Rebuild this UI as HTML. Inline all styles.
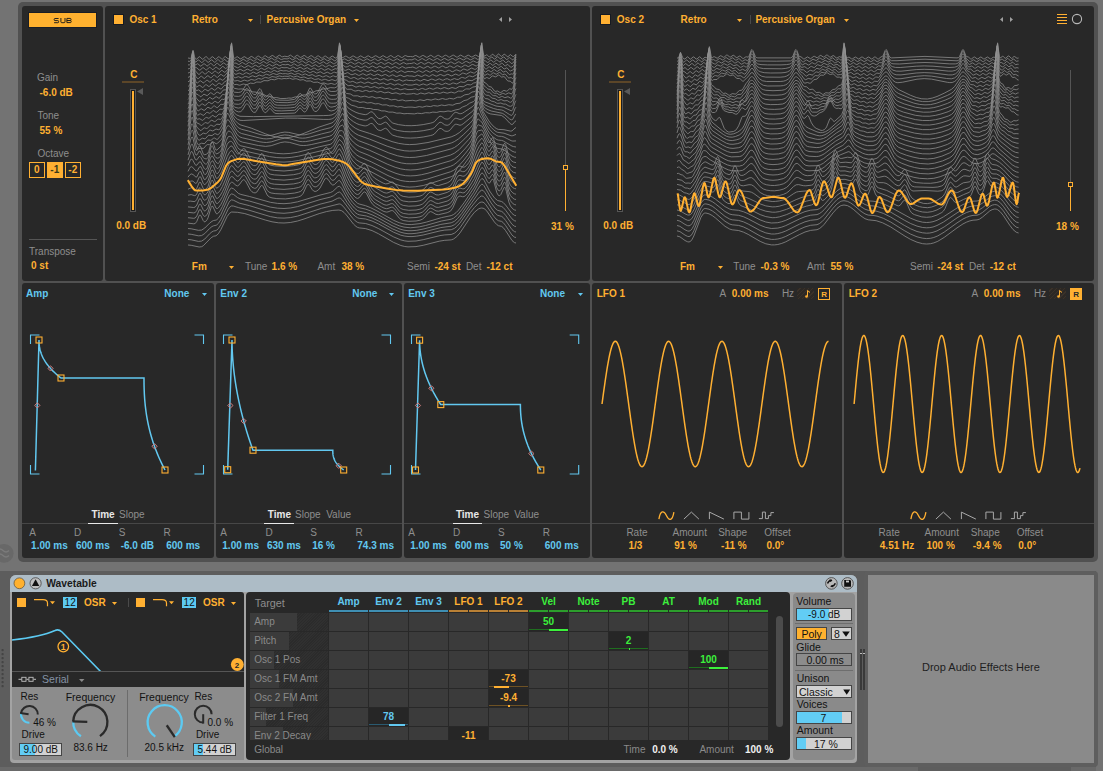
<!DOCTYPE html>
<html><head><meta charset="utf-8">
<style>
*{margin:0;padding:0;box-sizing:border-box}
html,body{width:1103px;height:771px;overflow:hidden;background:#737373;font-family:"Liberation Sans",sans-serif}
.a{position:absolute;display:block}
.p{position:absolute;background:#282828;border-radius:3px}
.t{position:absolute;line-height:1;white-space:nowrap;font-size:10px}
</style></head><body>
<div class="a" style="left:18px;top:2px;width:1080px;height:560px;background:#515151;border-radius:5px"></div>
<div class="p" style="left:22px;top:6px;width:81px;height:275px"></div>
<div class="p" style="left:105px;top:6px;width:485px;height:275px"></div>
<div class="p" style="left:592px;top:6px;width:502px;height:275px"></div>
<div class="p" style="left:22px;top:283px;width:192px;height:275px"></div>
<div class="p" style="left:216px;top:283px;width:186px;height:275px"></div>
<div class="p" style="left:404px;top:283px;width:186px;height:275px"></div>
<div class="p" style="left:592px;top:283px;width:250px;height:275px"></div>
<div class="p" style="left:844px;top:283px;width:250px;height:275px"></div>
<svg class="a" style="left:0px;top:540px" width="20" height="26" viewBox="0 540 20 26"><circle cx="4.2" cy="553.3" r="9.4" fill="#686868"/><path d="M-3 550.5q3-3 6 0t6 0M-3 555.5q3-3 6 0t6 0" stroke="#7b7b7b" stroke-width="1.3" fill="none"/></svg>
<div class="a" style="left:28px;top:12px;width:69px;height:16px;background:#1a1d24;"></div>
<div class="a" style="left:29px;top:13px;width:67px;height:14px;background:#ffb12f;"></div>
<svg class="a" style="left:50px;top:15px" width="26" height="10" viewBox="50 15 26 10"><path d="M58.6 18.5H55Q54.2 18.5 54.2 19.4V19.8Q54.2 20.6 55 20.6H57.8Q58.6 20.6 58.6 21.4V21.9Q58.6 22.7 57.8 22.7H54.1M60.9 18V21.8Q60.9 22.7 61.8 22.7H64.1Q65 22.7 65 21.8V18M66.9 18.4H70.2Q71 18.4 71 19.3V19.7Q71 20.5 70.2 20.5H66.9M70.2 20.5Q71.2 20.5 71.2 21.4V21.8Q71.2 22.6 70.4 22.6H66.9V18.4" stroke="#1a1a1a" stroke-width="0.95" fill="none"/></svg>
<div class="t" style="left:37.0px;top:72.73px;font-size:10px;color:#8e8e8e;">Gain</div>
<div class="t" style="left:39.5px;top:87.73px;font-size:10px;font-weight:bold;color:#ffb032;">-6.0 dB</div>
<div class="t" style="left:37.5px;top:110.83px;font-size:10px;color:#8e8e8e;">Tone</div>
<div class="t" style="left:39.5px;top:125.83px;font-size:10px;font-weight:bold;color:#ffb032;">55 %</div>
<div class="t" style="left:37.5px;top:148.73px;font-size:10px;color:#8e8e8e;">Octave</div>
<div class="a" style="left:29px;top:162px;width:16px;height:16px;background:transparent;border:1px solid #ffb032"></div>
<div class="t" style="left:34.0px;top:165.13px;font-size:10px;font-weight:bold;color:#ffb032;">0</div>
<div class="a" style="left:47px;top:162px;width:16px;height:16px;background:#ffb032;"></div>
<div class="t" style="left:50.3px;top:165.13px;font-size:10px;font-weight:bold;color:#3a3a1a;">-1</div>
<div class="a" style="left:65px;top:162px;width:16px;height:16px;background:transparent;border:1px solid #ffb032"></div>
<div class="t" style="left:68.3px;top:165.13px;font-size:10px;font-weight:bold;color:#ffb032;">-2</div>
<div class="a" style="left:29px;top:239px;width:68px;height:1px;background:#555;"></div>
<div class="t" style="left:29.0px;top:246.53px;font-size:10px;color:#8e8e8e;">Transpose</div>
<div class="t" style="left:31.0px;top:261.33px;font-size:10px;font-weight:bold;color:#ffb032;">0 st</div>
<div class="a" style="left:113px;top:14px;width:11px;height:11px;background:#161a22;"></div>
<div class="a" style="left:114px;top:15px;width:9px;height:9px;background:#ffb032;"></div>
<div class="t" style="left:129.4px;top:14.63px;font-size:10px;font-weight:bold;color:#ffb032;">Osc 1</div>
<div class="t" style="left:191.7px;top:14.63px;font-size:10px;font-weight:bold;color:#ffb032;">Retro</div>
<svg class="a" style="left:247px;top:18px" width="7" height="5" viewBox="247 18 7 5"><path d="M248 19H253L250.5 22Z" fill="#ffb032"/></svg>
<div class="a" style="left:260px;top:15px;width:1px;height:9px;background:#4a4a4a;"></div>
<div class="t" style="left:266.6px;top:14.63px;font-size:10px;font-weight:bold;color:#ffb032;">Percusive Organ</div>
<svg class="a" style="left:353px;top:18px" width="7" height="5" viewBox="353 18 7 5"><path d="M354 19H359L356.5 22Z" fill="#ffb032"/></svg>
<svg class="a" style="left:498px;top:15px" width="16" height="9" viewBox="498 15 16 9"><path d="M502 17V22L499 19.5Z" fill="#a0a0a0"/><path d="M509 17V22L512 19.5Z" fill="#a0a0a0"/></svg>
<div class="t" style="left:130.2px;top:69.83px;font-size:10px;font-weight:bold;color:#ffb032;">C</div>
<div class="a" style="left:122px;top:81px;width:22px;height:2px;background:#5c4628;"></div>
<div class="a" style="left:130px;top:89px;width:6px;height:123px;background:#555;"></div>
<div class="a" style="left:131px;top:90px;width:4px;height:121px;background:#1d1d1d;"></div>
<div class="a" style="left:131.7px;top:91px;width:2.6px;height:119px;background:#ffb032;"></div>
<svg class="a" style="left:136px;top:87px" width="8" height="9" viewBox="136 87 8 9"><path d="M137 91.5L143 88V95Z" fill="#5a5a5a"/></svg>
<div class="t" style="left:116.2px;top:220.63px;font-size:10px;font-weight:bold;color:#ffb032;">0.0 dB</div>
<div class="a" style="left:565px;top:70px;width:1px;height:95px;background:#555;"></div>
<div class="a" style="left:565px;top:170px;width:1px;height:41px;background:#ffb032;"></div>
<div class="a" style="left:563px;top:165px;width:5px;height:5px;background:transparent;border:1px solid #ffb032"></div>
<div class="t" style="left:551.0px;top:221.83px;font-size:10px;font-weight:bold;color:#ffb032;">31 %</div>
<div class="t" style="left:191.8px;top:261.53px;font-size:10px;font-weight:bold;color:#ffb032;">Fm</div>
<svg class="a" style="left:228px;top:265px" width="7" height="5" viewBox="228 265 7 5"><path d="M229 266H234L231.5 269Z" fill="#ffb032"/></svg>
<div class="t" style="left:244.9px;top:261.53px;font-size:10px;color:#8e8e8e;">Tune</div>
<div class="t" style="left:271.6px;top:261.53px;font-size:10px;font-weight:bold;color:#ffb032;">1.6 %</div>
<div class="t" style="left:317.4px;top:261.53px;font-size:10px;color:#8e8e8e;">Amt</div>
<div class="t" style="left:341.4px;top:261.53px;font-size:10px;font-weight:bold;color:#ffb032;">38 %</div>
<div class="t" style="left:407.1px;top:261.53px;font-size:10px;color:#8e8e8e;">Semi</div>
<div class="t" style="left:434.4px;top:261.53px;font-size:10px;font-weight:bold;color:#ffb032;">-24 st</div>
<div class="t" style="left:465.9px;top:261.53px;font-size:10px;color:#8e8e8e;">Det</div>
<div class="t" style="left:486.4px;top:261.53px;font-size:10px;font-weight:bold;color:#ffb032;">-12 ct</div>
<div class="a" style="left:600px;top:14px;width:11px;height:11px;background:#161a22;"></div>
<div class="a" style="left:601px;top:15px;width:9px;height:9px;background:#ffb032;"></div>
<div class="t" style="left:616.8px;top:14.63px;font-size:10px;font-weight:bold;color:#ffb032;">Osc 2</div>
<div class="t" style="left:680.6px;top:14.63px;font-size:10px;font-weight:bold;color:#ffb032;">Retro</div>
<svg class="a" style="left:736px;top:18px" width="7" height="5" viewBox="736 18 7 5"><path d="M737 19H742L739.5 22Z" fill="#ffb032"/></svg>
<div class="a" style="left:749.6px;top:15px;width:1px;height:9px;background:#4a4a4a;"></div>
<div class="t" style="left:755.4px;top:14.63px;font-size:10px;font-weight:bold;color:#ffb032;">Percusive Organ</div>
<svg class="a" style="left:842.5px;top:18px" width="7" height="5" viewBox="842.5 18 7 5"><path d="M843.5 19H848.5L846.0 22Z" fill="#ffb032"/></svg>
<svg class="a" style="left:999px;top:15px" width="16" height="9" viewBox="999 15 16 9"><path d="M1003 17V22L1000 19.5Z" fill="#a0a0a0"/><path d="M1010 17V22L1013 19.5Z" fill="#a0a0a0"/></svg>
<div class="t" style="left:617.2px;top:69.83px;font-size:10px;font-weight:bold;color:#ffb032;">C</div>
<div class="a" style="left:609px;top:81px;width:22px;height:2px;background:#5c4628;"></div>
<div class="a" style="left:617px;top:89px;width:6px;height:123px;background:#555;"></div>
<div class="a" style="left:618px;top:90px;width:4px;height:121px;background:#1d1d1d;"></div>
<div class="a" style="left:618.7px;top:91px;width:2.6px;height:119px;background:#ffb032;"></div>
<svg class="a" style="left:623px;top:87px" width="8" height="9" viewBox="623 87 8 9"><path d="M624 91.5L630 88V95Z" fill="#5a5a5a"/></svg>
<div class="t" style="left:603.2px;top:220.63px;font-size:10px;font-weight:bold;color:#ffb032;">0.0 dB</div>
<div class="a" style="left:1070px;top:70px;width:1px;height:112px;background:#555;"></div>
<div class="a" style="left:1070px;top:187px;width:1px;height:24px;background:#ffb032;"></div>
<div class="a" style="left:1068px;top:182px;width:5px;height:5px;background:transparent;border:1px solid #ffb032"></div>
<div class="t" style="left:1056.0px;top:221.83px;font-size:10px;font-weight:bold;color:#ffb032;">18 %</div>
<div class="t" style="left:679.9px;top:261.53px;font-size:10px;font-weight:bold;color:#ffb032;">Fm</div>
<svg class="a" style="left:717px;top:265px" width="7" height="5" viewBox="717 265 7 5"><path d="M718 266H723L720.5 269Z" fill="#ffb032"/></svg>
<div class="t" style="left:733.2px;top:261.53px;font-size:10px;color:#8e8e8e;">Tune</div>
<div class="t" style="left:760.5px;top:261.53px;font-size:10px;font-weight:bold;color:#ffb032;">-0.3 %</div>
<div class="t" style="left:807.0px;top:261.53px;font-size:10px;color:#8e8e8e;">Amt</div>
<div class="t" style="left:830.5px;top:261.53px;font-size:10px;font-weight:bold;color:#ffb032;">55 %</div>
<div class="t" style="left:910.1px;top:261.53px;font-size:10px;color:#8e8e8e;">Semi</div>
<div class="t" style="left:937.3px;top:261.53px;font-size:10px;font-weight:bold;color:#ffb032;">-24 st</div>
<div class="t" style="left:969.0px;top:261.53px;font-size:10px;color:#8e8e8e;">Det</div>
<div class="t" style="left:989.7px;top:261.53px;font-size:10px;font-weight:bold;color:#ffb032;">-12 ct</div>
<svg class="a" style="left:1055px;top:12px" width="30" height="14" viewBox="1055 12 30 14"><path d="M1057 14.5H1067M1057 17.5H1067M1057 20.5H1067M1057 23.5H1067" stroke="#ffb032" stroke-width="1.2"/><circle cx="1077" cy="19" r="4.6" stroke="#b8b8b8" stroke-width="1.1" fill="none"/></svg>
<svg class="a" style="left:184px;top:36px" width="336" height="215" viewBox="184 36 336 215"><g stroke="#909090" stroke-width="0.9" fill="none" stroke-opacity="0.85"><path d="M188.0 58.0L190.4 58.4L191.2 57.5L193.0 50.3L193.6 52.0L194.4 56.3L195.2 58.6L196.0 59.3L196.8 59.0L199.2 56.7L200.0 56.9L202.4 59.3L203.2 59.1L205.6 56.7L206.4 56.8L208.8 59.2L209.6 59.1L212.0 56.8L212.8 56.8L215.2 59.2L216.0 59.2L218.4 56.8L219.2 56.7L221.6 59.1L222.4 59.2L224.8 56.8L225.6 56.7L228.0 58.8L228.8 58.7L229.6 57.3L231.6 42.8L233.6 57.3L234.4 58.3L235.2 58.1L236.8 56.9L237.6 56.8L240.0 58.7L240.8 58.9L244.0 56.7L244.8 56.8L247.2 58.6L248.0 58.7L251.2 56.4L252.0 56.6L254.4 58.4L255.2 58.3L257.6 56.3L258.4 56.1L261.6 58.1L262.4 57.9L264.8 55.8L265.6 55.8L268.0 57.6L268.8 57.8L272.0 55.5L272.8 55.5L275.2 57.4L276.0 57.5L279.2 55.2L280.0 55.4L281.6 56.7L282.4 56.8L284.8 56.2L287.2 56.7L288.0 56.5L290.4 55.1L293.6 57.4L294.4 57.2L296.8 55.3L297.6 55.3L300.0 57.3L300.8 57.5L304.0 55.4L304.8 55.6L307.2 57.6L308.0 57.7L310.4 55.9L311.2 55.7L312.0 55.9L314.4 57.9L315.2 57.9L317.6 56.0L318.4 55.9L321.6 58.1L322.4 58.0L324.8 56.1L325.6 56.1L328.0 58.0L328.8 58.3L329.6 58.0L332.0 56.1L332.8 56.2L335.2 58.1L336.0 58.0L336.8 57.5L337.6 55.9L339.5 42.8L341.6 56.7L342.4 57.5L343.2 57.4L345.6 56.1L346.4 56.3L348.8 57.9L349.6 58.0L352.8 56.0L353.6 56.1L356.8 58.0L357.6 57.8L360.0 56.1L360.8 55.9L364.0 57.8L364.8 57.8L368.0 55.8L368.8 56.0L371.2 57.7L372.0 57.8L375.2 55.8L376.0 55.8L379.2 57.7L380.0 57.6L382.4 55.9L383.2 55.7L386.4 57.6L387.2 57.6L390.4 55.6L391.2 55.7L393.6 57.4L394.4 57.6L395.2 57.4L397.6 55.7L398.4 55.6L401.6 57.5L402.4 57.4L404.8 55.7L405.6 55.6L408.0 56.6L410.4 56.5L412.8 56.8L415.2 55.5L416.0 55.5L419.2 57.4L420.0 57.2L422.4 55.5L423.2 55.4L426.4 57.3L427.2 57.3L430.4 55.3L431.2 55.4L433.6 57.1L434.4 57.3L435.2 57.0L437.6 55.4L438.4 55.3L441.6 57.2L442.4 57.1L444.8 55.4L445.6 55.2L446.4 55.4L448.8 57.1L449.6 57.2L452.8 55.2L453.6 55.2L456.8 57.2L457.6 57.0L460.0 55.3L460.8 55.1L464.0 57.1L464.8 57.1L468.0 55.1L468.8 55.3L471.2 56.9L472.0 57.1L475.2 55.1L476.0 55.1L478.4 56.6L479.2 56.5L480.0 55.0L481.8 42.7L483.2 52.8L484.0 56.0L484.8 56.1L486.4 54.9L487.2 55.0L488.8 56.6L489.6 56.9L492.0 54.4L492.8 54.3L495.2 56.4L496.0 56.3L498.4 54.0L499.2 54.3L500.8 56.1L501.6 56.4L504.0 54.3L504.8 54.2L507.2 56.7L508.0 56.7L510.4 54.6L512.8 56.5L513.6 56.5L516.0 54.1"/><path d="M188.0 61.2L189.6 61.4L190.4 61.0L191.2 59.5L192.4 52.7L193.0 50.9L194.4 59.5L195.2 62.1L196.0 62.1L197.6 60.3L198.4 59.9L199.2 60.3L200.8 62.0L201.6 62.5L202.4 62.2L204.8 59.9L205.6 60.1L208.0 62.4L208.8 62.1L211.2 59.8L212.0 59.9L214.4 62.2L215.2 62.1L217.6 59.8L218.4 59.8L220.8 62.1L221.6 62.0L224.0 59.6L224.8 59.5L227.2 61.7L228.0 61.6L228.8 60.7L229.6 58.3L231.0 45.5L231.2 44.2L231.6 43.8L232.8 55.1L233.6 59.8L234.4 60.5L236.0 59.7L236.8 59.6L239.2 61.4L240.0 61.5L243.2 59.3L244.0 59.6L246.4 61.3L247.2 61.2L249.6 59.3L250.4 59.1L253.6 61.1L254.4 60.9L256.8 58.9L257.6 58.8L260.0 60.5L260.8 60.7L264.0 58.5L264.8 58.5L267.2 60.3L268.0 60.3L271.2 58.1L272.0 58.3L274.4 60.0L275.2 60.0L277.6 58.0L278.4 57.9L280.8 59.4L281.6 59.5L284.0 58.7L287.2 58.9L289.6 57.9L292.0 59.6L292.8 59.9L296.0 57.8L296.8 58.0L299.2 59.9L300.0 60.0L303.2 58.0L304.0 58.3L306.4 60.2L307.2 60.2L309.6 58.4L310.4 58.3L313.6 60.5L314.4 60.3L316.8 58.6L317.6 58.5L320.0 60.4L320.8 60.7L324.0 58.7L324.8 58.8L327.2 60.7L328.0 60.8L331.2 58.7L332.0 59.0L334.4 60.8L335.2 60.7L336.8 59.4L337.6 58.1L339.5 43.7L340.0 44.8L341.6 58.4L342.4 59.7L344.8 58.8L348.0 60.7L348.8 60.7L352.0 58.8L352.8 59.0L355.2 60.7L356.0 60.8L359.2 58.9L360.0 58.9L363.2 60.8L364.0 60.6L366.4 59.0L367.2 58.8L370.4 60.7L371.2 60.7L374.4 58.8L375.2 58.9L377.6 60.6L378.4 60.7L381.6 58.8L382.4 58.8L385.6 60.7L386.4 60.6L388.8 59.0L389.6 58.8L392.8 60.6L393.6 60.7L396.8 58.8L397.6 58.9L400.0 60.5L400.8 60.7L401.6 60.5L404.0 58.9L404.8 58.8L407.2 60.0L408.0 60.1L409.6 59.7L412.0 59.9L414.4 58.8L415.2 58.8L417.6 60.4L418.4 60.6L421.6 58.7L422.4 58.6L425.6 60.5L426.4 60.4L428.8 58.7L429.6 58.5L432.8 60.3L433.6 60.4L436.8 58.5L437.6 58.5L440.0 60.1L440.8 60.3L441.6 60.1L444.0 58.5L444.8 58.4L448.0 60.3L448.8 60.2L452.0 58.3L452.8 58.5L455.2 60.1L456.0 60.2L459.2 58.2L460.0 58.2L463.2 60.0L464.0 59.8L466.4 58.1L467.2 58.0L470.4 59.8L471.2 59.7L474.4 57.8L475.2 57.9L477.6 59.4L478.4 59.3L479.2 58.7L480.0 55.8L481.6 43.4L483.2 55.3L484.0 58.2L485.6 57.7L486.4 57.8L488.0 59.3L488.8 59.5L491.2 57.1L492.0 57.0L494.4 59.1L495.2 58.9L496.8 57.1L497.6 56.7L498.4 57.0L500.0 58.8L500.8 59.0L503.2 57.0L504.0 57.0L506.4 59.5L507.2 59.4L508.8 57.9L509.6 57.6L510.4 58.0L512.0 59.7L512.8 59.8L513.6 59.3L514.4 58.3L516.0 54.5"/><path d="M188.0 64.9L189.6 64.8L190.4 64.1L191.2 62.1L192.4 53.8L193.0 51.9L194.4 62.4L195.2 65.1L197.6 63.7L198.4 64.1L200.0 65.9L200.8 66.2L204.0 63.6L204.8 64.0L206.4 65.7L207.2 66.0L208.0 65.7L209.6 63.9L210.4 63.4L211.2 63.6L213.6 65.8L214.4 65.6L216.8 63.3L217.6 63.4L220.0 65.6L220.8 65.4L223.2 62.9L224.0 62.9L226.4 65.0L227.2 64.9L228.8 62.7L229.6 58.9L231.2 44.7L231.6 45.8L232.8 58.3L233.6 62.5L234.4 63.2L236.0 63.0L238.4 64.5L239.2 64.5L241.6 62.7L242.4 62.5L245.6 64.4L246.4 64.2L248.8 62.4L249.6 62.3L252.0 63.9L252.8 64.1L256.0 62.0L256.8 62.0L259.2 63.6L260.0 63.7L263.2 61.5L264.0 61.7L266.4 63.3L267.2 63.2L269.6 61.4L270.4 61.2L273.6 63.0L274.4 62.8L276.8 61.0L277.6 60.9L280.0 62.6L280.8 62.6L283.2 61.5L286.4 61.7L288.8 61.0L291.2 62.6L292.0 62.7L295.2 60.8L296.0 61.0L298.4 62.8L299.2 62.8L301.6 61.1L302.4 61.0L305.6 63.1L306.4 63.0L308.8 61.3L309.6 61.3L312.0 63.2L312.8 63.4L316.0 61.5L316.8 61.7L319.2 63.5L320.0 63.6L323.2 61.7L324.0 62.0L326.4 63.8L327.2 63.7L329.6 62.0L330.4 61.8L333.6 63.8L334.4 63.7L336.8 62.1L337.6 61.0L338.3 57.1L339.5 45.4L340.0 45.0L341.6 59.6L342.4 62.0L344.8 62.4L347.2 63.9L348.0 63.7L350.4 62.2L351.2 62.2L354.4 64.1L355.2 64.1L358.4 62.3L359.2 62.5L361.6 64.0L362.4 64.2L365.6 62.3L366.4 62.3L369.6 64.1L370.4 64.0L372.8 62.4L373.6 62.3L376.8 64.1L377.6 64.2L380.8 62.4L381.6 62.5L384.0 64.1L384.8 64.3L388.0 62.5L388.8 62.5L392.0 64.4L392.8 64.3L395.2 62.7L396.0 62.5L396.8 62.8L399.2 64.3L400.0 64.4L403.2 62.6L404.0 62.7L406.4 64.0L409.6 63.5L411.2 63.5L413.6 62.8L414.4 62.8L416.8 64.3L417.6 64.3L420.8 62.4L421.6 62.5L424.0 64.1L424.8 64.2L428.0 62.4L428.8 62.3L432.0 64.1L432.8 64.0L435.2 62.4L436.0 62.2L436.8 62.4L439.2 63.9L440.0 64.0L443.2 62.1L444.0 62.2L446.4 63.7L447.2 63.9L448.0 63.7L450.4 62.1L451.2 62.0L454.4 63.8L455.2 63.7L458.4 61.8L459.2 61.9L461.6 63.4L462.4 63.5L465.6 61.5L466.4 61.4L469.6 63.0L470.4 62.8L472.8 61.1L473.6 61.0L476.8 62.6L478.4 62.0L479.2 60.6L480.0 56.1L481.2 45.1L481.6 44.6L483.2 58.2L484.0 60.8L485.6 61.0L487.2 62.4L488.0 62.5L490.4 60.2L491.2 60.2L493.6 62.2L494.4 61.9L496.0 60.2L496.8 59.8L497.6 60.2L499.2 61.8L500.0 62.0L502.4 60.1L503.2 60.2L505.6 62.6L506.4 62.6L508.0 61.2L508.8 61.0L511.2 63.4L512.0 63.5L513.6 62.4L514.4 61.0L516.0 55.5"/><path d="M188.0 68.9L189.6 68.5L190.4 67.7L191.2 65.0L192.8 53.3L193.6 57.3L194.4 64.7L195.2 67.7L196.8 67.8L199.2 70.0L200.0 70.2L202.4 68.0L203.2 67.7L204.0 68.1L205.6 69.7L206.4 70.0L207.2 69.5L208.8 67.7L209.6 67.3L210.4 67.6L212.0 69.3L212.8 69.6L213.6 69.3L215.2 67.5L216.0 67.1L216.8 67.3L218.4 69.0L219.2 69.4L220.0 69.0L222.4 66.5L223.2 66.6L225.6 68.6L226.4 68.3L228.0 66.3L228.8 64.4L231.0 46.2L231.6 48.6L232.8 61.7L233.6 65.6L234.4 66.3L237.6 67.8L238.4 67.6L240.8 65.9L241.6 65.9L244.0 67.5L244.8 67.6L248.0 65.6L248.8 65.7L251.2 67.2L252.0 67.3L255.2 65.2L256.0 65.4L258.4 66.9L259.2 66.8L261.6 65.0L262.4 64.8L265.6 66.5L266.4 66.3L268.8 64.5L269.6 64.4L272.0 65.9L272.8 66.1L276.0 64.1L276.8 64.1L279.2 65.7L280.0 65.8L282.4 64.5L285.6 64.8L288.0 64.3L290.4 65.7L291.2 65.6L293.6 64.0L294.4 63.9L297.6 65.9L298.4 65.7L300.8 64.2L301.6 64.2L304.0 65.9L304.8 66.1L308.0 64.4L308.8 64.6L311.2 66.3L312.0 66.5L315.2 64.7L316.0 65.0L318.4 66.7L319.2 66.7L321.6 65.1L322.4 65.0L325.6 67.0L326.4 66.8L328.8 65.2L329.6 65.2L332.0 66.8L332.8 67.0L335.2 65.5L336.8 65.3L337.6 64.4L338.3 60.6L339.5 47.9L340.0 46.0L341.6 60.1L342.4 64.4L343.2 65.5L345.6 67.0L347.2 66.9L349.6 65.6L350.4 65.7L353.6 67.6L354.4 67.5L356.8 66.1L357.6 66.0L360.8 67.7L361.6 67.7L364.8 66.0L365.6 66.1L368.0 67.6L368.8 67.8L372.0 66.1L372.8 66.1L376.0 67.9L376.8 67.8L379.2 66.3L380.0 66.2L383.2 68.0L384.0 68.0L387.2 66.3L388.0 66.5L390.4 68.0L391.2 68.2L394.4 66.6L395.2 66.5L398.4 68.3L399.2 68.3L401.6 66.8L402.4 66.6L405.6 68.2L408.8 67.4L410.4 67.5L412.8 67.0L416.0 68.3L416.8 68.2L419.2 66.6L420.0 66.5L423.2 68.2L424.0 68.2L427.2 66.4L428.0 66.4L430.4 67.9L431.2 68.0L434.4 66.3L435.2 66.2L438.4 67.9L439.2 67.8L441.6 66.3L442.4 66.0L443.2 66.2L445.6 67.7L447.2 67.5L449.6 66.0L450.4 66.1L453.6 67.7L454.4 67.5L456.8 65.9L457.6 65.7L460.8 67.2L461.6 67.1L464.8 65.1L465.6 65.2L468.0 66.5L468.8 66.5L472.0 64.5L472.8 64.4L476.0 66.0L476.8 65.8L478.4 64.4L479.2 62.0L481.2 45.8L481.8 48.1L483.2 61.3L484.0 63.9L486.4 65.6L487.2 65.7L489.6 63.5L490.4 63.5L492.8 65.4L493.6 65.1L495.2 63.4L496.0 63.1L498.4 65.0L499.2 65.1L501.6 63.2L502.4 63.4L504.8 65.8L505.6 65.8L507.2 64.6L508.0 64.5L510.4 67.1L511.2 67.3L513.6 65.8L514.4 64.0L515.4 58.7L516.0 57.0"/><path d="M188.0 73.0L189.6 72.5L190.4 71.6L191.2 67.9L192.4 56.6L192.8 55.0L193.6 59.2L194.4 66.7L195.2 70.6L198.4 74.3L199.2 74.4L201.6 72.1L202.4 71.9L204.8 74.0L205.6 74.1L208.0 71.7L208.8 71.4L209.6 71.8L211.2 73.4L212.0 73.6L214.4 71.4L215.2 71.0L216.0 71.4L217.6 73.0L218.4 73.3L219.2 72.9L220.8 70.9L221.6 70.4L222.4 70.6L224.0 72.0L224.8 72.3L225.6 71.9L228.0 68.9L228.8 66.1L230.4 49.9L231.0 48.0L232.8 65.3L233.6 69.0L234.4 69.9L236.8 71.1L240.0 69.4L240.8 69.5L243.2 70.9L244.0 71.0L247.2 69.1L248.0 69.3L250.4 70.6L251.2 70.6L253.6 68.9L254.4 68.7L257.6 70.2L258.4 70.0L260.8 68.3L261.6 68.2L264.0 69.5L264.8 69.7L268.0 67.7L268.8 67.7L271.2 69.1L272.0 69.1L275.2 67.2L276.0 67.4L278.4 68.8L279.2 68.8L281.6 67.4L284.0 67.8L287.2 67.6L289.6 68.6L290.4 68.6L292.8 67.1L293.6 67.1L296.0 68.7L296.8 68.9L300.0 67.3L300.8 67.4L303.2 69.1L304.0 69.2L307.2 67.6L310.4 69.5L311.2 69.5L313.6 68.1L314.4 68.1L317.6 70.0L318.4 69.9L320.8 68.4L321.6 68.4L324.0 70.0L324.8 70.3L328.0 68.6L328.8 68.7L331.2 70.3L332.0 70.3L335.2 68.6L336.8 69.1L337.6 68.1L338.3 64.2L339.5 51.1L340.1 47.7L340.7 50.2L342.4 66.5L343.2 69.0L344.8 70.4L345.6 70.4L348.8 69.1L352.0 71.0L352.8 71.2L356.0 69.8L356.8 69.8L360.0 71.5L360.8 71.4L363.2 69.9L364.0 69.8L367.2 71.5L368.0 71.5L371.2 69.9L375.2 71.7L378.4 70.1L379.2 70.1L382.4 71.9L383.2 71.8L385.6 70.5L386.4 70.4L389.6 72.1L390.4 72.2L393.6 70.6L394.4 70.7L396.8 72.2L397.6 72.4L400.8 70.9L401.6 70.8L404.8 72.5L408.0 71.4L410.4 71.7L412.0 71.4L415.2 72.5L418.4 70.8L419.2 70.8L422.4 72.3L423.2 72.2L425.6 70.7L426.4 70.5L429.6 72.1L430.4 72.1L433.6 70.4L434.4 70.4L436.8 71.8L437.6 72.0L440.8 70.3L442.4 70.5L444.8 71.8L445.6 71.7L448.8 70.1L449.6 70.3L452.0 71.7L452.8 71.7L456.0 69.9L456.8 69.9L460.0 71.2L460.8 70.9L463.2 69.2L464.0 69.0L467.2 70.3L468.0 70.1L471.2 68.1L472.0 68.1L474.4 69.3L475.2 69.4L476.8 68.5L478.4 66.7L479.2 63.0L480.6 49.3L480.8 48.1L481.2 47.6L483.2 64.8L484.0 67.4L485.6 68.8L486.4 68.9L488.8 66.9L489.6 66.9L492.0 68.6L492.8 68.2L494.4 66.6L495.2 66.3L497.6 68.2L498.4 68.2L500.8 66.4L501.6 66.6L504.0 69.0L504.8 68.9L506.4 67.9L507.2 68.0L509.6 70.7L510.4 71.0L513.6 69.6L514.4 67.2L515.4 60.9L516.0 59.0"/><path d="M188.0 77.3L189.6 76.9L190.4 75.5L191.2 70.4L192.4 58.2L192.8 56.9L195.2 74.4L196.0 76.7L197.6 78.6L198.4 78.6L200.8 76.4L201.6 76.3L204.0 78.4L204.8 78.4L207.2 75.9L208.0 75.7L210.4 77.6L211.2 77.7L213.6 75.4L214.4 75.1L216.8 77.2L217.6 77.4L220.0 74.9L220.8 74.5L221.6 74.7L223.2 76.0L224.0 76.2L224.8 75.6L228.0 71.6L228.8 67.2L230.4 50.7L231.0 50.9L231.2 52.3L232.8 69.1L233.6 72.6L234.4 73.8L236.0 74.4L239.2 73.0L242.4 74.4L243.2 74.4L245.6 72.9L246.4 72.7L249.6 74.1L250.4 73.9L252.8 72.3L253.6 72.2L256.0 73.4L256.8 73.5L260.0 71.6L260.8 71.6L263.2 72.8L264.0 72.8L267.2 71.0L270.4 72.3L271.2 72.2L273.6 70.6L274.4 70.4L277.6 71.8L280.8 70.3L283.2 70.9L286.4 70.7L288.8 71.4L289.6 71.3L292.0 70.1L292.8 70.2L295.2 71.7L296.0 71.8L299.2 70.4L302.4 72.1L303.2 72.1L305.6 70.9L306.4 70.8L309.6 72.7L310.4 72.6L312.8 71.4L313.6 71.4L316.8 73.2L320.0 71.8L320.8 71.9L323.2 73.5L324.0 73.6L327.2 72.1L330.4 73.7L331.2 73.7L333.6 72.3L334.4 72.2L336.8 73.0L337.6 71.7L338.3 67.8L340.1 50.1L340.7 50.8L340.8 51.5L342.4 68.1L343.2 72.2L344.0 73.6L344.8 73.8L347.2 72.7L348.0 72.7L350.4 74.3L352.0 74.8L355.2 73.6L358.4 75.3L359.2 75.4L362.4 73.8L363.2 73.8L366.4 75.4L370.4 73.8L373.6 75.5L374.4 75.5L377.6 74.1L381.6 75.9L384.8 74.5L385.6 74.5L388.8 76.3L389.6 76.2L392.0 75.0L392.8 74.8L396.0 76.5L396.8 76.6L400.0 75.1L400.8 75.2L404.0 76.8L407.2 75.6L409.6 76.0L412.0 76.0L414.4 76.6L417.6 75.1L421.6 76.6L424.8 75.0L425.6 74.9L428.8 76.4L429.6 76.3L432.0 74.8L432.8 74.6L436.0 76.1L436.8 76.1L440.0 74.5L440.8 74.5L444.0 76.0L447.2 74.4L448.0 74.3L451.2 75.9L452.0 75.8L455.2 74.1L456.0 74.2L458.4 75.3L459.2 75.3L462.4 73.2L463.2 73.1L466.4 74.2L470.4 71.9L473.6 73.0L474.4 73.0L477.6 70.7L478.4 68.9L480.8 49.5L481.2 50.3L481.6 53.3L483.2 68.4L484.0 71.1L484.8 72.0L485.6 72.2L488.0 70.4L488.8 70.4L490.4 71.6L491.2 71.9L493.6 69.8L494.4 69.6L496.8 71.3L497.6 71.3L500.0 69.5L500.8 69.7L503.2 72.0L504.0 71.9L505.6 71.1L506.4 71.3L508.8 74.2L509.6 74.6L511.2 73.9L512.8 74.1L513.6 73.6L514.4 70.4L515.4 63.5L516.0 61.6"/><path d="M188.0 81.7L189.6 81.2L190.4 78.9L192.0 63.3L192.4 60.1L192.8 59.1L193.6 63.8L195.2 78.9L196.0 81.9L196.8 82.9L197.6 82.9L200.0 80.8L200.8 80.9L203.2 82.9L204.0 82.7L206.4 80.3L207.2 80.2L209.6 82.0L210.4 81.9L212.8 79.5L213.6 79.4L216.0 81.5L216.8 81.6L219.2 79.0L220.0 78.7L222.4 80.2L223.2 80.2L225.6 77.4L227.2 76.4L228.0 74.2L230.4 52.4L231.0 54.6L232.8 73.0L233.6 76.4L234.4 77.6L235.2 77.8L238.4 76.7L241.6 78.0L242.4 77.8L244.8 76.5L245.6 76.4L248.8 77.5L252.0 75.8L252.8 75.8L255.2 76.8L256.0 76.8L259.2 75.0L262.4 76.1L263.2 75.9L265.6 74.4L266.4 74.2L269.6 75.3L272.8 73.6L273.6 73.5L276.8 74.7L280.0 73.1L282.4 73.8L285.6 73.6L288.0 74.1L291.2 73.0L294.4 74.5L295.2 74.5L297.6 73.4L298.4 73.4L301.6 75.0L302.4 75.0L304.8 74.0L305.6 74.0L308.8 75.7L312.0 74.6L312.8 74.8L315.2 76.3L316.0 76.4L319.2 75.3L322.4 76.9L323.2 76.9L325.6 75.8L326.4 75.7L329.6 77.2L330.4 77.1L332.8 75.9L333.6 75.9L336.0 76.9L336.8 76.6L337.6 75.1L338.4 70.6L340.0 54.0L340.7 52.3L342.4 69.0L343.2 74.6L344.0 76.6L344.8 76.8L346.4 76.3L347.2 76.5L350.4 78.4L351.2 78.4L353.6 77.5L354.4 77.5L357.6 79.2L358.4 79.2L361.6 77.8L365.6 79.3L368.8 77.9L369.6 77.9L372.8 79.5L376.8 78.2L380.0 79.9L380.8 79.9L384.0 78.6L388.0 80.4L391.2 79.1L392.8 79.5L395.2 80.8L396.0 80.8L399.2 79.5L402.4 81.0L403.2 81.1L406.4 79.9L408.8 80.5L411.2 80.4L413.6 80.8L416.8 79.6L420.0 80.9L420.8 80.9L424.0 79.3L428.0 80.7L431.2 79.1L432.8 79.3L435.2 80.4L436.0 80.3L439.2 78.8L442.4 80.2L443.2 80.2L445.6 79.0L447.2 78.7L450.4 80.2L454.4 78.5L456.8 79.4L458.4 79.4L461.6 77.4L462.4 77.4L464.8 78.2L465.6 78.2L468.8 76.1L469.6 75.9L472.8 76.8L476.8 74.6L477.6 73.8L478.4 70.7L480.0 54.9L480.6 51.8L481.2 53.8L483.2 72.3L484.0 74.9L484.8 75.5L487.2 73.9L488.0 74.0L489.6 75.0L490.4 75.1L492.8 73.0L493.6 72.8L496.0 74.2L496.8 74.1L499.2 72.4L500.0 72.6L502.4 74.7L504.8 74.1L505.6 74.4L508.0 77.5L508.8 78.0L511.2 77.6L512.8 78.7L513.6 77.7L515.4 66.6L516.0 64.8"/><path d="M188.0 86.1L188.8 86.0L189.6 85.3L190.4 81.8L192.0 65.2L192.4 62.4L192.8 61.8L193.6 67.0L195.2 83.5L196.0 86.6L196.8 87.1L199.2 85.3L200.0 85.5L202.4 87.4L203.2 87.2L205.6 84.8L206.4 84.8L208.8 86.5L209.6 86.3L212.0 83.8L212.8 83.8L215.2 85.8L216.0 85.8L218.4 83.3L219.2 83.1L221.6 84.6L222.4 84.4L224.8 81.5L226.4 81.0L227.2 80.1L228.0 75.9L229.6 58.1L230.4 55.2L232.8 77.0L233.6 80.2L234.4 81.1L237.6 80.5L240.8 81.6L244.0 80.2L244.8 80.2L247.2 81.0L248.0 81.0L251.2 79.4L254.4 80.2L255.2 80.1L258.4 78.4L261.6 79.2L264.8 77.5L265.6 77.4L268.8 78.2L272.0 76.5L276.0 77.3L279.2 75.9L282.4 76.6L284.8 76.2L288.0 76.4L290.4 75.7L293.6 77.1L296.8 76.1L297.6 76.2L300.8 77.7L304.0 76.9L308.0 78.6L311.2 77.8L314.4 79.4L315.2 79.5L318.4 78.7L321.6 80.3L324.8 79.3L325.6 79.4L328.8 80.7L332.0 79.6L335.2 80.7L336.0 80.6L336.8 80.0L337.6 78.4L338.3 75.1L340.0 58.0L340.7 54.7L341.6 60.0L343.2 76.2L344.0 79.1L344.8 79.8L346.4 80.2L348.8 81.9L350.4 82.0L352.8 81.3L356.8 83.2L360.8 81.9L364.0 83.3L364.8 83.3L368.0 82.0L372.0 83.6L375.2 82.4L376.0 82.4L379.2 84.0L383.2 82.9L386.4 84.5L387.2 84.6L390.4 83.4L394.4 85.1L397.6 83.9L399.2 84.2L401.6 85.4L402.4 85.4L404.8 84.3L405.6 84.2L408.0 85.0L412.0 85.1L416.0 84.1L419.2 85.4L423.2 83.9L426.4 85.1L427.2 85.1L430.4 83.6L434.4 84.8L437.6 83.3L438.4 83.3L441.6 84.6L442.4 84.5L445.6 83.1L448.8 84.4L450.4 84.2L452.8 83.0L453.6 83.0L456.8 84.0L460.8 81.8L463.2 82.4L464.8 82.3L468.0 80.2L472.0 80.7L475.2 78.8L476.8 78.3L477.6 76.7L478.4 71.8L480.0 55.8L480.6 54.5L483.0 75.1L484.0 78.4L484.8 78.7L486.4 77.6L487.2 77.6L488.8 78.4L489.6 78.4L492.0 76.1L492.8 75.8L495.2 76.9L496.0 76.7L498.4 75.0L499.2 75.2L501.6 77.1L504.0 76.6L504.8 77.1L507.2 80.4L508.0 81.0L510.4 81.2L512.0 82.9L512.8 83.2L513.6 81.5L515.4 70.1L516.0 68.5"/><path d="M188.0 90.6L188.8 90.4L189.6 88.9L190.4 84.3L192.0 67.7L192.4 65.4L192.8 65.2L195.2 87.6L196.0 90.5L196.8 90.7L198.4 89.8L201.6 92.1L202.4 91.7L204.8 89.4L205.6 89.5L208.0 91.0L208.8 90.7L211.2 88.2L212.0 88.3L214.4 90.2L215.2 90.0L217.6 87.7L218.4 87.6L220.8 89.0L221.6 88.7L224.0 85.7L224.8 85.3L226.4 85.3L227.2 82.9L228.0 76.5L229.6 59.3L230.4 58.9L232.2 76.7L232.8 81.1L233.6 83.9L234.4 84.6L236.8 84.4L239.2 85.2L240.0 85.2L243.2 84.0L246.4 84.6L247.2 84.5L250.4 83.1L253.6 83.5L256.8 82.0L260.8 82.2L264.0 80.6L268.0 80.8L271.2 79.3L274.4 79.8L278.4 78.4L281.6 79.0L284.0 78.5L286.4 78.7L289.6 78.2L292.8 79.3L295.2 78.7L296.8 78.8L300.0 80.1L303.2 79.6L306.4 81.1L310.4 80.9L313.6 82.4L317.6 82.1L320.8 83.5L324.0 82.9L327.2 84.1L328.0 84.2L331.2 83.4L334.4 84.4L335.2 84.3L336.8 83.4L337.6 82.0L338.3 78.9L340.1 61.6L340.8 57.8L341.6 60.9L343.2 77.1L344.0 81.5L344.8 83.2L348.0 85.6L348.8 85.7L352.0 85.2L356.0 87.2L359.2 86.1L360.0 86.2L363.2 87.4L367.2 86.2L370.4 87.6L371.2 87.6L374.4 86.5L378.4 88.1L381.6 87.1L382.4 87.2L385.6 88.7L389.6 87.8L392.8 89.3L393.6 89.4L396.8 88.3L400.8 89.8L404.8 88.7L408.0 89.6L412.0 89.5L415.2 88.7L418.4 89.8L421.6 88.5L422.4 88.4L425.6 89.6L429.6 88.1L432.8 89.2L433.6 89.2L436.0 88.0L437.6 87.8L440.8 88.9L444.0 87.6L444.8 87.6L448.0 88.8L448.8 88.8L452.0 87.5L455.2 88.4L456.0 88.4L459.2 86.5L460.0 86.4L463.2 86.8L467.2 84.5L470.4 84.9L471.2 84.7L473.6 83.0L476.0 82.6L476.8 81.9L477.6 78.9L480.0 57.6L480.6 58.1L480.8 59.2L482.4 75.0L483.2 80.1L484.0 82.2L486.4 83.5L488.8 86.5L491.2 87.0L492.0 87.7L494.4 91.0L495.2 91.4L497.6 91.0L500.0 92.5L500.8 92.6L503.2 90.7L504.0 90.4L506.4 91.2L507.2 90.9L509.6 88.8L512.0 89.3L512.8 88.4L513.6 85.7L515.2 75.3L516.0 72.8"/><path d="M188.0 95.1L188.8 94.6L189.6 92.3L192.4 69.1L192.8 69.2L193.0 70.1L195.2 91.1L196.0 93.9L198.4 94.9L200.0 96.5L200.8 96.7L201.6 96.3L203.2 94.6L204.0 94.2L207.2 95.7L210.4 92.8L211.2 92.9L213.6 94.6L214.4 94.3L216.8 92.2L217.6 92.2L220.0 93.6L220.8 93.1L223.2 90.1L224.0 89.8L225.6 90.1L226.4 88.8L227.2 84.4L228.8 67.1L229.6 61.6L230.4 63.4L232.8 85.1L233.6 87.6L234.4 88.3L238.4 89.1L242.4 88.9L245.6 90.1L248.8 90.2L252.8 91.9L256.0 92.1L260.0 94.0L263.2 94.3L266.4 95.9L270.4 96.3L273.6 97.7L276.8 97.6L280.8 98.6L286.4 98.4L288.8 98.0L291.2 98.2L295.2 96.9L298.4 96.9L302.4 95.1L305.6 94.8L308.8 93.2L312.8 92.5L316.0 90.8L320.0 90.3L323.2 88.9L326.4 88.9L330.4 87.6L334.4 87.9L336.8 87.0L337.6 85.8L338.4 82.4L340.8 61.5L341.6 62.5L343.2 77.8L344.0 83.7L344.8 86.8L345.6 88.2L347.2 89.3L351.2 89.2L353.6 90.6L355.2 91.1L358.4 90.4L362.4 91.5L365.6 90.4L366.4 90.5L369.6 91.7L373.6 90.8L376.8 92.1L377.6 92.2L380.8 91.4L384.8 92.9L388.0 92.1L388.8 92.2L392.0 93.6L396.0 92.8L400.0 94.2L403.2 93.2L406.4 94.2L411.2 93.9L413.6 93.4L416.8 94.3L417.6 94.3L420.8 93.0L424.8 94.0L428.8 92.7L432.0 93.7L436.0 92.3L439.2 93.3L440.8 93.1L443.2 92.1L447.2 93.2L451.2 92.1L454.4 93.0L455.2 92.8L458.4 91.1L462.4 91.2L465.6 89.1L466.4 88.9L469.6 89.0L472.8 87.1L476.0 86.5L476.8 84.7L477.6 80.1L479.2 64.1L480.0 60.4L480.8 63.8L482.4 79.3L483.2 83.9L484.0 85.7L485.6 86.8L487.2 88.5L488.0 89.1L490.4 89.4L493.6 93.0L494.4 93.3L496.8 93.1L499.2 94.8L500.0 94.9L502.4 93.4L503.2 93.3L505.6 94.4L508.8 92.8L511.2 93.9L512.0 93.6L512.8 92.2L513.6 89.4L515.2 79.8L516.0 77.5"/><path d="M188.0 99.6L188.8 98.7L189.6 95.7L191.8 76.1L192.4 73.3L193.0 74.6L195.2 94.2L196.0 97.4L196.8 98.7L199.2 101.3L200.0 101.4L202.4 99.3L203.2 99.0L205.6 100.4L206.4 100.5L209.6 97.5L210.4 97.7L212.0 98.9L212.8 99.1L216.0 96.7L216.8 96.9L218.4 98.0L219.2 98.2L220.0 97.7L222.4 94.6L223.2 94.4L224.8 94.9L225.6 94.1L226.4 91.1L228.8 68.2L229.6 65.0L230.4 68.6L232.0 84.2L232.8 89.2L233.6 91.5L234.4 92.2L238.4 92.5L240.8 92.0L242.4 90.6L245.6 85.5L246.4 84.8L247.2 84.7L248.8 86.7L252.0 92.8L253.6 94.4L255.2 94.7L256.0 94.2L259.2 89.0L260.0 88.6L260.8 89.4L263.2 94.8L264.8 96.9L265.6 97.2L266.4 96.9L268.8 94.4L269.6 93.9L270.4 94.1L274.4 99.1L276.0 99.8L280.0 100.2L288.0 100.3L294.4 99.4L296.0 98.4L299.2 94.0L300.0 93.5L300.8 93.7L303.2 96.1L304.0 96.6L304.8 96.6L305.6 96.1L306.4 95.0L309.6 88.2L310.4 88.0L311.2 88.9L313.6 93.1L314.4 93.8L316.0 93.9L317.6 92.6L321.6 85.2L322.4 84.2L323.2 83.8L324.0 84.2L324.8 85.2L327.2 89.1L328.8 90.8L331.2 91.5L335.2 91.4L336.8 91.0L337.6 89.8L338.3 87.1L340.7 66.5L340.8 66.0L341.6 65.2L344.0 86.2L344.8 90.6L345.6 92.6L346.4 93.4L350.4 94.0L353.6 95.9L357.6 95.8L360.8 97.0L364.8 96.1L368.8 97.4L372.0 96.7L372.8 96.8L376.0 98.1L380.0 97.5L384.0 99.0L387.2 98.4L391.2 99.9L395.2 99.3L398.4 100.6L402.4 99.9L405.6 100.9L412.8 100.3L416.0 101.0L420.0 99.8L424.0 100.6L427.2 99.4L431.2 100.1L435.2 98.9L438.4 99.7L442.4 98.5L445.6 99.4L447.2 99.2L449.6 98.3L453.6 99.0L457.6 97.2L460.8 97.2L464.8 94.8L468.8 94.2L472.0 92.0L475.2 91.5L476.0 90.3L476.8 87.1L479.2 65.8L480.0 64.3L480.6 67.4L482.4 83.7L483.2 87.7L484.0 89.4L486.4 91.6L487.2 92.1L489.6 92.3L492.8 95.4L493.6 95.7L496.0 95.7L498.4 97.5L499.2 97.6L501.6 96.4L502.4 96.4L504.8 97.7L508.0 96.7L510.4 98.1L511.2 98.1L512.0 97.5L512.8 96.1L513.6 93.4L515.2 84.7L516.0 82.7"/><path d="M188.0 104.2L188.8 102.7L189.6 99.2L191.8 80.1L192.4 77.7L193.0 79.0L195.2 97.6L196.0 101.6L196.8 103.9L198.4 106.0L199.2 106.1L201.6 104.1L202.4 103.9L204.8 105.4L205.6 105.3L208.0 102.7L208.8 102.3L209.6 102.5L211.2 103.6L212.0 103.7L214.4 101.6L215.2 101.3L217.6 102.8L218.4 102.9L221.6 99.3L222.4 99.2L224.0 99.6L224.8 99.1L225.6 96.9L226.4 92.4L228.8 70.5L229.6 69.4L230.4 74.2L232.2 90.3L232.8 93.3L233.6 95.4L234.4 96.1L238.4 96.4L240.8 95.8L242.4 94.4L245.6 89.2L246.4 88.5L247.2 88.4L248.8 90.3L252.0 96.3L253.6 97.8L255.2 98.1L256.0 97.6L259.2 92.1L260.0 91.8L260.8 92.5L263.2 97.8L264.8 99.8L265.6 100.0L266.4 99.7L268.8 97.1L269.6 96.6L270.4 96.7L274.4 101.6L276.0 102.3L278.4 102.5L287.2 102.7L294.4 101.9L296.0 101.0L299.2 96.6L300.0 96.2L300.8 96.4L303.2 98.9L304.0 99.4L304.8 99.4L305.6 99.0L306.4 97.9L309.6 91.3L310.4 91.2L311.2 92.0L313.6 96.4L314.4 97.1L316.0 97.2L317.6 96.0L321.6 88.8L322.4 87.8L323.2 87.5L324.0 87.9L324.8 88.9L327.2 92.9L328.8 94.6L330.4 95.3L332.0 95.4L335.2 95.3L336.8 94.8L337.6 93.7L338.4 90.7L340.7 71.6L341.6 68.8L342.4 72.7L344.8 93.7L345.6 96.5L346.4 97.5L348.8 98.3L352.8 100.8L356.0 101.0L360.0 102.4L363.2 101.9L364.8 102.1L367.2 103.0L371.2 102.6L375.2 103.9L378.4 103.6L382.4 105.0L386.4 104.8L389.6 106.0L393.6 105.8L397.6 107.0L400.8 106.5L404.8 107.5L408.0 107.1L412.0 107.1L415.2 107.5L419.2 106.6L422.4 107.2L426.4 106.1L430.4 106.6L433.6 105.6L437.6 106.1L441.6 105.0L444.8 105.6L448.8 104.7L452.8 105.2L456.0 103.7L460.0 103.2L464.0 100.6L467.2 99.9L471.2 97.2L474.4 96.5L475.2 95.6L476.0 93.4L476.8 88.9L479.2 68.7L480.0 69.0L482.4 88.1L483.0 91.0L484.0 93.4L485.6 94.8L486.4 95.2L488.8 95.4L492.0 98.1L495.2 98.7L497.6 100.3L498.4 100.4L500.8 99.6L501.6 99.7L504.0 100.9L507.2 100.6L509.6 102.1L510.4 102.3L512.0 101.5L512.8 100.2L513.6 97.8L515.2 90.1L516.0 88.4"/><path d="M188.0 108.6L188.8 106.8L189.6 103.0L191.8 84.4L192.4 82.2L193.0 83.5L193.6 87.5L196.0 106.6L196.8 109.4L197.6 110.6L198.4 110.8L200.8 109.0L201.6 108.9L204.0 110.4L204.8 110.2L207.2 107.6L208.0 107.3L210.4 108.4L211.2 108.4L213.6 106.1L214.4 105.9L216.8 107.6L217.6 107.6L220.8 104.2L223.2 104.5L224.0 104.0L224.8 102.3L225.6 98.9L228.0 78.6L228.8 74.0L229.6 74.6L232.2 94.8L232.8 97.5L233.6 99.4L234.4 100.0L238.4 100.3L240.8 99.7L242.4 98.3L245.6 93.0L246.4 92.3L247.2 92.2L248.8 94.0L252.0 99.9L253.6 101.4L255.2 101.5L256.0 101.0L259.2 95.5L260.0 95.1L260.8 95.7L263.2 101.0L264.8 102.9L265.6 103.1L266.4 102.7L268.8 100.1L269.6 99.5L270.4 99.6L274.4 104.4L276.0 105.0L277.6 105.2L286.4 105.3L294.4 104.6L296.0 103.7L299.2 99.5L300.0 99.0L300.8 99.3L303.2 101.9L304.0 102.4L304.8 102.5L305.6 102.1L306.4 101.1L309.6 94.6L310.4 94.4L311.2 95.3L313.6 99.8L314.4 100.6L316.0 100.8L317.6 99.6L321.6 92.5L322.4 91.5L323.2 91.2L324.0 91.7L324.8 92.7L328.0 97.8L329.6 98.9L331.2 99.3L333.6 99.3L336.0 99.1L336.8 98.7L337.6 97.6L338.4 94.9L340.8 76.4L341.6 73.2L342.4 75.5L344.8 96.2L345.6 99.8L346.4 101.5L347.2 102.3L351.2 105.1L355.2 106.2L358.4 107.6L362.4 107.5L366.4 108.5L370.4 108.5L373.6 109.5L377.6 109.6L381.6 110.9L384.8 110.9L388.8 112.1L392.8 112.1L396.8 113.2L400.0 113.0L404.0 113.8L407.2 113.5L414.4 113.9L417.6 113.2L421.6 113.6L425.6 112.7L429.6 112.9L432.8 112.1L436.8 112.4L440.0 111.5L444.0 111.8L448.0 111.0L451.2 111.4L455.2 110.0L459.2 109.2L462.4 107.1L466.4 105.5L469.6 103.2L473.6 101.5L474.4 100.7L475.2 99.2L476.0 96.0L478.4 76.1L479.2 72.5L480.0 74.3L482.4 92.5L483.2 95.8L484.0 97.4L484.8 98.2L485.6 98.6L488.0 98.9L491.2 101.0L494.4 101.8L496.8 103.2L497.6 103.4L500.8 103.0L503.2 104.0L505.6 104.1L508.8 106.0L510.4 106.3L512.0 105.8L512.8 104.8L515.2 95.8L516.0 94.4"/><path d="M188.0 113.1L188.8 110.9L189.6 106.8L191.8 88.7L192.4 86.8L193.0 88.1L193.6 92.1L196.0 111.9L196.8 114.5L197.6 115.3L200.0 113.8L200.8 113.9L203.2 115.4L204.0 115.1L206.4 112.6L207.2 112.3L209.6 113.3L210.4 113.1L212.8 110.7L213.6 110.6L216.0 112.3L216.8 112.3L220.0 109.1L222.4 109.4L223.2 108.9L224.0 107.4L224.8 104.8L225.6 100.6L228.0 81.4L228.8 78.4L229.6 80.2L232.2 99.3L232.8 101.7L233.6 103.3L234.4 104.0L238.4 104.3L240.8 103.7L242.4 102.2L245.6 96.9L246.4 96.1L247.2 96.0L248.8 97.8L252.0 103.6L253.6 105.0L255.2 105.1L256.0 104.5L259.2 98.9L260.0 98.4L260.8 99.1L263.2 104.2L264.8 106.1L265.6 106.2L266.4 105.9L268.8 103.1L269.6 102.6L270.4 102.6L273.6 106.6L275.2 107.6L277.6 108.0L283.2 108.1L290.4 107.9L294.4 107.4L296.0 106.6L299.2 102.5L300.0 102.0L300.8 102.3L303.2 105.0L304.0 105.5L304.8 105.6L305.6 105.2L306.4 104.3L309.6 97.9L310.4 97.8L311.2 98.7L313.6 103.3L314.4 104.1L316.0 104.3L317.6 103.2L319.2 100.8L321.6 96.2L322.4 95.3L323.2 95.0L324.0 95.5L324.8 96.5L328.0 101.7L329.6 102.9L331.2 103.2L333.6 103.2L336.0 103.0L336.8 102.6L337.6 101.6L338.4 99.1L340.8 82.0L341.6 78.1L342.4 79.0L345.6 103.1L346.4 105.7L348.0 107.8L352.0 110.4L356.0 112.4L359.2 113.5L364.0 114.5L365.6 114.6L367.2 114.2L370.4 112.0L372.0 111.8L373.6 113.0L376.8 117.1L378.4 118.3L380.8 118.7L384.8 116.4L385.6 116.2L387.2 117.1L390.4 121.2L392.8 123.1L398.4 124.6L405.6 125.6L411.2 125.7L416.8 125.4L423.2 124.6L430.4 123.2L432.8 122.5L434.4 121.7L438.4 117.2L440.0 116.1L441.6 116.5L444.8 118.8L447.2 119.2L448.8 118.7L450.4 117.5L453.6 113.5L455.2 112.3L456.8 112.5L459.2 113.6L460.8 113.7L462.4 113.2L464.8 111.7L472.8 106.4L474.4 104.7L475.2 102.5L476.0 98.5L478.4 79.2L479.2 77.1L480.0 79.9L482.4 97.0L483.2 99.9L484.0 101.2L484.8 101.8L496.0 106.0L503.2 107.1L511.2 110.8L512.0 110.6L512.8 109.6L515.2 101.8L516.0 100.7"/><path d="M188.0 117.5L188.8 115.1L189.6 110.7L191.2 97.1L191.8 93.2L192.4 91.9L193.0 93.4L193.6 97.5L195.2 112.1L196.0 116.8L196.8 119.0L197.6 119.3L199.2 118.7L200.0 118.9L202.4 120.4L203.2 120.1L205.6 117.6L206.4 117.4L208.8 118.3L209.6 118.0L212.0 115.5L212.8 115.4L215.2 117.0L216.0 116.9L218.4 114.5L219.2 114.1L221.6 114.4L222.4 113.8L224.0 110.1L224.8 106.9L228.0 84.5L228.8 82.7L229.6 85.1L232.2 102.5L232.8 104.6L233.6 106.2L234.4 107.0L236.0 107.6L238.4 108.1L240.8 107.6L242.4 106.1L245.6 100.8L246.4 100.0L247.2 99.9L248.8 101.6L252.0 107.3L253.6 108.7L255.2 108.7L256.0 108.1L259.2 102.3L260.0 101.9L260.8 102.5L263.2 107.5L264.8 109.4L265.6 109.5L266.4 109.1L268.8 106.2L269.6 105.6L270.4 105.7L274.4 110.2L276.8 110.8L281.6 110.9L294.4 110.3L296.0 109.5L299.2 105.5L300.0 105.1L300.8 105.3L303.2 108.1L304.0 108.7L304.8 108.8L305.6 108.5L306.4 107.5L309.6 101.3L310.4 101.2L311.2 102.2L313.6 106.8L314.4 107.7L316.0 108.0L317.6 106.9L319.2 104.6L321.6 100.0L322.4 99.1L323.2 98.9L324.0 99.3L324.8 100.4L327.2 104.6L328.8 106.3L330.4 107.0L332.0 107.1L336.0 106.1L337.6 104.4L338.3 102.5L341.6 82.9L342.4 82.6L343.2 86.7L345.6 105.9L346.4 109.4L347.2 111.3L348.8 113.2L352.8 116.0L356.8 118.2L359.2 119.1L364.0 120.1L365.6 120.2L367.2 119.9L370.4 117.8L372.0 117.5L373.6 118.8L376.8 122.9L378.4 124.2L380.8 124.5L384.8 122.3L385.6 122.2L387.2 123.1L390.4 127.1L392.8 129.0L397.6 130.5L404.8 131.6L410.4 131.8L416.8 131.5L423.2 130.7L430.4 129.3L432.8 128.6L434.4 127.7L438.4 123.3L440.0 122.2L441.6 122.5L444.8 124.9L447.2 125.3L448.8 124.8L450.4 123.6L453.6 119.5L455.2 118.3L456.8 118.4L460.0 119.5L461.6 119.2L463.2 118.3L472.8 111.1L474.4 108.5L476.0 100.6L478.4 82.4L479.2 81.7L480.0 85.1L482.4 100.1L483.2 102.7L484.8 104.8L488.8 106.7L493.6 108.5L497.6 109.5L501.6 110.0L503.2 110.5L509.6 114.6L511.2 115.3L512.0 115.2L512.8 114.3L515.2 108.1L516.0 107.2"/><path d="M188.0 121.9L188.8 119.2L189.6 114.5L191.2 101.6L191.8 98.4L192.4 97.6L193.0 99.5L193.6 103.6L195.2 117.0L196.0 121.1L196.8 122.9L199.2 123.9L200.8 125.2L201.6 125.5L202.4 125.1L204.8 122.7L205.6 122.6L208.0 123.4L211.2 120.3L212.0 120.3L214.4 121.6L215.2 121.5L217.6 119.4L218.4 119.1L220.8 119.4L221.6 118.7L223.2 115.5L224.8 109.5L227.2 92.6L228.0 88.1L228.8 87.2L229.6 90.0L232.2 105.7L233.6 109.1L236.0 111.0L238.4 111.9L240.8 111.6L242.4 110.1L245.6 104.7L246.4 103.9L247.2 103.7L248.8 105.4L252.0 111.0L253.6 112.3L255.2 112.3L256.0 111.7L259.2 105.8L260.0 105.3L260.8 105.8L263.2 110.8L264.8 112.6L265.6 112.6L266.4 112.2L268.8 109.3L269.6 108.6L270.4 108.6L274.4 113.0L276.0 113.5L279.2 113.6L294.4 113.1L296.0 112.4L299.2 108.4L300.0 108.0L300.8 108.3L303.2 111.2L304.0 111.8L304.8 112.0L305.6 111.6L306.4 110.7L308.8 105.7L309.6 104.6L310.4 104.6L311.2 105.6L313.6 110.3L314.4 111.2L316.0 111.6L317.6 110.6L319.2 108.3L321.6 103.8L322.4 103.0L323.2 102.7L324.0 103.2L324.8 104.3L327.2 108.5L328.8 110.3L331.2 111.0L334.4 110.2L336.8 108.5L338.3 105.5L341.6 87.9L342.4 86.9L343.2 89.8L345.6 108.6L346.4 112.8L348.0 117.0L350.4 119.4L353.6 121.8L356.8 123.6L359.2 124.6L364.0 125.8L365.6 125.9L367.2 125.6L370.4 123.6L372.0 123.4L373.6 124.7L376.8 128.9L378.4 130.1L380.8 130.6L384.8 128.4L385.6 128.3L387.2 129.2L390.4 133.3L392.8 135.2L397.6 136.7L404.8 137.9L410.4 138.1L416.8 137.8L423.2 137.0L430.4 135.6L432.8 134.9L434.4 134.0L438.4 129.5L440.0 128.4L441.6 128.7L444.8 131.1L447.2 131.4L448.8 130.9L450.4 129.7L453.6 125.6L455.2 124.3L456.8 124.3L460.0 125.3L461.6 124.8L463.2 123.8L472.0 116.6L473.6 114.3L475.2 108.2L477.6 89.9L478.4 86.4L479.2 86.7L481.6 99.8L483.0 105.1L484.0 106.9L485.6 108.3L488.0 109.7L491.2 111.0L502.4 113.3L504.8 114.8L509.6 118.9L511.2 119.8L512.0 119.8L512.8 119.2L515.2 114.6L516.0 114.0"/><path d="M188.0 126.3L189.6 118.4L191.2 106.7L192.0 103.9L192.4 104.0L193.0 106.0L195.2 121.5L196.0 125.0L196.8 127.0L200.0 130.3L200.8 130.5L201.6 130.0L204.0 127.9L204.8 127.9L206.4 128.5L207.2 128.4L210.4 125.3L211.2 125.2L213.6 126.3L214.4 126.1L216.8 124.2L220.0 124.5L221.6 122.5L224.0 116.2L225.6 107.6L227.2 95.7L228.0 92.1L228.8 92.0L232.0 108.2L232.8 110.6L234.4 113.1L236.8 115.0L240.0 116.3L253.6 116.6L323.2 115.6L328.8 115.4L332.0 114.9L335.2 113.2L336.8 111.6L337.6 110.3L338.9 106.4L341.6 93.1L342.4 91.7L343.2 93.6L345.6 111.3L347.2 119.4L348.8 122.7L351.2 125.1L355.2 128.1L359.2 130.1L369.6 133.4L392.0 141.6L398.4 143.3L404.8 144.3L409.6 144.6L416.0 144.3L428.0 142.5L451.2 136.9L455.2 135.2L459.2 132.7L470.4 122.9L472.8 120.1L474.4 115.3L477.6 93.4L478.4 91.0L479.2 92.0L482.4 106.4L484.0 109.8L485.6 111.4L488.0 113.0L490.4 113.9L501.6 115.5L504.8 117.8L509.6 123.0L511.2 124.3L512.0 124.5L512.8 124.2L515.2 121.2L516.0 120.8"/><path d="M188.0 130.8L188.8 127.5L191.2 112.5L192.0 110.5L192.4 110.7L193.0 112.6L196.0 129.2L197.6 133.3L199.2 135.2L200.0 135.4L200.8 135.0L203.2 133.1L205.6 133.7L206.4 133.5L209.6 130.2L210.4 130.2L212.8 131.0L216.0 129.0L218.4 129.7L219.2 129.6L220.0 128.8L221.6 126.0L223.2 122.6L224.0 119.9L227.2 99.1L228.0 96.5L228.8 97.1L231.6 110.2L233.6 115.2L235.2 117.2L237.6 119.3L240.0 120.3L243.2 120.5L285.6 118.1L297.6 118.2L323.2 119.4L328.8 119.4L331.2 119.1L332.8 118.5L334.4 117.4L336.0 115.8L337.6 113.3L338.9 109.7L341.6 98.4L342.4 96.8L343.2 98.0L344.0 102.1L345.6 114.1L347.2 123.2L348.8 127.3L352.0 130.9L355.2 133.4L358.4 135.2L369.6 139.1L387.2 146.2L396.8 149.3L404.8 150.8L409.6 151.1L415.2 150.9L420.8 150.2L427.2 149.0L451.2 143.0L454.4 141.6L458.4 139.0L463.2 134.9L469.6 128.7L471.2 126.9L472.8 124.4L474.4 118.6L477.6 97.6L478.4 96.1L479.2 97.4L481.2 105.9L483.2 111.6L488.8 120.8L491.2 123.9L494.4 127.2L496.8 128.8L498.4 129.4L504.0 129.7L510.4 131.1L512.0 130.9L515.2 127.9L516.0 127.7"/><path d="M188.0 135.3L191.2 118.8L192.0 117.2L192.4 117.4L193.0 119.0L196.0 134.1L196.8 136.9L197.6 138.9L198.4 139.9L199.2 140.2L202.4 138.2L204.8 138.8L205.6 138.5L208.0 135.7L208.8 135.2L212.0 135.6L214.4 133.8L215.2 133.6L217.6 134.7L218.4 134.5L220.0 132.6L223.2 126.8L224.8 119.0L227.2 103.0L228.0 101.5L228.8 102.7L231.2 112.5L232.8 116.9L235.2 120.6L238.4 123.8L240.8 125.0L251.2 128.1L265.6 133.9L271.2 135.8L277.6 137.3L284.0 137.8L290.4 137.3L297.6 135.6L304.0 133.3L319.2 127.0L332.0 122.9L333.6 121.8L335.2 120.1L337.6 116.5L338.9 113.1L341.6 103.7L342.4 102.2L343.2 102.9L344.0 106.2L346.4 122.6L348.0 129.8L349.6 133.2L353.6 137.4L358.4 140.6L369.6 144.8L388.8 152.9L397.6 155.8L404.8 157.2L409.6 157.5L415.2 157.3L426.4 155.5L451.2 148.9L454.4 147.5L457.6 145.3L464.8 138.7L470.4 132.7L472.0 130.3L473.6 125.7L474.4 121.8L476.8 105.8L477.6 102.4L478.4 101.6L479.2 102.9L481.2 109.9L484.0 116.2L488.8 124.4L491.2 127.4L493.6 129.8L496.0 131.6L497.6 132.3L504.0 133.2L511.2 135.8L512.8 135.7L516.0 134.4"/><path d="M188.0 140.0L191.2 125.2L192.0 123.8L192.8 124.6L193.6 127.4L196.8 142.5L197.6 144.2L198.4 144.7L201.6 143.2L204.0 143.7L204.8 143.4L207.2 140.5L208.0 140.0L210.4 140.3L211.2 140.1L213.6 138.2L214.4 138.0L216.8 139.4L217.6 139.3L221.6 134.5L222.4 133.2L223.2 130.9L226.4 111.0L227.2 107.8L228.0 107.2L228.8 108.6L231.0 115.8L232.8 120.1L236.0 125.2L238.4 127.8L241.6 129.3L248.8 131.1L260.0 134.5L264.0 135.4L267.2 135.7L272.0 135.2L280.8 132.7L284.8 132.1L288.8 132.4L299.2 134.8L304.8 134.8L309.6 133.7L321.6 129.9L330.4 127.7L332.0 126.9L333.6 125.7L336.0 122.5L338.3 118.1L341.6 109.1L342.4 107.8L343.2 108.2L344.0 110.8L347.2 130.5L348.8 136.2L351.2 140.0L356.0 144.4L359.2 146.3L369.6 150.3L388.0 158.6L396.0 161.6L401.6 163.0L406.4 163.7L411.2 163.8L416.8 163.5L428.0 161.4L450.4 155.1L454.4 153.2L459.2 149.6L468.8 139.4L470.4 137.4L472.0 134.7L473.6 129.3L476.8 110.3L477.6 107.7L478.4 107.2L479.2 108.5L481.2 113.8L487.2 125.5L489.6 129.3L492.8 132.8L496.8 135.6L498.4 136.2L501.6 136.4L504.0 137.0L511.2 140.7L512.8 141.1L516.0 140.9"/><path d="M188.0 144.8L190.4 134.5L191.2 131.6L192.0 130.3L192.4 130.4L193.0 131.4L196.0 145.3L196.8 147.7L197.6 148.8L198.4 148.9L200.8 148.1L203.2 148.5L204.0 148.0L206.4 145.1L207.2 144.6L209.6 144.7L212.8 142.2L213.6 142.1L216.0 143.7L216.8 143.7L217.6 143.2L221.6 139.2L222.4 137.5L224.0 130.2L226.4 115.7L227.2 113.5L228.0 113.4L228.8 114.6L232.2 122.4L234.4 126.3L236.8 130.1L239.2 132.4L241.6 133.5L259.2 137.9L263.2 138.7L266.4 138.9L271.2 138.5L280.8 135.5L284.8 134.9L288.8 135.3L299.2 137.9L302.4 138.2L305.6 138.0L310.4 137.0L321.6 133.9L330.4 131.8L332.8 130.4L335.2 127.4L337.6 123.0L339.5 118.5L342.4 113.5L343.2 113.8L344.0 115.9L347.2 134.2L348.8 140.4L349.6 142.3L351.2 144.8L356.0 149.5L359.2 151.5L368.0 155.0L387.2 164.1L395.2 167.3L400.8 168.9L405.6 169.7L410.4 170.0L416.0 169.7L421.6 168.8L428.0 167.4L450.4 160.8L454.4 158.9L458.4 155.8L465.6 148.1L469.6 143.2L471.2 140.7L472.8 136.4L473.6 133.0L476.8 115.4L477.6 113.4L478.4 113.0L481.2 117.9L481.8 118.3L488.0 130.8L490.4 134.2L492.8 136.8L496.8 139.6L498.4 140.1L501.6 140.4L503.2 140.9L512.0 146.1L513.6 146.6L516.0 147.0"/><path d="M188.0 149.7L190.4 140.6L191.2 138.1L192.0 137.0L192.4 137.1L193.0 138.3L195.2 147.8L196.0 150.1L196.8 150.6L199.2 146.0L200.0 145.7L200.8 147.1L203.2 153.8L204.0 154.6L204.8 154.7L206.4 154.2L208.0 153.0L208.8 151.4L211.2 143.0L212.0 141.5L212.8 141.9L215.2 148.7L216.0 150.0L216.8 150.1L220.8 146.3L221.6 144.8L223.2 138.4L225.6 124.5L226.4 121.4L227.2 119.9L228.0 119.6L228.8 120.3L230.4 122.7L236.8 134.0L238.4 135.9L240.0 137.0L242.4 137.8L259.2 141.7L263.2 142.3L266.4 142.5L271.2 141.9L280.8 138.9L284.8 138.2L289.6 138.7L299.2 141.4L302.4 141.7L305.6 141.6L310.4 140.8L329.6 136.2L332.0 135.1L333.6 133.5L336.0 129.7L339.5 122.5L342.4 119.2L343.2 119.6L344.0 121.4L348.0 141.8L349.6 146.7L352.0 150.6L356.8 155.1L359.2 156.6L371.2 161.8L388.0 170.2L396.0 173.4L400.8 174.8L405.6 175.7L410.4 175.9L416.0 175.6L421.6 174.7L428.0 173.2L450.4 166.4L453.6 164.9L457.6 161.9L460.8 158.7L465.6 153.1L469.6 147.9L471.2 145.1L472.8 140.3L476.8 120.9L477.6 119.2L478.4 118.9L480.8 121.5L481.8 122.0L488.8 136.1L490.4 138.4L492.8 140.9L496.8 143.7L503.2 145.2L505.6 146.5L512.0 151.1L514.4 152.1L516.0 152.2"/><path d="M188.0 154.9L190.4 146.8L191.2 144.7L191.8 144.0L192.4 144.3L192.8 145.1L195.2 153.7L196.0 155.1L196.8 155.1L199.2 151.0L200.0 151.0L203.2 157.6L204.8 158.7L206.4 158.9L207.2 158.5L208.0 157.4L211.2 146.7L212.0 145.7L212.8 146.5L215.2 152.8L216.0 153.7L216.8 153.8L219.2 152.7L220.8 150.9L221.6 148.8L225.6 130.0L226.4 127.6L227.2 126.3L228.0 125.7L228.8 125.7L230.4 127.1L232.8 130.7L236.8 138.0L238.4 140.0L240.0 141.2L242.4 142.1L258.4 145.5L265.6 146.4L271.2 145.7L280.8 142.5L284.8 141.9L289.6 142.4L300.0 145.3L303.2 145.5L306.4 145.4L311.2 144.6L329.6 140.4L332.0 139.2L333.6 137.6L335.2 135.0L339.5 126.5L342.4 125.0L343.2 125.6L344.0 127.2L344.8 130.0L348.0 145.9L349.6 151.1L352.0 155.3L354.4 158.0L356.8 160.1L359.2 161.6L371.2 166.9L388.0 175.6L395.2 178.7L400.8 180.5L405.6 181.3L409.6 181.6L415.2 181.4L420.8 180.6L427.2 179.1L450.4 171.8L453.6 170.3L456.8 167.8L463.2 161.0L468.0 154.8L470.4 151.1L472.8 144.2L476.0 129.3L476.8 126.7L477.6 125.3L478.4 124.8L481.2 126.0L481.8 125.8L484.0 129.7L488.8 140.2L491.2 143.5L493.6 145.9L496.0 147.6L497.6 148.4L501.6 149.0L503.2 149.6L505.6 151.1L512.0 156.1L514.4 157.2L516.0 157.4"/><path d="M188.0 160.2L190.4 153.2L191.2 151.7L191.8 151.4L192.8 152.8L195.2 159.2L196.0 160.1L196.8 159.9L199.2 156.5L200.0 156.5L200.8 157.4L203.2 161.9L204.0 162.9L205.6 164.1L206.4 164.0L207.2 163.3L208.0 161.7L210.4 153.3L211.2 151.3L212.0 150.7L212.8 151.5L215.2 156.8L216.0 157.7L217.6 158.2L219.2 157.7L220.0 156.8L220.8 155.1L221.6 152.6L225.6 136.2L227.2 132.4L228.0 131.4L228.8 131.0L230.4 131.6L232.0 133.3L237.6 143.2L239.2 144.9L240.8 145.8L269.6 152.4L276.8 153.4L283.2 153.8L290.4 153.4L297.6 152.3L319.2 146.8L330.4 144.3L332.0 143.4L333.6 141.6L339.5 130.6L340.0 130.8L341.6 130.6L342.4 130.8L343.2 131.6L344.0 133.2L345.6 139.0L348.0 150.1L350.4 157.2L352.8 160.9L356.8 164.9L359.2 166.4L371.2 171.8L388.0 180.8L396.0 184.4L400.8 185.9L405.6 186.8L409.6 187.1L415.2 186.8L423.2 185.5L432.8 182.7L451.2 176.7L453.6 175.5L456.0 173.7L459.2 170.6L462.4 166.8L469.6 156.9L472.0 151.2L475.2 137.9L476.8 132.7L477.6 131.3L478.4 130.7L481.2 130.2L481.8 129.8L483.2 131.9L486.4 139.2L488.0 142.2L488.8 142.7L489.6 142.4L492.0 138.0L492.8 137.6L493.6 138.8L496.8 150.1L497.6 151.7L498.4 152.6L499.2 152.8L500.0 152.5L500.8 151.7L504.0 143.9L504.8 143.3L505.6 144.3L508.0 153.5L509.6 158.2L510.4 159.6L512.0 161.2L513.6 162.1L516.0 162.6"/><path d="M188.0 165.7L190.4 160.0L191.2 159.1L191.8 159.1L192.8 160.3L195.2 164.7L196.0 165.3L196.8 165.2L199.2 162.1L200.0 161.6L200.8 162.1L204.0 168.2L204.8 169.1L205.6 169.4L206.4 169.0L207.2 167.9L210.4 158.3L211.2 156.5L212.0 155.8L212.8 156.4L216.0 162.3L217.6 163.4L218.4 163.3L219.2 162.6L220.8 159.1L226.4 140.2L228.0 137.0L228.8 136.4L230.4 136.4L232.0 137.4L233.6 139.8L237.6 147.4L239.2 149.2L240.8 150.1L269.6 156.6L276.8 157.6L284.0 157.9L291.2 157.4L298.4 156.2L330.4 148.6L332.0 147.6L333.6 145.8L337.6 138.0L339.5 134.9L342.4 136.6L344.0 139.3L349.6 159.6L352.0 164.4L355.2 167.9L356.8 168.9L358.4 168.9L360.0 167.8L363.2 164.0L364.0 163.5L364.8 163.5L366.4 164.9L370.4 173.1L372.0 175.6L374.4 178.0L379.2 181.0L383.2 183.1L385.6 183.9L388.0 183.6L391.2 182.1L392.8 182.1L394.4 183.3L399.2 189.3L400.8 190.5L403.2 191.5L408.8 192.2L415.2 192.0L420.0 191.2L422.4 190.2L424.8 188.2L428.8 183.4L430.4 182.6L432.0 183.0L436.0 185.3L438.4 185.6L447.2 182.9L450.4 181.1L452.8 177.6L456.8 168.5L458.4 166.4L460.0 166.0L463.2 167.2L464.8 166.9L466.4 165.6L468.8 162.6L470.4 159.6L472.0 155.4L475.2 143.4L476.8 138.8L478.4 136.5L481.8 133.9L483.0 135.4L484.0 137.4L487.2 145.1L488.0 146.4L488.8 147.0L489.6 146.7L492.0 142.4L492.8 142.1L493.6 143.3L496.8 154.7L497.6 156.3L498.4 157.1L499.2 157.4L500.0 157.1L500.8 156.3L504.0 148.6L504.8 148.0L505.6 149.1L508.0 158.4L509.6 163.2L510.4 164.6L512.0 166.3L513.6 167.2L516.0 167.8"/><path d="M188.0 171.4L189.6 168.3L190.4 167.1L191.2 166.6L192.4 167.1L196.0 171.1L196.8 171.0L197.6 170.2L199.2 167.3L200.0 166.5L200.8 166.8L201.6 168.2L204.0 173.7L204.8 174.5L205.6 174.5L207.2 172.3L210.4 163.6L211.2 161.7L212.0 160.8L212.8 160.9L213.6 162.1L216.0 167.3L216.8 168.3L217.6 168.6L218.4 168.2L219.2 167.1L220.8 163.3L227.2 144.2L228.8 142.1L230.4 141.3L231.6 141.5L232.8 142.7L237.6 151.7L239.2 153.5L240.8 154.4L269.6 160.8L276.8 161.8L284.0 162.1L291.2 161.6L298.4 160.5L330.4 152.9L332.0 151.9L333.6 150.0L337.6 142.1L339.5 139.4L342.4 142.3L344.0 145.4L348.8 161.7L350.4 165.9L352.8 169.9L355.2 172.5L356.8 173.4L358.4 173.5L360.0 172.3L363.2 168.5L364.0 168.0L364.8 168.0L366.4 169.5L370.4 177.6L372.8 181.1L375.2 183.2L380.0 186.1L384.0 188.1L386.4 188.6L388.0 188.3L391.2 186.9L392.8 186.9L394.4 188.1L399.2 194.1L400.8 195.4L403.2 196.4L408.8 197.2L415.2 196.9L420.0 196.1L422.4 195.1L424.8 193.1L428.8 188.3L430.4 187.5L432.0 187.8L436.0 190.2L438.4 190.4L447.2 187.8L450.4 185.9L452.8 182.4L456.8 173.3L458.4 171.2L460.0 170.7L462.4 171.6L464.0 171.7L465.6 170.9L468.0 168.1L469.6 165.5L471.2 162.0L475.2 149.0L476.8 144.9L478.4 142.2L481.8 138.2L483.0 139.6L484.0 141.5L487.2 149.3L488.0 150.7L488.8 151.3L489.6 151.1L492.0 146.9L492.8 146.6L493.6 147.8L496.8 159.3L497.6 160.9L498.4 161.8L499.2 162.1L500.0 161.8L500.8 160.9L504.0 153.3L504.8 152.8L505.6 153.9L508.0 163.4L509.6 168.2L510.4 169.7L512.0 171.4L513.6 172.4L516.0 173.0"/><path d="M188.0 177.2L189.6 175.0L191.2 173.9L193.0 174.5L196.0 177.2L196.8 177.0L199.2 172.2L200.0 171.3L200.8 171.8L204.0 179.2L204.8 179.6L205.6 179.3L208.0 175.6L211.2 166.7L212.0 165.4L212.8 165.4L213.6 166.7L216.0 172.7L216.8 173.6L217.6 173.5L219.2 171.5L221.6 166.2L227.2 150.3L228.8 147.9L231.0 145.9L232.0 146.1L232.8 147.0L236.0 152.4L237.6 153.9L238.4 153.9L239.2 153.4L242.4 149.3L243.2 148.7L244.0 148.6L244.8 149.0L246.4 151.3L250.4 158.7L252.0 160.3L253.6 161.2L255.2 161.3L256.8 160.5L260.8 154.2L261.6 153.6L262.4 153.8L263.2 154.7L266.4 161.6L267.2 162.9L268.8 164.5L270.4 165.2L274.4 165.9L284.0 166.5L293.6 165.7L298.4 164.8L300.8 163.9L302.4 162.6L303.2 161.4L306.4 154.4L307.2 153.2L308.0 152.6L308.8 152.7L309.6 153.6L312.0 157.8L313.6 159.6L315.2 160.2L316.8 159.8L318.4 158.8L320.0 156.9L324.0 149.2L325.6 147.4L326.4 147.2L327.2 147.6L331.2 153.0L332.0 153.5L332.8 153.6L334.4 152.3L337.6 146.4L339.5 144.0L341.6 146.6L344.0 151.5L348.8 166.2L350.4 170.2L352.8 174.2L355.2 176.9L356.8 177.9L358.4 177.9L360.0 176.8L363.2 172.9L364.0 172.4L364.8 172.4L366.4 173.9L370.4 182.0L372.8 185.5L375.2 187.5L380.8 190.9L384.0 192.6L386.4 193.1L388.0 192.8L391.2 191.4L392.8 191.5L394.4 192.7L399.2 198.8L400.8 200.0L403.2 201.0L408.8 201.8L416.0 201.5L420.0 200.7L422.4 199.7L424.8 197.7L428.8 192.9L430.4 192.1L432.0 192.4L436.0 194.8L438.4 195.0L447.2 192.4L450.4 190.6L452.8 187.1L456.8 177.9L458.4 175.7L460.0 175.3L462.4 176.1L464.0 176.2L465.6 175.3L468.0 172.4L471.2 166.3L476.8 151.0L479.2 146.4L481.8 142.7L483.2 144.2L487.2 153.6L488.0 155.0L488.8 155.7L489.6 155.5L492.0 151.4L492.8 151.1L493.6 152.4L496.8 164.0L497.6 165.6L498.4 166.5L499.2 166.8L500.0 166.5L500.8 165.6L504.0 158.1L504.8 157.6L505.6 158.7L508.0 168.3L509.6 173.3L510.4 174.8L512.0 176.6L514.4 178.0L516.0 178.3"/><path d="M188.0 183.2L190.4 181.3L192.0 180.9L193.0 181.2L195.2 183.2L196.0 183.4L196.8 182.8L199.2 177.2L200.0 176.5L200.8 177.2L203.2 183.3L204.0 184.4L204.8 184.5L206.4 183.3L208.0 181.0L211.2 171.4L212.0 170.0L212.8 170.2L213.6 171.7L216.0 177.9L216.8 178.5L217.6 178.2L219.2 176.1L221.6 171.8L227.2 156.6L229.6 152.2L231.2 150.6L232.0 150.8L232.8 151.5L236.0 156.8L237.6 158.3L238.4 158.3L239.2 157.8L242.4 153.7L243.2 153.1L244.0 153.0L244.8 153.4L246.4 155.7L250.4 163.1L252.0 164.7L253.6 165.6L255.2 165.7L256.8 164.9L260.8 158.6L261.6 158.0L262.4 158.2L263.2 159.2L266.4 166.1L267.2 167.4L268.8 169.0L270.4 169.7L274.4 170.4L284.0 171.0L293.6 170.1L298.4 169.2L300.8 168.4L302.4 167.0L303.2 165.8L306.4 158.9L307.2 157.6L308.0 157.0L308.8 157.1L309.6 158.0L312.0 162.2L313.6 164.0L315.2 164.5L316.8 164.2L318.4 163.1L320.0 161.2L324.0 153.6L325.6 151.7L326.4 151.6L327.2 152.0L331.2 157.3L332.0 157.9L332.8 158.0L334.4 156.7L337.6 150.9L339.5 148.7L341.6 152.0L343.2 155.5L348.8 170.9L350.4 174.5L352.8 178.5L355.2 181.2L356.8 182.2L358.4 182.2L360.0 181.0L363.2 177.1L364.0 176.6L364.8 176.6L366.4 178.1L370.4 186.1L372.8 189.7L375.2 191.7L380.8 195.1L384.0 196.8L386.4 197.4L388.0 197.1L391.2 195.7L392.8 195.8L394.4 197.0L399.2 203.1L400.8 204.4L403.2 205.4L408.8 206.2L416.0 205.9L420.0 205.1L422.4 204.1L424.8 202.1L428.8 197.3L430.4 196.4L432.0 196.8L436.0 199.1L438.4 199.4L447.2 196.8L450.4 195.0L452.8 191.6L456.8 182.4L458.4 180.2L460.0 179.7L462.4 180.5L464.0 180.5L465.6 179.5L468.0 176.6L471.2 170.7L478.4 153.3L481.8 147.3L483.2 148.7L487.2 158.1L488.0 159.5L488.8 160.2L489.6 160.0L492.0 156.0L492.8 155.7L493.6 157.0L496.8 168.7L497.6 170.3L498.4 171.2L499.2 171.5L500.0 171.2L500.8 170.4L504.0 163.0L504.8 162.4L505.6 163.6L506.4 166.3L508.8 176.3L510.4 179.9L512.8 182.4L514.4 183.2L516.0 183.5"/><path d="M188.0 189.2L190.4 188.1L191.8 187.8L193.0 188.1L195.2 189.6L196.0 189.4L196.8 188.3L199.2 182.5L200.0 182.0L200.8 182.8L203.2 188.5L204.0 189.3L204.8 189.5L205.6 189.2L207.2 187.8L208.0 186.4L211.2 176.2L212.0 174.9L212.8 175.3L215.2 181.5L216.0 182.9L216.8 183.2L217.6 182.9L220.0 180.1L221.6 177.3L228.8 159.2L230.4 156.1L231.2 155.5L232.0 155.6L232.8 156.2L236.0 161.3L237.6 162.7L238.4 162.7L239.2 162.2L242.4 158.1L243.2 157.5L244.0 157.4L244.8 157.8L246.4 160.1L250.4 167.5L252.0 169.2L253.6 170.0L255.2 170.2L256.8 169.4L260.8 163.1L261.6 162.5L262.4 162.7L263.2 163.7L266.4 170.6L267.2 171.9L268.8 173.5L270.4 174.2L274.4 174.9L284.0 175.5L293.6 174.7L298.4 173.7L300.8 172.9L302.4 171.5L303.2 170.3L306.4 163.3L307.2 162.0L308.0 161.4L308.8 161.6L309.6 162.5L312.0 166.6L313.6 168.5L315.2 169.0L316.8 168.6L318.4 167.5L320.0 165.6L324.0 158.0L325.6 156.1L326.4 155.9L327.2 156.3L331.2 161.7L332.0 162.3L332.8 162.4L334.4 161.1L337.6 155.5L338.4 154.4L339.5 153.7L341.6 157.3L348.0 173.7L350.4 178.9L353.6 183.7L356.0 186.0L357.6 186.5L359.2 185.9L363.2 181.2L364.0 180.7L364.8 180.7L366.4 182.1L370.4 190.1L372.8 193.6L375.2 195.7L381.6 199.6L384.0 200.8L386.4 201.4L388.0 201.1L391.2 199.8L392.8 199.8L394.4 201.0L399.2 207.2L400.8 208.5L403.2 209.5L408.8 210.3L416.0 210.0L420.0 209.2L422.4 208.2L424.8 206.2L428.8 201.4L430.4 200.6L432.0 200.9L436.0 203.2L438.4 203.5L447.2 201.1L450.4 199.3L452.8 195.9L456.8 186.7L458.4 184.5L460.0 184.0L462.4 184.7L464.0 184.7L465.6 183.7L468.0 180.8L471.2 175.1L479.2 156.8L481.8 152.1L483.2 153.3L487.2 162.6L488.0 164.0L488.8 164.7L489.6 164.5L492.0 160.6L492.8 160.4L493.6 161.6L496.8 173.4L498.4 176.0L499.2 176.3L500.0 176.0L500.8 175.2L504.0 167.8L504.8 167.3L505.6 168.6L506.4 171.3L508.8 181.4L510.4 185.1L512.8 187.7L514.4 188.5L516.0 188.8"/><path d="M188.0 195.2L191.2 194.6L194.4 195.6L195.2 195.6L196.0 195.0L196.8 193.8L199.2 188.1L200.0 187.6L200.8 188.4L203.2 193.6L204.0 194.5L204.8 194.8L205.6 194.6L207.2 193.1L208.0 191.6L211.2 181.3L212.0 180.2L212.8 180.6L215.2 186.4L216.0 187.7L216.8 188.1L218.4 187.3L220.0 185.5L221.6 182.6L229.6 162.7L231.2 160.6L232.0 160.6L232.8 161.2L236.0 165.9L237.6 167.2L238.4 167.2L239.2 166.7L242.4 162.5L243.2 161.9L244.0 161.8L244.8 162.2L246.4 164.5L250.4 172.0L252.0 173.6L253.6 174.5L255.2 174.7L256.8 173.9L260.8 167.6L261.6 167.1L262.4 167.3L263.2 168.2L266.4 175.1L267.2 176.4L268.8 178.0L271.2 179.0L274.4 179.5L284.0 180.1L293.6 179.2L298.4 178.3L300.8 177.4L302.4 176.0L303.2 174.8L306.4 167.8L307.2 166.5L308.0 165.9L308.8 166.1L309.6 167.0L312.0 171.1L313.6 172.9L315.2 173.4L316.8 173.0L318.4 172.0L320.0 170.0L324.0 162.4L325.6 160.5L326.4 160.3L327.2 160.7L331.2 166.1L332.0 166.7L332.8 166.8L334.4 165.7L337.6 160.4L338.4 159.4L339.5 158.8L341.6 162.6L346.4 175.1L349.6 181.8L352.8 186.8L356.0 190.0L357.6 190.6L359.2 190.0L363.2 185.1L364.0 184.6L364.8 184.5L366.4 186.0L370.4 193.9L372.8 197.4L375.2 199.5L381.6 203.3L384.0 204.6L386.4 205.2L388.0 204.9L391.2 203.6L392.8 203.7L394.4 204.9L399.2 211.1L400.8 212.3L403.2 213.4L408.8 214.2L416.0 213.9L420.0 213.1L422.4 212.1L424.8 210.1L428.8 205.3L430.4 204.5L432.0 204.8L436.0 207.2L438.4 207.4L447.2 205.1L450.4 203.4L452.8 200.0L456.8 190.8L458.4 188.6L460.0 188.1L462.4 188.8L464.0 188.8L465.6 187.8L468.0 184.8L473.6 175.1L480.0 160.2L481.8 157.1L483.2 158.2L487.2 167.1L488.0 168.5L488.8 169.2L489.6 169.1L492.0 165.2L492.8 165.0L493.6 166.3L496.8 178.2L498.4 180.8L499.2 181.1L500.0 180.8L500.8 180.0L504.0 172.7L504.8 172.3L505.6 173.5L506.4 176.3L508.8 186.5L510.4 190.3L512.8 192.9L514.4 193.8L516.0 194.2"/><path d="M188.0 201.2L190.4 201.1L194.2 201.6L195.2 201.4L196.8 199.4L199.2 193.7L200.0 193.0L200.8 193.7L203.2 198.9L204.0 200.0L204.8 200.3L205.6 200.0L207.2 198.3L208.0 196.7L211.2 186.6L212.0 185.4L212.8 185.7L216.0 192.7L216.8 193.3L217.6 193.2L218.4 192.6L220.0 190.7L222.4 186.4L224.8 181.0L229.6 168.0L230.4 166.6L231.6 165.7L232.8 166.3L236.0 170.6L237.6 171.8L238.4 171.7L239.2 171.2L242.4 167.0L243.2 166.4L244.0 166.2L244.8 166.7L246.4 169.0L250.4 176.5L252.0 178.1L253.6 179.0L255.2 179.2L256.8 178.4L260.8 172.2L261.6 171.6L262.4 171.8L263.2 172.8L266.4 179.7L267.2 181.0L268.8 182.7L271.2 183.6L274.4 184.2L284.0 184.7L293.6 183.9L298.4 182.9L300.8 182.0L302.4 180.6L303.2 179.4L306.4 172.4L307.2 171.1L308.0 170.5L308.8 170.6L309.6 171.5L312.8 176.7L314.4 177.8L316.0 177.8L317.6 177.0L319.2 175.6L320.8 173.2L324.0 166.8L325.6 164.9L326.4 164.7L327.2 165.1L331.2 170.5L332.8 171.3L334.4 170.3L337.6 165.4L338.4 164.5L339.5 164.0L341.6 167.8L345.6 178.4L348.0 183.5L352.0 189.8L354.4 192.7L356.0 194.0L357.6 194.5L359.2 193.9L363.2 188.9L364.0 188.4L364.8 188.3L366.4 189.7L370.4 197.6L372.8 201.1L375.2 203.1L381.6 206.9L384.0 208.1L386.4 208.7L388.0 208.5L391.2 207.2L392.8 207.3L394.4 208.5L399.2 214.7L400.8 216.0L403.2 217.0L408.8 217.9L416.0 217.5L420.0 216.8L422.4 215.8L424.8 213.7L428.8 208.9L430.4 208.1L432.0 208.5L436.0 210.9L438.4 211.2L447.2 209.0L450.4 207.4L452.8 204.0L456.8 194.9L458.4 192.7L460.0 192.1L462.4 192.8L464.0 192.8L465.6 191.7L468.0 188.9L474.4 178.5L480.0 165.2L481.8 162.2L483.0 162.9L484.0 164.5L487.2 171.8L488.0 173.1L488.8 173.8L489.6 173.7L492.0 169.9L492.8 169.7L493.6 171.0L496.8 183.0L498.4 185.7L499.2 186.0L500.0 185.7L500.8 184.9L504.0 177.7L504.8 177.2L505.6 178.5L506.4 181.3L508.8 191.6L510.4 195.5L512.8 198.2L514.4 199.2L516.0 199.5"/><path d="M188.0 206.9L193.6 207.5L195.2 207.1L196.8 205.0L199.2 199.1L200.0 198.5L200.8 199.1L203.2 204.3L204.0 205.3L204.8 205.6L205.6 205.4L207.2 203.6L208.0 201.9L211.2 191.7L212.0 190.5L212.8 190.9L216.0 197.8L216.8 198.4L217.6 198.3L218.4 197.8L220.0 195.8L222.4 191.7L224.8 186.4L229.6 173.4L230.4 172.0L231.6 171.1L232.8 171.5L236.0 175.5L237.6 176.4L239.2 175.7L242.4 171.4L243.2 170.8L244.0 170.7L244.8 171.1L246.4 173.5L250.4 181.0L252.0 182.7L254.4 183.7L256.0 183.5L256.8 182.9L260.8 176.8L261.6 176.2L262.4 176.4L264.0 178.9L266.4 184.3L267.2 185.7L268.8 187.3L271.2 188.3L274.4 188.8L284.0 189.4L293.6 188.5L298.4 187.5L300.8 186.6L302.4 185.2L303.2 184.0L306.4 177.0L307.2 175.6L308.0 175.0L308.8 175.2L309.6 176.0L312.8 181.2L314.4 182.3L316.0 182.3L317.6 181.5L319.2 180.0L320.8 177.6L324.0 171.2L325.6 169.3L326.4 169.2L327.2 169.5L331.2 175.0L332.8 175.8L334.4 175.0L337.6 170.6L338.4 169.7L339.5 169.3L341.6 172.9L345.6 183.1L348.0 187.9L352.8 194.9L356.0 197.9L357.6 198.4L359.2 197.7L363.2 192.6L364.0 192.0L364.8 191.9L366.4 193.3L370.4 201.1L372.8 204.5L375.2 206.5L381.6 210.3L384.0 211.5L386.4 212.1L388.0 211.9L391.2 210.6L392.8 210.7L394.4 211.9L399.2 218.1L400.8 219.4L403.2 220.5L408.8 221.3L416.0 221.0L420.0 220.2L422.4 219.2L424.8 217.2L428.8 212.4L430.4 211.6L432.0 212.0L436.0 214.4L438.4 214.7L447.2 212.7L450.4 211.2L452.8 207.9L456.8 198.8L458.4 196.6L460.0 196.0L462.4 196.7L464.0 196.6L465.6 195.6L468.0 192.8L474.4 183.0L480.0 170.3L481.8 167.5L483.0 168.1L484.0 169.6L487.2 176.5L488.8 178.5L489.6 178.3L492.0 174.5L492.8 174.4L493.6 175.8L496.8 187.8L498.4 190.5L499.2 190.8L500.0 190.6L500.8 189.7L504.0 182.6L504.8 182.2L505.6 183.5L506.4 186.4L508.8 196.8L510.4 200.7L512.8 203.6L514.4 204.5L516.0 204.9"/><path d="M188.0 212.3L193.6 212.9L195.2 212.6L196.8 210.4L199.2 204.6L200.0 203.9L200.8 204.5L203.2 209.7L204.0 210.7L204.8 211.0L205.6 210.7L207.2 208.9L208.0 207.2L211.2 196.9L212.0 195.7L212.8 196.0L216.0 203.0L216.8 203.5L217.6 203.4L218.4 202.8L220.0 200.8L222.4 196.6L224.8 191.2L229.6 178.7L230.4 177.4L231.6 176.5L232.8 176.9L236.0 180.4L237.6 181.1L239.2 180.2L242.4 175.9L243.2 175.3L244.0 175.2L245.6 176.6L250.4 185.5L252.0 187.2L254.4 188.3L256.0 188.1L256.8 187.5L260.8 181.4L261.6 180.8L262.4 181.0L264.0 183.6L266.4 189.0L267.2 190.3L268.8 192.0L271.2 193.0L275.2 193.6L284.8 194.1L294.4 193.1L298.4 192.2L300.8 191.3L302.4 189.8L303.2 188.6L306.4 181.6L307.2 180.2L308.0 179.6L308.8 179.8L309.6 180.6L312.0 184.7L313.6 186.5L315.2 186.9L316.8 186.5L319.2 184.5L320.8 182.1L324.0 175.7L325.6 173.8L326.4 173.6L328.0 174.8L331.2 179.5L332.8 180.4L334.4 179.8L337.6 175.9L338.4 175.1L339.5 174.8L341.6 177.9L345.6 187.3L348.8 193.2L353.6 199.7L357.6 203.3L359.2 204.0L365.6 205.7L370.4 207.6L376.0 210.4L393.6 220.3L399.2 222.7L404.0 224.0L407.2 224.5L411.2 224.6L420.0 223.6L426.4 222.1L441.6 217.6L451.2 215.6L453.6 214.5L456.0 212.7L458.4 210.3L464.0 202.8L474.4 187.0L480.0 175.3L481.8 172.9L483.0 173.5L484.0 174.8L487.2 181.3L488.8 183.2L489.6 183.0L492.0 179.2L492.8 179.1L493.6 180.5L496.8 192.7L498.4 195.4L499.2 195.7L500.0 195.5L500.8 194.6L504.0 187.6L504.8 187.2L505.6 188.5L506.4 191.4L508.8 201.9L510.4 206.0L512.8 208.9L514.4 209.9L516.0 210.3"/><path d="M188.0 217.7L193.6 218.3L195.2 218.0L196.8 215.9L199.2 210.0L200.0 209.4L200.8 210.0L203.2 215.2L204.0 216.1L204.8 216.4L205.6 216.1L207.2 214.2L208.0 212.5L211.2 202.1L212.0 200.9L212.8 201.2L216.0 208.1L216.8 208.6L217.6 208.5L218.4 207.9L220.8 204.6L223.2 199.9L229.6 184.2L230.4 183.0L231.6 182.2L232.8 182.5L236.0 185.4L237.6 185.9L239.2 184.8L242.4 180.4L243.2 179.8L244.0 179.7L245.6 181.1L250.4 190.1L252.0 191.8L253.6 192.7L255.2 192.9L256.8 192.1L260.8 186.0L261.6 185.5L262.4 185.7L263.2 186.7L267.2 195.0L268.0 196.0L269.6 197.1L272.0 197.9L276.8 198.6L285.6 198.9L294.4 197.8L298.4 196.9L300.8 195.9L302.4 194.5L303.2 193.3L306.4 186.2L307.2 184.9L308.0 184.2L308.8 184.4L309.6 185.2L312.0 189.3L313.6 191.0L315.2 191.5L316.8 191.0L318.4 189.9L320.0 188.0L324.8 179.0L325.6 178.2L326.4 178.1L328.0 179.3L331.2 184.0L332.8 185.1L334.4 184.6L337.6 181.3L338.4 180.7L339.5 180.4L341.6 183.1L345.6 191.6L348.8 197.1L352.8 202.6L356.8 206.5L359.2 207.7L365.6 209.1L371.2 211.2L376.8 214.0L393.6 223.4L399.2 225.8L404.0 227.1L410.4 227.8L419.2 226.9L425.6 225.5L441.6 221.0L451.2 219.2L453.6 218.2L457.6 214.9L462.4 208.9L473.6 192.3L480.0 180.5L481.8 178.5L483.0 179.0L484.0 180.2L489.6 191.0L494.4 197.8L497.6 200.5L501.6 201.5L503.2 202.5L505.6 205.1L512.0 213.5L514.4 215.3L516.0 215.7"/><path d="M188.0 223.1L193.6 223.8L195.2 223.5L196.8 221.4L199.2 215.5L200.0 214.9L200.8 215.5L203.2 220.6L204.0 221.6L204.8 221.8L205.6 221.5L207.2 219.5L208.0 217.8L211.2 207.3L212.0 206.1L212.8 206.3L216.0 213.3L216.8 213.8L217.6 213.6L218.4 213.0L220.0 210.9L222.4 206.5L228.8 191.4L230.4 188.7L231.6 188.0L233.6 188.8L238.4 193.4L240.8 194.4L249.6 196.5L270.4 202.3L277.6 203.4L284.0 203.7L290.4 203.2L297.6 201.8L320.0 195.1L330.4 192.5L332.8 191.4L337.6 186.9L339.5 186.1L341.6 188.3L346.4 197.2L350.4 203.3L354.4 208.1L357.6 210.6L359.2 211.2L366.4 212.7L372.0 214.8L377.6 217.5L392.0 225.6L400.0 229.1L404.0 230.2L408.0 230.7L412.0 230.7L416.8 230.3L424.0 228.9L440.8 224.4L451.2 222.8L454.4 221.3L457.6 218.5L461.6 213.6L474.4 195.0L479.2 187.0L480.6 185.1L481.8 184.2L483.0 184.6L484.0 185.7L490.4 197.0L495.2 203.5L497.6 205.4L501.6 206.5L503.2 207.5L505.6 210.2L512.0 218.9L514.4 220.7L516.0 221.1"/><path d="M188.0 228.5L191.2 228.8L198.4 230.3L201.6 230.1L204.8 228.0L209.6 223.2L212.0 221.3L213.6 220.5L216.0 220.1L216.8 219.7L218.4 218.2L220.8 214.6L228.8 196.9L230.4 194.6L231.6 193.9L233.6 194.5L237.6 197.6L240.8 199.0L249.6 201.1L270.4 207.1L277.6 208.2L284.0 208.5L290.4 208.0L297.6 206.6L320.0 199.6L330.4 197.1L333.6 195.7L337.6 192.6L339.5 192.0L341.6 193.7L347.2 202.6L352.0 209.1L355.2 212.6L357.6 214.2L359.2 214.8L366.4 216.0L372.0 217.9L378.4 221.0L392.8 229.0L400.0 232.0L404.0 233.1L408.0 233.7L412.0 233.7L416.8 233.2L424.0 231.9L440.8 227.6L451.2 226.2L454.4 224.8L456.8 222.9L460.0 219.4L478.4 193.2L480.0 191.2L481.8 190.0L483.2 190.5L484.8 192.4L491.2 203.0L495.2 208.3L497.6 210.3L501.6 211.4L503.2 212.5L505.6 215.3L512.0 224.3L514.4 226.2L516.0 226.5"/><path d="M188.0 234.0L191.2 234.3L198.4 235.8L201.6 235.6L204.8 233.5L209.6 228.5L212.0 226.5L213.6 225.8L216.0 225.3L216.8 224.9L218.4 223.4L220.8 219.6L228.8 202.6L230.4 200.5L231.6 199.8L233.6 200.3L239.2 203.1L249.6 205.7L268.0 211.3L276.0 212.8L284.0 213.3L292.0 212.5L300.0 210.7L320.0 204.2L332.0 201.2L337.6 198.3L339.2 197.9L340.7 198.4L342.4 200.0L352.0 212.9L355.2 216.2L357.6 217.8L359.2 218.3L365.6 219.0L372.0 221.0L378.4 223.9L393.6 232.2L400.8 235.2L404.8 236.1L408.0 236.5L412.0 236.6L416.8 236.1L423.2 235.0L440.0 230.9L444.8 230.1L451.2 229.7L454.4 228.4L456.8 226.5L460.0 223.0L470.4 208.1L477.6 199.1L480.0 196.7L481.8 195.9L483.2 196.4L484.8 197.9L492.0 209.0L495.2 213.2L497.6 215.3L501.6 216.4L503.2 217.5L505.6 220.4L512.0 229.7L514.4 231.6L516.0 232.0"/><path d="M188.0 239.5L191.2 239.8L198.4 241.4L201.6 241.1L204.8 239.0L209.6 233.8L212.0 231.8L213.6 231.0L216.0 230.6L216.8 230.1L218.4 228.5L220.8 224.7L228.0 209.6L229.6 207.2L231.6 205.9L233.6 206.1L238.4 207.6L248.0 209.9L270.4 216.6L277.6 217.9L284.0 218.1L290.4 217.6L297.6 216.1L321.6 208.3L339.2 203.9L340.8 204.3L343.2 206.3L352.8 218.4L355.2 220.8L357.6 222.4L359.2 222.9L365.6 223.5L372.0 225.5L378.4 228.5L393.6 236.9L400.8 239.9L404.8 240.9L408.0 241.3L416.0 241.0L423.2 239.7L440.0 235.6L444.8 234.9L451.2 234.5L454.4 233.2L456.8 231.3L460.0 227.7L470.4 212.5L474.4 207.5L478.4 203.5L480.0 202.4L481.8 202.0L483.0 202.2L484.0 202.8L485.6 204.3L493.6 216.1L496.0 219.0L498.4 220.7L501.6 221.4L503.2 222.6L505.6 225.5L512.0 235.1L514.4 237.1L516.0 237.5"/><path d="M188.0 245.0L191.2 245.3L199.2 247.0L201.6 246.7L203.2 245.8L211.2 237.7L213.6 236.2L216.0 235.8L218.4 233.7L220.8 229.7L227.2 216.4L229.6 213.2L231.6 212.0L237.6 212.3L244.8 213.6L265.6 220.1L272.0 221.8L278.4 222.8L284.0 223.0L290.4 222.5L297.6 221.0L304.0 219.0L319.2 213.6L326.4 211.6L332.8 210.4L338.9 210.0L341.6 210.7L344.0 212.4L346.4 215.0L353.6 224.2L356.0 226.4L357.6 227.4L359.2 227.9L365.6 228.6L372.0 230.6L378.4 233.7L393.6 242.4L400.8 245.5L404.8 246.5L408.0 246.9L416.0 246.6L423.2 245.3L439.2 241.2L444.8 240.3L451.2 239.9L453.6 239.0L456.8 236.6L460.0 232.9L470.4 217.3L474.4 212.3L478.4 209.0L480.0 208.3L481.8 208.0L484.0 208.5L486.4 210.5L494.4 222.0L496.8 224.6L498.4 225.7L501.6 226.4L503.2 227.6L505.6 230.6L512.0 240.5L514.4 242.6L516.0 243.0"/></g><path d="M187.8 180.1L192.2 187.2L194.1 189.5L195.0 190.3L196.6 190.6L202.9 190.4L205.7 190.1L208.2 189.5L211.1 187.9L218.0 181.9L219.8 179.9L221.5 176.9L225.9 166.1L227.7 163.5L229.4 162.1L231.2 161.1L237.8 158.9L240.3 158.8L244.5 159.1L276.0 164.2L282.0 165.0L285.8 165.2L288.0 165.0L292.6 163.9L318.3 159.7L324.0 159.0L327.9 158.9L332.5 159.3L338.1 160.4L342.5 161.7L345.7 163.3L348.2 165.3L350.0 167.3L359.7 179.9L361.4 181.7L364.3 183.7L368.3 185.0L375.4 186.5L388.3 188.8L396.5 189.9L403.1 190.5L417.8 190.7L443.7 189.5L448.3 189.0L454.6 187.8L458.6 186.5L461.5 184.8L463.5 183.3L466.2 180.4L470.9 173.9L472.8 170.2L475.1 164.3L476.0 162.7L477.2 161.4L478.6 160.3L481.2 159.2L484.8 158.4L488.1 158.2L491.0 158.9L495.9 161.4L500.4 162.0L502.2 162.9L504.8 166.2L516.3 185.8" stroke="#ffb032" stroke-width="2" fill="none" stroke-linejoin="round"/></svg>
<svg class="a" style="left:673px;top:36px" width="350" height="215" viewBox="673 36 350 215"><g stroke="#909090" stroke-width="0.9" fill="none" stroke-opacity="0.85"><path d="M677.0 58.0L678.6 58.0L680.5 52.3L682.6 57.4L684.2 59.1L685.0 59.0L687.4 56.8L688.2 57.1L689.8 58.9L690.6 59.2L693.0 57.0L693.8 56.9L696.2 59.1L697.0 59.0L699.4 56.8L700.2 57.1L701.8 58.9L702.6 59.2L705.0 57.2L706.6 57.7L707.4 57.4L709.4 46.6L711.4 57.5L712.2 57.8L713.8 56.7L714.6 56.8L717.0 58.2L717.8 57.9L720.2 55.8L721.0 55.8L723.4 57.3L724.2 57.1L726.6 55.1L727.4 55.2L729.8 57.0L730.6 57.0L733.0 55.3L733.8 55.4L736.2 57.5L737.0 57.6L739.4 56.1L740.2 56.2L742.6 58.3L743.4 58.5L745.8 56.9L746.6 56.8L748.2 57.2L749.0 56.2L751.4 49.9L752.0 49.5L753.0 50.7L755.4 56.5L756.2 57.4L757.8 57.9L790.6 57.9L792.2 57.1L793.0 55.8L794.8 51.1L795.4 49.9L796.0 49.5L797.0 50.7L798.6 55.2L799.4 56.5L801.0 56.8L803.4 58.8L804.2 59.0L807.4 56.9L810.6 58.7L813.8 56.3L814.6 56.4L817.0 57.8L817.8 57.5L820.2 55.4L821.0 55.5L823.4 57.1L824.2 56.9L826.6 55.1L827.4 55.2L829.8 57.1L830.6 57.2L833.0 55.6L833.8 55.7L836.2 57.9L837.0 58.0L839.4 56.6L841.0 57.3L841.8 57.3L842.6 54.1L844.0 42.8L845.8 56.7L846.6 58.2L849.0 57.0L851.4 58.8L852.2 59.0L855.4 57.0L858.6 59.0L861.8 57.0L862.6 57.2L865.0 59.0L865.8 58.8L868.2 57.0L869.0 57.2L871.4 59.0L872.2 58.8L874.6 57.0L875.4 57.1L877.8 59.0L878.6 58.9L881.0 56.9L882.6 56.3L883.4 55.1L885.0 50.7L886.0 49.5L886.6 49.9L887.2 51.1L889.0 55.8L889.8 57.1L891.4 57.9L925.0 56.4L957.0 57.9L958.6 57.5L959.4 56.8L962.4 49.9L963.0 49.5L963.6 49.9L965.8 55.6L966.6 56.6L968.2 56.9L970.6 58.9L971.4 59.0L973.8 57.2L974.6 57.0L977.0 58.8L977.8 59.0L980.2 57.2L981.0 57.0L983.4 58.8L984.2 59.0L987.4 57.0L990.6 59.0L991.4 58.7L993.0 57.3L993.8 57.2L995.4 57.4L996.2 54.3L997.6 42.8L999.4 56.5L1000.2 58.0L1002.6 56.3L1003.4 56.6L1005.0 58.2L1005.8 58.3L1008.2 55.9L1009.0 56.0L1011.4 58.4L1012.2 58.2L1013.8 56.6L1014.6 56.5L1017.0 58.3L1018.6 58.0"/><path d="M677.0 61.0L677.8 61.2L678.6 60.5L679.9 54.3L680.5 52.7L682.6 61.3L683.4 62.2L684.2 62.1L685.8 60.4L686.6 59.9L687.4 60.3L689.0 62.1L689.8 62.3L692.2 60.0L693.0 60.0L695.4 62.1L696.2 61.9L697.8 60.1L698.6 59.6L699.4 59.9L701.0 61.6L701.8 61.9L704.2 59.6L705.0 59.8L706.6 60.7L707.4 59.4L708.8 48.9L709.0 47.8L709.4 47.4L710.6 56.3L711.4 59.7L712.2 59.9L713.8 59.6L715.4 60.8L716.2 60.9L719.4 58.5L720.2 58.6L722.6 60.0L723.4 59.7L725.8 57.7L726.6 57.8L729.0 59.5L729.8 59.4L732.2 57.8L733.0 58.0L735.4 60.0L736.2 60.1L738.6 58.7L739.4 58.9L741.8 61.1L742.6 61.2L745.0 59.8L745.8 59.8L747.4 60.7L748.2 60.3L749.0 58.7L750.8 53.0L751.4 51.7L752.0 51.2L753.0 52.5L755.4 59.2L756.2 60.3L757.8 61.0L776.2 61.2L790.6 60.9L792.2 59.8L793.0 58.4L794.8 53.0L795.4 51.7L796.0 51.2L797.0 52.6L798.6 57.2L799.4 58.7L802.6 61.8L803.4 61.9L805.8 60.2L806.6 59.9L809.0 61.5L809.8 61.6L813.0 59.2L816.2 60.6L819.4 58.1L820.2 58.2L822.6 59.6L823.4 59.4L825.8 57.5L826.6 57.7L829.0 59.5L829.8 59.4L832.2 57.8L833.0 58.0L835.4 60.2L836.2 60.2L838.6 58.8L839.4 59.0L841.0 60.3L841.8 60.0L842.6 56.5L843.4 48.3L844.2 43.6L845.8 57.5L846.6 60.0L848.2 59.7L849.0 60.0L850.6 61.4L851.4 61.5L853.8 59.8L854.6 59.6L857.0 61.4L857.8 61.6L860.2 59.9L861.0 59.7L864.2 61.7L867.4 59.8L868.2 60.0L870.6 61.7L871.4 61.5L873.8 59.8L874.6 60.0L877.0 61.7L877.8 61.6L880.2 59.8L881.8 59.8L882.6 59.3L885.0 52.5L886.0 51.2L886.6 51.7L887.2 53.0L889.0 58.2L889.8 59.6L891.4 60.7L897.0 60.7L916.2 59.5L925.0 59.2L957.0 60.8L958.6 60.3L959.4 59.4L961.8 53.0L962.4 51.7L963.0 51.2L963.6 51.7L965.8 57.5L966.6 58.7L969.8 61.7L970.6 61.7L973.0 59.9L973.8 59.8L976.2 61.6L977.0 61.7L979.4 59.9L980.2 59.8L982.6 61.5L983.4 61.7L985.8 59.9L986.6 59.7L989.0 61.4L989.8 61.6L992.2 59.8L993.0 59.6L994.6 60.5L995.4 59.7L997.0 45.7L997.6 43.8L999.4 58.9L1000.2 60.1L1001.8 59.2L1002.6 59.4L1004.2 60.8L1005.0 60.8L1007.4 58.5L1008.2 58.6L1010.6 61.0L1011.4 60.7L1013.0 59.2L1013.8 59.1L1016.2 61.3L1018.6 60.9"/><path d="M677.0 64.6L677.8 64.5L678.6 63.0L679.9 55.2L680.5 53.6L682.6 65.1L683.4 65.6L685.0 63.9L685.8 63.6L686.6 64.0L688.2 65.8L689.0 65.9L691.4 63.7L692.2 63.6L694.6 65.7L695.4 65.4L697.0 63.5L697.8 63.0L698.6 63.3L700.2 64.9L701.0 65.0L703.4 62.7L704.2 62.7L705.8 64.1L706.6 63.7L707.4 60.7L709.0 48.4L709.4 49.0L710.6 59.0L711.4 62.3L714.6 64.0L715.4 64.1L717.8 62.0L718.6 61.6L719.4 61.8L721.0 62.9L721.8 63.0L725.0 60.7L725.8 60.9L728.2 62.4L731.4 60.6L732.2 60.9L734.6 62.9L735.4 62.9L737.8 61.6L738.6 61.9L741.0 64.1L741.8 64.2L744.2 62.7L745.0 62.8L746.6 63.8L747.4 63.8L748.2 62.7L749.0 60.7L750.8 55.3L751.4 54.1L752.0 53.7L753.0 54.9L754.6 59.6L756.2 62.9L757.8 64.0L761.0 64.6L767.4 64.9L781.0 64.9L786.6 64.6L789.8 64.1L791.4 63.3L792.2 62.3L794.8 55.4L795.4 54.1L796.0 53.7L797.0 54.9L800.2 62.4L801.8 64.6L802.6 64.9L805.0 63.4L805.8 63.4L808.2 65.0L809.0 65.0L811.4 63.0L812.2 62.7L814.6 63.9L815.4 63.9L817.8 61.7L818.6 61.3L821.8 62.6L825.0 60.3L825.8 60.5L828.2 62.1L831.4 60.4L832.2 60.7L834.6 62.8L835.4 62.7L837.8 61.5L838.6 61.7L840.2 63.2L841.0 63.4L841.8 62.7L842.6 59.3L844.2 44.8L844.6 45.7L845.8 57.8L846.6 61.9L849.8 64.4L850.6 64.4L853.0 62.7L853.8 62.7L856.2 64.5L857.0 64.6L859.4 63.0L860.2 62.9L862.6 64.7L863.4 64.9L865.8 63.2L866.6 63.0L869.0 64.7L869.8 64.9L873.0 63.0L876.2 64.8L877.0 64.6L879.4 62.6L881.8 62.8L882.6 61.7L885.0 54.7L886.0 53.6L886.6 54.0L887.2 55.3L889.8 62.0L891.4 63.4L893.0 63.8L899.4 64.0L916.2 62.8L925.0 62.5L933.8 62.8L949.8 63.9L955.4 63.9L957.0 63.6L958.6 62.7L960.2 59.9L961.8 55.2L962.4 54.0L963.0 53.6L963.6 54.0L964.2 55.2L966.6 61.0L968.2 63.6L969.0 64.4L969.8 64.4L972.2 62.9L973.0 63.0L975.4 64.9L976.2 64.8L978.6 63.1L979.4 63.1L981.8 64.8L982.6 64.8L985.0 63.0L985.8 62.8L988.2 64.5L989.0 64.6L991.4 62.8L992.2 62.7L993.8 63.7L994.6 63.7L995.4 61.3L997.0 45.7L997.6 45.6L998.8 57.9L999.4 61.6L1000.2 62.6L1001.8 62.6L1003.4 63.9L1004.2 63.7L1006.6 61.4L1007.4 61.6L1009.0 63.4L1009.8 63.9L1010.6 63.6L1012.2 62.2L1013.0 62.3L1015.4 64.7L1017.8 64.2L1018.6 64.3"/><path d="M677.0 68.3L677.8 67.9L678.6 65.5L679.9 56.4L680.2 55.2L680.5 55.1L681.8 64.5L682.6 68.3L683.4 68.5L685.0 67.5L687.4 69.7L688.2 69.8L690.6 67.6L691.4 67.6L693.8 69.5L694.6 69.1L696.2 67.2L697.0 66.7L697.8 67.0L699.4 68.5L700.2 68.5L702.6 66.0L703.4 66.1L705.0 67.5L705.8 67.6L706.6 66.1L708.2 53.5L709.0 49.7L710.6 62.0L711.4 65.5L712.2 66.4L713.8 67.4L714.6 67.4L717.0 65.2L717.8 64.9L720.2 66.1L721.0 66.1L723.4 64.0L724.2 63.7L727.4 65.3L729.8 63.8L730.6 63.6L733.8 65.8L737.0 64.7L740.2 67.3L741.0 67.3L743.4 65.9L744.2 66.0L745.8 67.0L746.6 67.1L747.4 66.3L748.2 64.7L750.8 58.1L751.4 57.1L752.0 56.7L753.0 57.8L755.4 64.1L757.0 66.5L759.4 67.8L763.4 68.6L781.8 68.8L785.8 68.4L789.0 67.6L790.6 66.8L792.2 64.8L794.8 58.2L795.4 57.1L796.0 56.7L796.6 57.1L797.2 58.1L800.2 65.6L801.0 67.0L801.8 67.5L804.2 66.7L805.0 66.8L807.4 68.7L808.2 68.6L810.6 66.6L811.4 66.4L813.8 67.5L814.6 67.4L817.0 65.1L817.8 64.7L820.2 65.7L821.0 65.7L823.4 63.6L824.2 63.3L827.4 64.9L829.8 63.3L830.6 63.1L833.8 65.4L837.0 64.2L840.2 66.5L841.0 66.3L841.8 65.4L842.6 62.1L844.0 48.1L844.2 46.9L844.6 46.4L846.6 63.8L847.4 66.0L849.0 67.5L849.8 67.5L852.2 65.9L853.0 65.9L855.4 67.8L856.2 67.8L858.6 66.2L859.4 66.2L861.8 68.1L862.6 68.2L865.0 66.6L865.8 66.5L868.2 68.2L869.0 68.4L871.4 66.7L872.2 66.5L874.6 68.0L875.4 68.2L878.6 65.8L881.0 66.3L881.8 65.5L884.8 57.8L885.4 56.8L886.0 56.5L886.6 56.9L887.2 58.0L889.0 62.7L890.6 65.5L892.2 66.6L895.4 67.4L900.2 67.5L916.2 66.2L924.2 65.9L933.0 66.2L949.0 67.5L954.6 67.2L957.0 66.5L958.6 65.3L960.2 62.2L961.8 57.9L962.4 56.9L963.0 56.5L963.6 56.8L964.2 57.8L967.4 65.5L968.2 66.7L969.0 67.0L971.4 66.0L972.2 66.3L974.6 68.2L975.4 68.2L977.8 66.5L978.6 66.6L981.0 68.2L981.8 68.1L984.2 66.3L985.0 66.3L987.4 67.9L988.2 67.9L990.6 66.0L991.4 65.9L993.8 67.4L994.6 66.4L995.4 62.0L997.0 46.4L997.6 48.2L998.8 61.0L999.4 64.4L1000.2 65.7L1002.6 66.9L1003.4 66.8L1005.8 64.4L1006.6 64.7L1008.2 66.4L1009.0 66.8L1011.4 65.3L1012.2 65.4L1014.6 68.2L1017.0 67.6L1018.6 68.1"/><path d="M677.0 72.2L677.8 71.3L678.6 68.1L680.2 56.9L680.5 57.0L681.0 59.8L681.8 67.0L682.6 70.9L685.0 72.0L686.6 73.7L687.4 73.8L689.8 71.7L690.6 71.8L692.2 73.3L693.0 73.6L693.8 73.1L695.4 71.1L696.2 70.7L698.6 72.3L699.4 72.2L701.8 69.6L702.6 69.6L704.2 71.1L705.0 71.3L705.8 70.4L706.6 67.6L708.2 53.5L708.8 51.3L709.4 54.3L710.6 65.4L711.4 69.1L712.2 70.3L713.0 70.8L713.8 70.8L716.2 68.6L717.0 68.4L719.4 69.4L720.2 69.3L722.6 67.1L723.4 66.9L725.8 68.1L726.6 68.2L729.0 66.6L729.8 66.5L733.0 68.7L735.4 67.7L736.2 67.7L739.4 70.4L740.2 70.4L742.6 69.2L745.0 70.5L745.8 70.5L746.6 69.8L747.4 68.5L750.8 61.4L752.0 60.2L752.6 60.5L753.2 61.5L755.4 66.8L757.0 69.5L758.6 70.9L760.2 71.7L764.2 72.7L770.6 73.0L781.0 72.9L785.0 72.5L787.4 71.9L789.8 70.6L791.4 68.9L794.8 61.5L795.4 60.5L796.0 60.2L796.6 60.4L797.2 61.2L800.2 68.7L801.0 69.8L803.4 69.8L806.6 72.4L807.4 72.3L809.8 70.4L810.6 70.3L813.0 71.2L813.8 71.0L816.2 68.6L817.0 68.3L819.4 69.1L820.2 68.9L822.6 66.6L823.4 66.3L825.8 67.5L826.6 67.6L829.0 65.9L829.8 65.8L833.0 68.0L835.4 67.0L836.2 66.9L839.4 69.5L841.0 69.0L841.8 68.2L842.6 65.3L844.0 51.3L844.6 48.0L845.2 50.5L846.6 65.2L847.4 69.2L848.2 70.5L849.0 70.7L851.4 69.1L852.2 69.3L854.6 71.1L855.4 71.1L857.8 69.6L858.6 69.7L861.0 71.5L861.8 71.6L864.2 70.0L865.0 70.0L867.4 71.8L868.2 71.9L870.6 70.2L871.4 70.1L873.8 71.7L874.6 71.7L877.8 69.3L880.2 69.8L881.0 69.3L884.8 60.9L886.0 59.9L887.2 61.1L889.0 65.4L890.6 68.3L893.0 70.2L896.2 71.1L901.0 71.2L916.2 69.6L924.2 69.3L933.0 69.6L948.2 71.1L952.2 71.1L955.4 70.4L957.8 68.9L959.4 66.6L961.8 61.1L963.0 59.9L963.6 60.1L964.2 60.9L967.4 68.4L968.2 69.2L970.6 69.0L973.8 71.7L974.6 71.6L977.0 70.1L977.8 70.2L980.2 71.8L981.0 71.6L983.4 69.8L984.2 69.9L986.6 71.4L987.4 71.2L989.8 69.4L990.6 69.4L993.0 71.0L993.8 70.5L994.6 68.1L996.4 50.6L997.0 48.1L997.6 51.5L998.8 64.3L999.4 67.6L1000.2 69.2L1001.8 70.0L1002.6 69.9L1005.0 67.5L1005.8 67.7L1007.4 69.4L1008.2 69.7L1010.6 68.2L1011.4 68.4L1013.8 71.5L1014.6 71.6L1016.2 71.0L1018.6 72.0"/><path d="M677.0 76.1L677.8 74.8L678.6 70.7L680.2 59.0L680.5 59.3L681.0 62.2L682.6 73.7L683.4 75.2L685.8 77.9L686.6 77.9L689.0 75.9L689.8 76.1L691.4 77.6L692.2 77.8L693.0 77.3L694.6 75.3L695.4 74.9L697.8 76.3L698.6 76.0L701.0 73.3L701.8 73.4L703.4 74.8L704.2 75.1L705.0 74.4L705.8 72.6L706.6 68.6L708.2 54.3L708.8 53.7L710.6 69.2L711.4 72.9L712.2 74.1L713.0 74.1L715.4 72.1L716.2 71.9L718.6 72.8L719.4 72.5L721.8 70.2L722.6 70.0L725.0 71.1L725.8 71.0L728.2 69.3L729.0 69.2L731.4 71.1L732.2 71.3L734.6 70.4L735.4 70.5L738.6 73.4L741.8 72.6L744.2 74.1L745.0 74.1L746.6 72.2L750.8 65.2L752.0 64.1L753.2 65.1L756.2 71.4L758.6 74.4L761.8 76.3L765.8 77.1L780.2 77.2L784.2 76.8L786.6 76.1L789.0 74.7L790.6 73.1L792.2 70.6L794.8 65.1L796.0 64.1L796.6 64.2L797.2 64.9L800.2 71.4L801.0 72.1L802.6 72.8L805.8 76.1L806.6 76.1L809.0 74.4L809.8 74.3L812.2 75.1L813.0 74.7L815.4 72.2L816.2 71.9L818.6 72.4L819.4 72.1L821.8 69.6L822.6 69.3L825.0 70.3L825.8 70.2L828.2 68.5L829.0 68.4L831.4 70.2L832.2 70.5L834.6 69.5L835.4 69.6L837.8 71.9L838.6 72.3L839.4 72.2L841.8 71.2L842.6 68.7L844.2 53.1L844.6 50.5L845.0 50.3L847.4 71.7L848.2 73.4L850.6 72.5L851.4 72.7L853.8 74.5L854.6 74.4L857.0 73.1L857.8 73.3L860.2 75.1L861.0 75.1L863.4 73.6L864.2 73.7L866.6 75.5L867.4 75.5L869.8 73.9L870.6 73.9L873.0 75.4L873.8 75.4L876.2 73.4L877.0 73.1L879.4 73.5L880.2 72.9L884.2 65.4L885.0 64.3L886.0 63.6L887.2 64.7L889.8 69.9L891.4 72.2L893.8 74.0L896.2 74.8L901.0 74.9L916.2 73.0L924.2 72.6L933.0 73.0L948.2 74.9L952.2 74.9L955.4 73.9L957.8 71.9L959.4 69.5L961.8 64.6L963.0 63.6L963.6 63.8L964.2 64.4L967.4 70.9L969.8 71.9L972.2 74.6L973.0 75.1L973.8 75.0L976.2 73.7L979.4 75.5L980.2 75.3L982.6 73.5L983.4 73.6L985.8 75.0L986.6 74.8L989.0 73.0L989.8 73.0L992.2 74.5L993.0 74.2L993.8 72.8L994.6 69.1L996.2 52.8L996.4 51.3L997.0 50.7L998.8 67.9L999.4 71.1L1000.2 72.8L1001.0 73.2L1001.8 73.0L1004.2 70.6L1005.0 70.8L1006.6 72.2L1007.4 72.4L1009.8 71.0L1010.6 71.3L1013.0 74.5L1013.8 74.8L1015.4 74.3L1018.6 76.0"/><path d="M677.0 80.0L677.8 78.2L680.2 61.4L680.5 61.8L681.0 64.7L682.6 77.1L683.4 79.9L684.2 81.3L685.0 82.1L685.8 82.1L688.2 80.2L689.0 80.4L690.6 82.0L691.4 82.2L692.2 81.6L693.8 79.6L694.6 79.2L697.0 80.5L697.8 80.1L700.2 77.3L701.0 77.3L702.6 78.6L703.4 78.8L704.2 78.2L705.0 76.9L705.8 74.5L708.2 56.0L708.8 56.9L709.0 58.2L710.6 73.1L711.4 76.6L712.2 77.5L714.6 75.7L715.4 75.6L717.8 76.1L718.6 75.7L721.0 73.3L721.8 73.0L724.2 73.8L725.0 73.6L727.4 71.8L728.2 71.8L730.6 73.5L731.4 73.7L733.8 72.9L734.6 73.1L737.0 75.7L737.8 76.1L740.2 75.7L741.0 75.9L743.4 77.7L744.2 77.7L745.0 77.0L749.0 72.0L750.8 69.1L752.0 68.2L753.2 69.1L757.0 76.0L759.4 78.8L762.6 80.8L766.6 81.5L780.2 81.5L783.4 81.2L785.8 80.5L788.2 79.1L789.8 77.6L791.4 75.3L794.6 69.4L796.0 68.2L797.0 68.7L799.4 73.0L801.8 75.5L804.2 78.9L805.0 79.6L805.8 79.7L808.2 78.4L811.4 79.1L812.2 78.6L814.6 75.9L815.4 75.6L817.8 75.8L818.6 75.3L821.0 72.5L821.8 72.3L824.2 72.9L825.0 72.7L827.4 70.8L828.2 70.8L830.6 72.5L831.4 72.7L833.8 71.8L834.6 72.1L837.0 74.5L837.8 74.9L840.2 74.5L841.0 74.7L841.8 74.6L842.6 72.3L844.2 57.0L845.0 52.5L845.8 57.0L847.4 73.1L848.2 75.8L850.6 76.3L853.0 78.0L856.2 76.6L859.4 78.7L860.2 78.6L862.6 77.3L863.4 77.5L865.8 79.2L866.6 79.2L869.0 77.7L869.8 77.7L872.2 79.2L873.0 79.2L875.4 77.2L876.2 77.0L878.6 77.4L879.4 76.8L882.6 71.3L885.0 68.3L886.0 67.7L887.4 68.7L890.6 74.3L892.2 76.3L894.6 78.0L897.0 78.8L901.0 78.7L916.2 76.3L924.2 75.7L931.4 76.1L946.6 78.5L951.4 78.8L954.6 77.9L957.0 76.0L958.6 73.9L961.8 68.4L963.0 67.6L964.2 68.3L966.6 72.4L969.0 74.5L971.4 77.9L972.2 78.4L975.4 77.4L977.8 79.1L978.6 79.3L981.8 77.3L985.0 78.7L988.2 76.6L989.0 76.8L991.4 78.1L992.2 77.8L993.0 76.9L993.8 74.7L994.6 69.7L996.4 53.0L997.0 54.1L998.8 71.6L999.4 74.7L1000.2 76.2L1001.0 76.2L1003.4 73.7L1004.2 73.8L1005.8 74.9L1006.6 75.0L1009.0 73.4L1009.8 73.8L1012.2 77.2L1013.0 77.5L1014.6 77.3L1015.4 77.7L1017.0 79.5L1018.6 80.1"/><path d="M677.0 83.9L677.8 81.4L679.4 68.0L680.2 64.1L681.0 67.6L682.6 81.3L683.4 84.8L684.2 86.2L685.0 86.4L687.4 84.6L688.2 84.9L689.8 86.5L690.6 86.6L693.0 84.1L693.8 83.7L696.2 84.9L697.0 84.4L699.4 81.4L700.2 81.4L701.8 82.5L702.6 82.6L703.4 82.0L705.0 79.3L705.8 76.3L707.4 62.2L708.2 58.5L708.8 60.7L710.6 77.0L711.4 80.1L712.2 80.6L713.8 79.5L717.0 79.5L720.2 76.3L721.0 76.0L723.4 76.4L726.6 74.0L727.4 74.0L729.8 75.6L730.6 75.6L733.0 74.9L733.8 75.3L736.2 78.0L737.0 78.5L739.4 78.5L740.2 78.9L742.6 81.1L743.4 81.2L744.2 80.6L746.6 77.9L748.2 76.7L750.8 73.1L752.0 72.5L753.0 73.0L753.8 74.0L757.8 80.7L760.2 83.5L763.4 85.3L767.4 86.0L780.2 85.9L783.4 85.6L785.8 84.8L787.4 83.8L789.0 82.2L794.6 73.4L796.0 72.5L797.2 73.2L801.0 77.9L803.4 82.1L804.2 83.0L805.0 83.2L807.4 82.5L809.8 83.3L810.6 83.2L813.8 79.7L817.0 79.1L820.2 75.4L821.0 75.1L823.4 75.3L826.6 72.9L827.4 72.9L829.8 74.4L830.6 74.5L833.0 73.8L833.8 74.2L836.2 76.8L837.0 77.2L839.4 77.1L841.0 78.1L841.8 78.1L842.8 74.7L844.6 57.7L845.2 55.4L845.8 57.8L847.4 73.8L848.2 77.8L849.0 79.1L851.4 81.2L852.2 81.4L855.4 80.2L858.6 82.3L861.8 81.0L865.0 83.0L865.8 82.9L868.2 81.5L869.0 81.7L871.4 83.1L872.2 83.0L874.6 81.2L877.8 81.5L878.6 80.8L881.8 75.7L885.0 72.2L886.0 71.8L887.4 72.6L891.4 78.7L893.0 80.5L895.4 82.2L897.8 82.7L902.6 82.2L917.0 79.2L924.2 78.6L931.4 79.1L947.4 82.3L949.8 82.6L952.2 82.5L954.6 81.5L956.2 80.3L957.8 78.4L961.0 73.4L961.8 72.4L963.0 71.7L964.2 72.4L967.4 75.9L970.6 80.9L971.4 81.5L974.6 81.2L977.0 83.0L977.8 83.1L980.2 81.5L981.0 81.3L983.4 82.5L984.2 82.5L987.4 80.4L990.6 81.7L992.2 80.6L993.0 79.2L993.8 76.4L995.4 61.7L996.4 55.7L997.0 58.2L998.8 76.8L999.4 80.3L1000.2 82.5L1001.0 83.2L1002.6 83.9L1005.0 87.7L1005.8 88.4L1008.2 87.5L1009.0 87.7L1010.6 88.9L1011.4 89.1L1014.6 85.5L1017.0 85.4L1018.6 84.5"/><path d="M677.0 87.7L677.8 84.5L679.4 70.5L680.2 67.3L681.0 71.1L682.6 85.8L683.4 89.5L684.2 90.4L686.6 89.0L687.4 89.4L689.0 91.0L689.8 91.1L692.2 88.7L693.0 88.4L695.4 89.4L696.2 88.9L698.6 85.8L699.4 85.7L701.0 86.7L701.8 86.6L703.4 84.8L705.0 81.9L705.8 78.0L707.4 63.7L708.2 61.7L710.6 81.4L711.4 84.5L712.2 85.5L713.8 86.4L716.2 89.0L719.4 89.6L722.6 93.1L723.4 93.4L725.8 93.1L729.0 95.3L729.8 95.2L732.2 93.6L735.4 94.1L736.2 93.7L738.6 91.1L739.4 90.6L741.8 90.2L743.4 88.2L745.8 83.8L748.2 80.9L749.8 78.2L750.6 77.2L751.4 76.7L752.6 76.9L753.8 77.9L758.6 85.7L760.2 87.6L761.8 89.0L763.4 89.7L765.8 90.3L773.0 90.7L781.8 90.3L784.2 89.8L785.8 89.1L787.4 87.9L789.0 86.2L794.6 77.5L795.4 76.9L796.2 76.7L797.2 77.2L799.4 79.2L803.4 86.0L804.2 86.5L806.6 86.8L809.8 89.6L812.2 89.2L813.0 89.4L816.2 92.5L819.4 92.3L822.6 94.4L823.4 94.3L825.8 92.7L829.0 93.1L829.8 92.6L832.2 89.9L833.0 89.5L835.4 89.2L838.6 85.7L841.0 85.0L841.8 84.0L842.8 79.8L845.2 58.8L845.8 59.6L848.2 79.8L849.0 82.6L849.8 84.0L850.6 84.7L851.4 84.9L853.8 83.8L854.6 83.8L857.8 85.9L861.0 84.8L864.2 86.8L867.4 85.4L870.6 87.1L871.4 86.8L873.8 85.2L876.2 85.8L877.0 85.7L877.8 85.0L881.0 80.1L882.6 78.8L884.8 76.2L886.0 75.8L887.2 76.3L888.2 77.4L892.2 83.6L894.6 86.6L898.6 89.6L910.6 95.3L916.2 97.5L921.8 98.8L927.4 99.0L932.2 98.1L937.0 96.5L944.2 93.2L951.4 89.4L954.6 86.6L961.0 77.1L961.8 76.3L963.0 75.7L964.2 76.2L966.6 78.1L969.8 83.7L970.6 84.5L973.8 84.9L976.2 86.8L977.0 86.9L979.4 85.4L980.2 85.3L982.6 86.5L983.4 86.4L985.8 84.6L986.6 84.4L989.0 85.4L989.8 85.5L990.6 85.1L992.2 83.4L993.0 81.7L993.8 78.1L995.4 62.7L996.2 58.8L997.0 62.7L998.8 80.5L999.4 83.6L1000.2 85.4L1001.8 86.3L1004.2 89.6L1005.0 90.2L1007.4 89.5L1008.2 89.9L1009.8 91.6L1010.6 91.9L1011.4 91.5L1013.0 89.7L1013.8 89.2L1016.2 89.8L1018.6 88.7"/><path d="M677.0 91.4L677.8 87.5L679.4 73.5L679.9 71.2L680.2 71.0L681.0 75.2L682.6 90.0L683.4 93.4L684.2 94.0L685.8 93.4L688.2 95.5L689.0 95.7L691.4 93.4L692.2 93.2L693.8 94.0L694.6 94.1L695.4 93.5L697.8 90.3L698.6 90.2L700.2 90.9L701.0 90.7L704.2 86.8L705.0 84.7L707.4 65.8L708.2 65.7L710.0 81.1L710.6 85.2L711.4 88.0L712.2 89.1L715.4 91.9L717.8 91.8L718.6 92.1L721.8 95.2L725.0 95.1L728.2 97.4L729.0 97.3L731.4 96.1L734.6 96.9L735.4 96.6L737.8 94.5L741.0 94.3L741.8 93.6L744.2 89.8L747.4 85.8L749.8 81.4L750.6 80.6L751.4 80.3L752.6 80.5L753.8 81.6L760.2 91.8L762.6 93.8L765.0 94.7L769.8 95.2L777.0 95.2L781.8 94.8L785.0 93.9L786.6 92.9L788.2 91.3L793.8 82.0L794.8 80.9L796.0 80.3L797.8 81.0L799.4 82.7L802.6 88.8L803.4 89.5L805.8 90.6L808.2 92.9L809.0 93.3L811.4 92.7L812.2 92.8L815.4 95.3L818.6 94.8L821.0 96.4L821.8 96.6L825.0 94.9L828.2 95.4L831.4 92.6L834.6 92.2L837.8 89.0L838.6 88.7L840.2 88.9L841.0 88.5L841.8 87.3L842.8 83.4L845.0 63.9L845.2 62.8L845.8 62.1L846.6 66.9L848.2 81.8L849.0 86.0L849.8 87.9L850.6 88.4L853.0 87.4L853.8 87.5L856.2 89.3L857.0 89.5L859.4 88.6L860.2 88.6L862.6 90.3L863.4 90.6L866.6 89.4L869.8 91.0L873.0 89.3L875.4 90.1L876.2 90.0L877.0 89.3L879.4 85.6L881.8 83.3L884.2 80.0L885.0 79.3L885.8 79.2L887.2 79.8L888.2 80.8L893.0 88.4L894.6 90.5L896.2 92.0L898.6 93.5L909.8 98.2L916.2 100.4L922.6 101.6L928.2 101.6L933.0 100.8L937.8 99.3L947.4 95.4L951.4 93.3L953.8 91.4L955.4 89.4L961.0 80.5L961.8 79.7L963.0 79.2L964.2 79.5L965.8 80.5L969.8 87.1L972.2 88.0L975.4 90.7L976.2 90.8L978.6 89.4L979.4 89.4L981.8 90.5L982.6 90.4L985.0 88.6L985.8 88.4L988.2 89.4L989.0 89.3L992.2 86.5L993.0 84.4L993.8 79.6L995.4 64.5L996.2 62.5L997.0 67.5L998.6 83.0L999.4 87.0L1000.2 88.5L1001.8 89.8L1003.4 92.0L1004.2 92.4L1006.6 91.9L1009.0 94.3L1009.8 94.7L1010.6 94.4L1012.2 93.1L1013.0 92.9L1015.4 94.1L1017.8 92.9L1018.6 92.9"/><path d="M677.0 95.0L679.3 77.8L679.9 75.3L680.2 75.4L680.5 76.4L681.0 79.8L682.6 93.7L683.4 96.7L684.2 97.5L685.8 98.4L687.4 100.1L688.2 100.2L690.6 98.1L691.4 98.0L693.0 98.9L693.8 98.9L697.0 95.0L697.8 94.9L699.4 95.4L700.2 95.1L704.2 90.3L705.0 87.1L706.6 73.2L707.4 68.7L708.2 70.2L710.6 89.1L711.4 91.8L712.2 93.1L713.8 94.6L714.6 95.0L717.0 94.7L717.8 95.0L721.0 97.6L724.2 97.5L727.4 99.7L730.6 98.7L733.8 99.8L737.0 97.9L740.2 98.2L741.0 97.7L743.4 94.5L745.8 92.0L749.8 84.4L750.8 83.6L752.0 83.4L753.2 84.0L754.6 85.9L758.6 93.7L760.2 96.1L762.6 98.3L765.0 99.3L769.8 99.9L777.0 99.8L781.8 99.5L785.0 98.5L786.6 97.3L788.2 95.5L793.8 85.2L794.8 84.0L796.2 83.3L797.2 83.6L798.6 84.9L801.8 91.3L807.4 96.9L808.2 97.1L810.6 96.5L811.4 96.6L813.8 98.3L814.6 98.5L817.0 97.7L817.8 97.8L820.2 99.1L821.0 99.2L824.2 97.5L826.6 98.1L827.4 98.0L830.6 95.4L833.8 95.2L837.0 92.4L837.8 92.3L839.4 92.5L841.0 91.7L841.8 90.5L842.8 87.1L845.0 68.6L845.8 65.4L846.6 68.6L849.0 88.8L849.8 91.0L850.6 91.5L852.2 91.0L853.0 91.2L855.4 93.0L856.2 93.2L858.6 92.3L859.4 92.4L861.8 94.2L862.6 94.4L865.0 93.4L865.8 93.4L868.2 94.9L869.0 95.0L872.2 93.5L874.6 94.4L875.4 94.3L876.2 93.6L878.6 90.3L881.0 88.0L884.2 82.7L885.0 82.2L886.0 82.1L887.2 82.7L888.2 83.8L893.0 92.2L894.6 94.5L897.8 97.2L902.6 99.2L913.8 103.1L919.4 104.4L925.0 104.9L930.6 104.6L936.2 103.3L945.8 99.9L951.4 97.3L954.6 94.4L956.2 92.0L960.2 84.6L961.8 82.6L963.0 82.0L964.2 82.2L965.0 82.7L965.8 83.6L969.0 89.5L971.4 91.2L974.6 94.5L975.4 94.6L977.8 93.5L978.6 93.5L981.0 94.6L981.8 94.5L984.2 92.7L985.0 92.5L987.4 93.4L988.2 93.2L991.4 90.9L992.2 89.9L993.0 87.0L995.4 66.9L996.2 66.8L998.6 87.0L999.4 90.5L1000.2 92.0L1002.6 94.7L1003.4 95.1L1005.8 94.5L1009.0 97.5L1009.8 97.4L1011.4 96.4L1012.2 96.4L1014.6 98.1L1017.0 97.1L1018.6 97.2"/><path d="M677.0 98.6L679.3 81.9L679.9 80.0L680.5 81.4L682.6 97.0L683.4 100.2L685.8 103.9L686.6 104.6L687.4 104.8L689.8 102.9L690.6 102.9L692.2 103.8L693.0 103.8L696.2 99.9L698.6 100.1L699.4 99.6L701.8 96.3L703.4 95.5L704.2 93.7L706.6 75.2L707.4 72.4L708.2 75.1L710.6 93.3L711.4 95.9L712.2 97.2L713.8 98.3L716.2 97.9L717.0 98.2L719.4 100.1L720.2 100.4L722.6 100.0L723.4 100.2L725.8 101.9L726.6 102.1L729.8 101.4L733.0 102.7L736.2 101.3L738.6 102.0L739.4 102.0L740.2 101.6L745.0 97.2L746.6 94.3L749.0 88.9L750.6 87.1L752.0 86.6L753.2 87.3L754.6 89.3L758.6 97.8L760.2 100.5L761.8 102.3L763.4 103.4L765.8 104.2L770.6 104.6L777.8 104.5L782.6 104.0L785.0 103.0L787.4 100.9L789.8 96.9L793.8 88.6L794.8 87.2L796.2 86.5L797.0 86.7L797.8 87.3L801.0 93.5L806.6 100.8L807.4 101.0L809.8 100.5L810.6 100.6L813.0 101.9L813.8 102.0L816.2 101.0L817.0 101.1L819.4 102.1L820.2 102.1L823.4 100.4L825.8 100.8L826.6 100.7L829.8 98.3L833.0 98.2L836.2 95.8L839.4 96.0L841.0 94.8L841.8 93.8L842.8 90.9L845.2 72.2L845.8 69.6L846.6 71.2L849.0 90.8L849.8 93.5L850.6 94.4L852.2 94.9L854.6 96.7L855.4 96.8L857.8 96.1L858.6 96.3L861.0 98.1L861.8 98.2L864.2 97.3L865.0 97.4L867.4 98.9L868.2 99.0L870.6 97.7L871.4 97.6L873.8 98.7L874.6 98.5L877.8 95.1L880.2 93.0L883.4 86.7L884.2 85.7L886.0 85.1L887.2 85.8L888.2 87.0L893.0 96.1L894.6 98.5L896.2 100.2L897.8 101.3L904.2 103.9L915.4 107.2L922.6 108.3L929.0 108.3L933.8 107.6L939.4 106.2L947.4 103.4L951.4 101.5L953.0 100.2L954.6 98.4L956.2 95.9L960.2 87.9L961.8 85.7L963.0 85.0L964.2 85.2L965.0 85.9L968.2 91.7L973.8 98.2L974.6 98.4L977.0 97.6L980.2 98.8L981.0 98.5L983.4 96.8L984.2 96.7L986.6 97.5L987.4 97.2L989.8 95.4L991.4 94.7L992.2 93.1L993.0 89.0L994.6 74.5L995.4 70.2L996.2 71.6L996.4 72.8L998.6 91.1L999.4 94.2L1000.2 95.8L1001.8 97.6L1002.6 97.9L1005.0 97.3L1008.2 100.3L1010.6 99.6L1011.4 99.8L1013.8 102.0L1016.2 101.2L1018.6 101.7"/><path d="M677.0 102.3L679.3 86.5L679.9 85.1L680.5 86.4L683.4 104.3L684.2 106.7L685.8 109.2L686.6 109.3L689.0 107.6L689.8 107.8L691.4 108.8L692.2 108.8L695.4 104.9L697.8 104.9L698.6 104.3L701.0 100.8L702.6 100.3L703.4 99.3L704.2 96.3L706.6 78.0L707.4 76.8L708.2 80.5L710.6 97.6L711.4 100.0L712.2 101.3L713.0 101.7L715.4 101.3L719.4 103.3L721.8 102.8L722.6 103.0L725.0 104.5L725.8 104.7L728.2 104.1L729.0 104.1L731.4 105.4L732.2 105.5L735.4 104.5L738.6 105.6L744.2 102.3L745.8 99.6L749.0 92.6L750.6 90.7L752.0 90.0L753.0 90.6L753.8 91.6L759.4 103.6L761.0 106.0L762.6 107.5L765.0 108.7L768.2 109.2L774.6 109.4L781.0 109.0L783.4 108.4L785.0 107.7L787.4 105.4L789.8 101.1L793.8 92.1L794.8 90.7L796.2 89.9L797.0 90.1L797.8 90.9L804.2 102.4L805.8 104.6L806.6 104.9L809.8 104.8L812.2 105.8L815.4 104.6L818.6 105.4L819.4 105.2L822.6 103.4L825.0 103.7L825.8 103.4L829.0 101.2L832.2 101.2L835.4 99.1L838.6 99.5L841.8 97.3L842.6 95.6L843.4 91.8L845.8 74.4L846.6 74.6L849.0 92.2L849.8 95.7L851.4 98.4L853.8 100.4L854.6 100.4L857.0 99.8L860.2 101.9L861.0 102.0L863.4 101.3L864.2 101.5L866.6 103.0L867.4 103.1L869.8 101.9L870.6 101.9L873.0 102.9L873.8 102.8L879.4 98.1L883.4 89.9L884.8 88.7L886.0 88.3L887.2 89.0L888.2 90.3L893.0 100.1L894.6 102.7L896.2 104.4L898.6 106.0L907.4 109.0L916.2 111.3L923.4 112.2L929.8 112.1L934.6 111.4L940.2 110.0L948.2 107.3L951.4 105.8L953.0 104.5L954.6 102.5L956.2 99.8L960.2 91.3L961.8 88.9L963.0 88.2L964.2 88.5L965.0 89.4L967.4 93.7L969.8 97.0L972.2 101.1L973.0 101.8L973.8 102.1L976.2 101.6L979.4 103.0L982.6 101.1L985.8 101.6L989.0 99.5L990.6 99.2L991.4 98.4L992.2 95.8L994.6 76.8L995.4 74.2L996.2 76.8L998.6 95.2L999.4 98.1L1000.2 99.7L1001.0 100.6L1001.8 100.9L1004.2 100.3L1007.4 103.1L1009.8 102.6L1010.6 103.0L1013.0 105.5L1013.8 105.7L1015.4 105.1L1018.6 106.1"/><path d="M677.0 106.0L679.3 91.4L679.9 90.2L680.5 91.4L681.0 93.9L683.4 109.2L684.2 112.0L685.0 113.5L685.8 113.8L688.2 112.4L689.0 112.6L690.6 113.8L691.4 113.8L694.6 110.1L697.0 109.9L697.8 109.1L700.2 105.5L702.6 104.6L703.4 102.5L706.6 81.6L707.4 81.9L710.6 101.9L711.4 104.1L712.2 105.0L713.0 105.2L716.2 103.9L717.0 103.1L719.4 98.5L720.2 97.9L721.0 98.6L723.4 104.6L724.2 106.0L725.0 106.8L728.2 106.8L730.6 108.1L731.4 108.2L733.8 107.5L737.0 108.3L737.8 107.8L738.6 106.6L741.0 100.6L741.8 99.7L742.6 99.9L744.2 101.6L745.0 102.0L745.8 101.5L749.8 95.3L750.8 94.1L752.0 93.6L753.0 94.2L753.8 95.3L759.4 108.1L761.0 110.6L762.6 112.2L765.0 113.5L768.2 114.0L773.8 114.2L780.2 113.9L784.2 112.8L786.6 110.9L789.0 107.1L793.8 95.9L794.8 94.4L796.2 93.5L797.0 93.8L797.8 94.7L802.6 103.5L804.2 105.5L805.0 105.2L807.4 101.2L808.2 100.9L809.0 101.9L811.4 107.6L812.2 108.5L813.0 108.7L815.4 108.3L817.8 108.7L821.0 106.8L824.2 106.4L825.0 105.7L825.8 104.5L829.0 97.0L829.8 96.3L830.6 96.6L833.8 100.9L836.2 102.5L837.8 102.7L841.8 101.0L842.6 99.5L843.4 96.2L845.8 79.7L846.6 78.7L847.4 82.0L849.8 98.0L851.4 102.5L853.0 104.0L856.2 103.6L859.4 105.7L862.6 105.3L865.8 107.1L866.6 107.1L869.0 106.1L869.8 106.1L872.2 107.2L873.0 107.0L875.4 105.2L877.8 104.0L878.6 103.2L882.6 94.8L884.2 92.8L886.0 91.8L887.2 92.5L888.2 93.9L893.8 105.7L895.4 107.9L897.8 109.9L903.4 112.1L915.4 115.3L922.6 116.2L929.8 116.2L935.4 115.4L941.0 114.0L948.2 111.7L951.4 110.1L953.0 108.7L954.6 106.7L956.2 103.9L961.0 93.5L961.8 92.4L963.0 91.6L964.2 92.0L965.0 93.0L968.2 98.0L971.4 104.3L972.2 105.3L973.0 105.6L975.4 105.7L977.8 107.0L978.6 107.2L981.8 105.4L985.0 105.8L988.2 103.7L989.8 103.7L990.6 103.3L991.4 101.6L992.2 97.8L994.6 80.0L995.4 79.0L996.2 82.5L998.2 97.4L999.4 102.1L1000.2 103.5L1001.0 104.0L1003.4 103.3L1006.6 105.7L1009.0 105.3L1009.8 105.8L1012.2 108.6L1013.0 108.9L1014.6 108.8L1017.0 110.3L1018.6 110.6"/><path d="M677.0 109.9L678.6 99.9L679.3 96.5L679.9 95.5L680.5 96.6L681.0 98.9L682.6 109.9L683.4 114.4L684.2 117.1L685.0 118.0L687.4 117.1L689.8 118.8L690.6 118.8L693.8 115.3L696.2 115.0L699.4 110.3L701.8 109.6L702.6 108.1L703.4 104.8L705.8 88.6L706.6 86.2L707.4 87.5L710.6 106.2L711.4 108.0L712.2 108.7L715.4 108.4L716.2 107.9L717.0 106.7L719.4 101.3L720.2 100.8L721.0 101.7L723.4 107.5L724.2 108.6L725.0 109.0L727.4 109.3L729.8 110.5L733.0 110.3L736.2 111.6L737.0 111.4L738.6 109.5L741.0 104.7L741.8 104.0L742.6 104.1L744.2 105.4L745.0 105.6L745.8 105.3L747.4 103.4L750.6 98.1L751.4 97.5L752.0 97.5L753.0 98.1L753.8 99.2L759.4 112.6L761.0 115.3L762.6 117.0L765.0 118.3L769.0 119.0L775.4 119.1L781.0 118.6L783.4 118.0L785.0 117.1L787.4 114.5L789.8 109.8L793.8 99.9L794.8 98.3L796.0 97.4L797.2 97.9L798.6 99.9L803.4 109.5L804.2 109.9L805.0 109.4L807.4 105.5L808.2 105.5L809.0 106.6L810.6 110.2L811.4 111.5L812.2 112.1L817.0 112.2L820.2 110.0L823.4 109.3L824.2 108.7L825.8 106.5L828.2 101.2L829.8 98.9L830.6 98.9L831.4 99.7L833.8 103.6L835.4 105.3L837.0 105.7L839.4 105.0L841.0 105.1L841.8 104.8L842.6 103.4L843.4 100.4L845.8 85.2L846.6 83.2L847.4 85.0L850.6 104.3L851.4 106.5L852.2 107.4L853.0 107.7L855.4 107.4L858.6 109.6L861.8 109.2L865.0 111.1L868.2 110.3L871.4 111.4L872.2 111.3L874.6 109.7L877.0 109.0L877.8 108.4L882.6 98.8L884.8 95.9L886.0 95.4L887.2 96.1L888.2 97.6L893.8 109.9L895.4 112.2L897.8 114.3L903.4 116.5L915.4 119.6L922.6 120.5L929.8 120.5L935.4 119.7L941.0 118.4L948.2 116.1L951.4 114.5L953.0 113.1L954.6 111.0L956.2 108.1L961.0 97.2L961.8 96.0L963.0 95.2L964.2 95.7L965.8 97.8L967.4 100.3L970.6 107.4L972.2 109.0L974.6 109.7L977.0 111.3L977.8 111.3L981.0 109.8L984.2 110.1L987.4 108.0L989.8 107.8L990.6 106.8L991.4 104.2L993.8 87.8L994.6 84.2L995.4 84.4L998.2 101.9L999.4 106.0L1000.2 107.0L1001.0 107.0L1002.6 106.5L1005.8 108.1L1008.2 107.7L1009.0 108.3L1011.4 111.3L1012.2 111.7L1013.8 111.9L1017.0 114.8L1018.6 115.1"/><path d="M677.0 114.0L678.6 104.7L679.3 101.7L679.9 101.0L680.5 102.2L681.0 104.5L682.6 115.3L683.4 119.4L684.2 121.5L685.0 122.0L686.6 121.8L689.0 123.7L689.8 123.8L693.0 120.6L695.4 120.3L698.6 115.4L701.0 114.5L701.8 113.4L703.4 106.8L705.8 92.7L706.6 91.4L707.4 93.3L710.0 108.3L711.4 111.9L712.2 112.5L714.6 112.5L715.4 112.2L716.2 111.4L718.6 105.6L719.4 104.2L720.2 103.9L721.0 104.8L723.4 109.9L724.2 110.7L729.0 112.5L732.2 112.5L735.4 114.1L737.0 114.1L738.6 112.6L741.0 108.6L741.8 107.9L742.6 107.9L745.0 109.5L745.8 109.5L746.6 108.9L750.6 102.1L751.4 101.6L752.0 101.6L753.0 102.2L753.8 103.4L759.4 117.3L761.0 120.0L762.6 121.8L765.0 123.1L768.2 123.8L773.8 124.0L780.2 123.6L784.2 122.4L785.8 121.2L787.4 119.2L789.8 114.4L793.8 104.0L794.8 102.4L796.0 101.5L797.2 102.0L798.6 103.8L802.6 112.8L803.4 113.9L804.2 114.2L805.0 113.6L807.4 110.2L808.2 110.2L811.4 115.2L813.0 115.9L814.6 116.0L816.2 115.6L819.4 113.1L823.4 111.3L825.8 108.4L829.0 101.9L829.8 100.8L830.6 100.7L831.4 101.6L833.8 106.4L835.4 108.1L836.2 108.4L838.6 108.2L841.0 108.8L841.8 108.4L842.6 107.2L843.4 104.7L845.8 90.9L846.6 88.2L847.4 88.9L849.8 103.6L850.6 107.6L851.4 109.9L852.2 110.8L854.6 111.3L857.8 113.3L861.0 113.2L864.2 115.1L867.4 114.5L870.6 115.7L873.8 114.2L876.2 114.0L877.8 112.5L881.0 105.8L884.2 100.4L885.0 99.5L886.0 99.2L887.2 100.0L888.2 101.5L893.8 114.3L895.4 116.7L897.8 118.8L902.6 120.8L914.6 123.9L922.6 125.0L929.8 125.0L935.4 124.2L941.0 122.9L948.2 120.6L951.4 119.0L953.0 117.6L954.6 115.4L956.2 112.4L961.0 101.1L961.8 99.9L963.0 99.1L964.2 99.5L965.0 100.3L966.6 102.7L970.6 111.5L976.2 115.4L977.0 115.5L980.2 114.2L982.6 114.6L983.4 114.4L986.6 112.4L989.0 112.3L989.8 111.6L990.6 109.7L991.4 106.4L993.8 91.4L994.6 89.1L995.4 90.2L998.2 107.1L999.4 111.5L1000.2 113.0L1002.6 115.6L1004.2 118.2L1005.0 119.0L1007.4 119.7L1009.8 121.9L1010.6 122.2L1011.4 122.1L1013.8 120.6L1016.2 120.9L1018.6 119.9"/><path d="M677.0 118.3L678.6 109.8L679.3 107.4L679.9 107.0L681.0 110.7L682.6 120.6L683.4 123.9L684.2 125.5L685.8 126.4L688.2 128.5L689.0 128.7L691.4 126.4L692.2 126.0L693.8 126.0L694.6 125.7L697.8 120.6L700.2 119.6L701.0 118.6L702.6 113.3L705.0 100.4L705.8 97.5L706.6 97.0L707.4 99.2L710.0 113.2L711.4 117.0L713.8 119.7L715.4 120.6L716.2 120.5L717.0 119.8L718.6 117.7L719.4 117.4L720.2 118.0L724.2 128.3L725.8 130.3L728.2 132.0L729.8 132.0L733.8 131.4L736.2 129.8L738.6 125.9L741.8 117.4L742.6 116.4L745.0 116.2L745.8 115.7L747.4 113.0L749.8 107.5L750.6 106.5L751.4 105.9L752.6 106.2L753.8 107.8L758.6 120.2L760.2 123.5L762.6 126.6L765.0 128.0L769.8 128.9L777.0 128.8L781.8 128.2L785.0 126.8L786.6 125.2L788.2 122.6L793.8 108.5L794.8 106.8L796.2 105.8L797.2 106.3L798.6 108.1L801.8 115.7L803.4 118.2L804.2 118.4L805.0 118.0L807.4 115.5L808.2 115.8L809.0 117.0L811.4 122.8L813.8 126.5L816.2 128.4L821.0 130.4L822.6 130.4L824.2 129.7L825.8 128.2L826.6 126.9L829.8 118.8L830.6 118.2L831.4 118.6L833.0 120.6L833.8 121.3L834.6 121.3L841.0 115.6L841.8 114.5L843.4 110.1L845.8 96.7L846.6 93.6L847.4 93.5L848.2 96.4L850.6 110.4L851.4 112.9L852.2 114.0L856.2 116.8L857.0 117.1L860.2 117.2L863.4 119.1L866.6 118.8L869.8 119.9L873.0 118.7L875.4 118.8L876.2 118.4L877.8 116.3L884.2 104.3L885.0 103.5L885.8 103.2L887.2 104.1L888.2 105.7L892.2 115.3L894.6 120.0L896.2 122.0L897.8 123.4L900.2 124.6L903.4 125.6L914.6 128.5L922.6 129.6L929.8 129.6L935.4 128.8L941.0 127.5L948.2 125.2L951.4 123.5L953.0 122.1L954.6 119.9L956.2 116.8L961.0 105.2L961.8 104.0L963.0 103.1L964.2 103.5L965.8 105.3L969.8 114.3L971.4 116.1L975.4 119.5L976.2 119.6L979.4 118.7L981.8 119.0L985.8 116.8L988.2 116.7L989.0 116.2L989.8 114.8L990.6 112.4L993.8 95.8L994.6 94.5L995.4 96.2L997.8 109.6L998.8 113.8L1000.2 116.5L1003.4 120.5L1004.2 121.2L1006.6 122.1L1009.8 125.1L1013.0 124.5L1015.4 125.3L1018.6 124.5"/><path d="M677.0 122.9L678.6 115.3L679.3 113.5L679.9 113.5L681.0 117.2L682.6 125.5L683.4 128.1L684.2 129.6L686.6 132.6L687.4 133.4L688.2 133.5L690.6 131.6L691.4 131.4L693.0 131.5L693.8 131.2L697.0 126.0L699.4 124.8L700.2 123.8L701.8 119.3L705.0 104.9L705.8 102.7L706.6 102.7L707.4 105.1L709.8 117.1L711.4 121.2L713.0 123.0L722.6 130.9L725.8 133.0L728.2 134.0L730.6 134.3L733.8 133.8L737.8 132.1L741.0 129.8L742.6 128.0L744.2 125.3L749.8 112.2L750.8 110.9L752.0 110.5L753.2 111.5L754.6 114.1L758.6 125.0L760.2 128.4L762.6 131.6L764.2 132.6L765.8 133.2L770.6 133.9L777.8 133.8L781.8 133.2L785.0 131.7L786.6 130.0L788.2 127.5L793.8 113.1L794.8 111.4L796.2 110.4L797.2 110.9L798.6 112.8L802.6 122.0L804.2 124.7L805.8 126.5L808.2 128.0L817.0 131.9L820.2 132.7L822.6 132.6L825.8 131.6L829.0 129.5L841.8 118.1L843.4 114.4L846.6 99.4L847.4 98.8L848.2 100.8L850.6 113.1L851.4 115.7L853.0 118.4L855.4 120.6L859.4 121.2L862.6 123.1L865.8 123.0L868.2 124.1L869.0 124.2L872.2 123.2L874.6 123.5L875.4 123.2L877.0 121.5L880.2 116.4L884.2 108.4L885.0 107.7L885.8 107.5L887.2 108.4L888.2 110.0L892.2 119.8L894.6 124.6L896.2 126.6L897.8 127.9L900.2 129.2L903.4 130.3L914.6 133.1L922.6 134.2L929.8 134.3L935.4 133.5L941.8 132.0L948.2 129.8L951.4 128.1L953.0 126.6L954.6 124.4L956.2 121.2L961.0 109.5L961.8 108.3L963.0 107.4L964.2 107.7L965.0 108.4L969.8 118.2L973.0 122.1L974.6 123.5L975.4 123.7L978.6 123.2L981.0 123.5L984.2 121.6L987.4 121.2L989.0 119.6L989.8 117.9L991.4 111.8L993.0 103.6L993.8 100.7L994.6 100.2L995.4 102.1L998.6 117.4L999.4 119.2L1002.6 123.3L1003.4 123.9L1005.8 124.9L1009.0 128.1L1012.2 128.4L1014.6 129.7L1017.0 129.1L1018.6 129.1"/><path d="M677.0 127.7L678.6 121.3L679.4 120.0L679.9 120.3L680.5 121.8L683.4 132.4L685.8 137.2L686.6 138.1L687.4 138.3L689.8 136.8L692.2 137.0L693.0 136.7L696.2 131.6L698.6 130.1L700.2 127.3L701.8 122.4L705.0 109.7L705.8 108.1L706.6 108.5L709.8 121.8L711.4 125.4L713.0 127.0L723.4 134.5L726.6 136.3L729.0 137.0L732.2 137.2L735.4 136.5L739.4 134.9L741.8 133.1L743.4 131.0L745.0 128.1L749.8 117.0L750.8 115.8L752.0 115.4L753.2 116.4L754.6 119.1L758.6 129.9L760.2 133.3L762.6 136.5L764.2 137.6L765.8 138.2L771.4 139.0L777.8 138.8L781.8 138.1L785.0 136.6L786.6 135.0L788.2 132.4L793.8 118.0L794.8 116.3L796.2 115.3L797.2 115.7L798.6 117.7L802.6 126.7L804.2 129.4L805.8 131.2L808.2 132.6L816.2 135.2L819.4 135.8L821.8 135.7L825.0 134.6L828.2 132.8L841.8 121.8L843.4 118.7L846.6 105.5L847.4 104.5L848.2 105.7L850.6 115.9L852.2 121.0L853.8 123.6L855.4 124.6L857.8 124.9L861.8 127.0L864.2 127.1L867.4 128.3L868.2 128.4L871.4 127.7L873.8 128.1L874.6 127.9L876.2 126.5L879.4 122.5L884.2 112.9L885.0 112.3L886.0 112.1L887.2 113.0L888.2 114.6L893.8 127.8L895.4 130.3L897.8 132.6L900.2 133.8L903.4 134.9L914.6 137.9L922.6 139.0L929.8 139.1L935.4 138.3L941.0 137.0L948.2 134.5L951.4 132.8L953.0 131.2L954.6 129.0L956.2 125.8L961.0 114.1L961.8 112.8L963.0 111.9L964.2 112.2L965.0 113.0L969.0 121.0L972.2 125.9L973.8 127.4L974.6 127.7L977.0 127.6L980.2 127.9L983.4 126.2L986.6 125.6L988.2 124.3L989.8 121.2L993.0 108.1L993.8 106.0L994.6 106.0L995.4 108.1L998.2 120.5L999.4 123.3L1001.0 125.4L1002.6 126.9L1005.0 128.1L1008.2 131.3L1011.4 132.2L1013.8 133.8L1016.2 133.6L1018.6 133.8"/><path d="M677.0 132.9L678.6 127.7L679.4 126.9L679.9 127.2L680.5 128.4L684.2 139.6L685.8 142.6L686.6 143.0L689.0 141.9L691.4 142.5L692.2 142.2L695.4 137.3L697.8 135.6L698.6 134.5L701.8 126.2L705.0 114.7L705.8 113.6L706.6 114.5L709.8 126.6L711.4 129.7L713.0 131.1L723.4 138.0L726.6 139.6L729.0 140.3L732.2 140.6L736.2 139.9L739.4 138.9L741.8 137.4L743.4 135.5L745.0 132.8L749.8 122.1L751.4 120.6L752.6 120.9L753.8 122.5L758.6 135.0L761.0 139.7L763.4 142.2L765.8 143.3L770.6 144.0L777.0 143.9L781.8 143.2L785.0 141.6L786.6 140.0L788.2 137.4L793.8 123.2L794.8 121.4L796.2 120.4L797.2 120.8L798.6 122.7L803.4 133.0L805.8 135.9L808.2 137.2L815.4 139.0L817.8 139.4L820.2 139.3L823.4 138.5L826.6 136.9L836.2 129.5L841.8 125.7L843.4 123.1L846.6 111.7L847.4 110.4L848.2 110.7L849.0 112.7L851.4 122.3L853.0 126.5L854.6 128.1L857.0 128.8L860.2 130.7L863.4 131.2L867.4 132.6L870.6 132.2L873.0 132.5L874.6 132.0L878.6 128.4L880.2 125.7L883.4 118.8L884.8 117.2L886.0 116.9L887.2 117.8L888.2 119.4L892.2 129.1L894.6 133.8L896.2 135.9L898.6 137.8L905.8 140.4L915.4 142.9L922.6 143.9L929.8 143.9L935.4 143.2L941.0 141.8L947.4 139.6L951.4 137.4L953.0 135.9L954.6 133.7L956.2 130.5L961.0 118.9L961.8 117.6L963.0 116.7L964.2 117.0L965.0 117.8L970.6 128.2L973.0 131.3L974.6 131.8L979.4 132.4L982.6 130.9L985.8 130.1L988.2 128.0L989.8 124.8L993.0 112.9L993.8 111.4L994.6 111.9L995.4 114.2L998.2 125.1L1000.2 128.7L1001.8 130.2L1004.2 131.5L1007.4 134.6L1009.8 135.6L1013.0 137.9L1018.6 138.6"/><path d="M677.0 138.2L678.6 134.3L679.3 133.7L679.9 133.9L681.1 136.0L684.2 145.3L685.0 146.9L685.8 147.5L688.2 146.9L690.6 147.9L691.4 147.6L694.6 143.1L697.0 141.3L697.8 140.1L701.8 130.6L705.0 119.8L705.8 119.3L706.6 120.7L709.4 130.3L711.4 134.0L713.0 135.3L721.8 140.7L726.6 143.3L729.8 144.2L733.0 144.3L737.8 143.6L741.0 142.4L742.6 141.1L744.2 139.0L749.8 127.4L750.8 126.3L752.0 126.0L753.2 127.0L754.6 129.6L759.4 141.9L761.0 144.7L762.6 146.6L765.0 148.0L768.2 148.8L773.0 149.1L778.6 148.8L783.4 147.6L785.0 146.7L786.6 145.0L789.0 140.8L793.8 128.5L794.8 126.9L796.0 125.9L797.2 126.2L798.6 128.0L803.4 137.9L805.8 140.7L807.4 141.6L809.8 142.2L817.0 143.4L820.2 143.2L823.4 142.1L826.6 140.4L836.2 133.1L841.8 129.6L842.8 128.5L844.0 126.0L846.6 117.8L847.4 116.3L848.2 116.1L849.0 117.5L851.4 126.1L853.0 130.3L854.6 132.0L859.4 134.5L866.6 136.8L872.2 136.9L874.6 136.3L877.0 134.8L878.6 133.0L883.4 123.8L884.8 122.3L886.0 121.9L887.2 122.8L888.2 124.4L892.2 133.9L894.6 138.6L896.2 140.6L898.6 142.5L905.8 145.2L915.4 147.8L922.6 148.8L929.8 148.9L935.4 148.1L941.0 146.6L947.4 144.4L951.4 142.2L953.0 140.7L954.6 138.4L956.2 135.3L961.0 123.9L961.8 122.6L963.0 121.7L964.2 122.0L965.0 122.8L970.6 133.0L973.0 135.5L977.0 136.8L978.6 136.8L985.0 134.6L987.4 132.9L989.0 130.6L990.6 126.1L992.2 120.2L993.0 118.0L993.8 117.3L994.6 118.2L995.4 120.4L998.2 129.7L1000.2 132.8L1003.4 135.1L1006.6 138.0L1012.2 141.8L1017.0 143.2L1018.6 143.3"/><path d="M677.0 143.8L678.6 140.9L679.3 140.4L679.9 140.5L681.1 142.1L683.4 149.0L684.2 150.8L685.0 151.8L687.4 151.8L689.8 153.2L690.6 153.0L693.8 149.0L696.2 147.1L697.0 145.8L701.0 137.2L704.2 126.6L705.0 125.3L705.8 125.5L709.4 135.2L711.4 138.3L722.6 145.2L726.6 147.2L729.8 148.1L733.0 148.4L738.6 147.7L741.0 146.9L742.6 145.7L744.2 143.8L749.8 133.0L750.8 131.9L752.0 131.7L753.2 132.7L754.6 135.2L759.4 147.2L761.0 149.9L762.6 151.7L765.0 153.1L768.2 153.9L773.0 154.2L778.6 153.9L783.4 152.7L785.0 151.7L786.6 150.2L789.0 146.1L793.8 134.2L794.8 132.5L796.0 131.6L797.2 131.8L798.6 133.5L803.4 142.9L805.8 145.5L807.4 146.4L809.8 146.9L816.2 147.6L819.4 147.4L821.8 146.7L825.0 145.2L836.2 136.9L841.8 133.7L842.8 132.7L844.0 130.7L846.6 123.8L847.4 122.3L848.2 121.9L849.0 122.9L852.2 132.2L853.8 135.1L856.2 137.1L861.8 139.6L865.8 140.9L869.0 141.3L873.0 141.2L875.4 140.5L877.0 139.4L878.6 137.6L884.2 128.0L885.0 127.3L886.0 127.2L887.2 128.1L888.2 129.6L892.2 138.8L894.6 143.4L896.2 145.4L898.6 147.3L905.8 150.1L915.4 152.7L922.6 153.8L929.8 153.9L935.4 153.1L941.0 151.6L947.4 149.2L951.4 147.0L953.0 145.5L954.6 143.3L956.2 140.2L961.0 129.1L961.8 127.9L963.0 127.0L964.2 127.2L965.0 127.9L969.8 136.4L971.4 138.6L973.0 140.0L975.4 140.9L977.8 141.2L981.0 140.5L984.2 139.1L986.6 137.8L988.2 136.0L989.8 132.5L992.2 125.1L993.0 123.7L993.8 123.5L994.6 124.5L997.8 133.4L998.8 135.3L1000.2 136.9L1011.4 145.6L1015.4 147.5L1018.6 148.1"/><path d="M677.0 149.6L678.6 147.4L679.3 147.0L679.9 147.1L681.0 148.5L683.4 154.7L684.2 155.9L686.6 156.6L689.0 158.3L689.8 158.3L693.0 154.8L695.4 153.0L696.2 151.6L701.0 141.8L704.2 131.9L705.0 131.3L705.8 132.1L706.6 133.6L709.4 140.1L711.4 142.7L722.6 149.4L727.4 151.6L730.6 152.5L733.0 152.6L738.6 152.2L741.8 151.1L743.4 149.7L745.0 147.6L749.8 138.8L750.8 137.8L752.0 137.6L753.2 138.6L754.6 141.0L759.4 152.5L761.0 155.1L762.6 156.8L765.0 158.3L768.2 159.1L773.0 159.4L778.6 159.0L783.4 157.8L785.0 156.9L786.6 155.3L789.0 151.4L793.8 140.0L794.8 138.4L796.0 137.5L797.2 137.7L798.6 139.3L803.4 148.0L805.8 150.4L809.0 151.5L816.2 152.0L818.6 151.9L821.8 150.9L825.0 149.2L835.4 141.3L842.6 137.1L844.2 135.0L847.4 128.4L848.2 127.9L849.0 128.4L849.8 129.8L852.2 136.1L853.0 137.8L854.6 140.1L857.0 141.7L861.0 143.7L864.2 144.9L867.4 145.6L873.0 145.6L876.2 144.6L878.6 142.3L883.4 134.3L884.8 132.9L886.0 132.7L887.2 133.6L888.2 135.0L893.8 147.0L895.4 149.3L897.0 150.9L900.2 152.9L906.6 155.3L913.0 157.1L919.4 158.4L927.4 159.0L933.8 158.4L941.8 156.2L949.8 152.8L952.2 151.1L954.6 148.2L956.2 145.2L961.0 134.5L961.8 133.4L963.0 132.5L964.2 132.6L965.0 133.3L969.8 141.2L971.4 143.2L973.0 144.5L974.6 145.2L977.0 145.6L979.4 145.4L981.8 144.6L985.0 143.0L987.4 141.1L989.0 138.5L992.2 130.5L993.0 129.6L993.8 129.7L994.6 130.7L997.8 138.1L1000.2 141.1L1012.2 150.7L1015.4 152.3L1018.6 152.9"/><path d="M677.0 155.6L678.6 153.9L679.3 153.6L679.9 153.8L681.0 155.3L683.4 160.0L685.8 161.4L688.2 163.3L689.0 163.5L689.8 163.0L691.4 161.4L694.6 159.0L697.8 152.4L700.2 148.4L703.4 138.9L704.2 137.7L705.0 137.8L706.6 139.9L709.4 144.9L711.4 147.1L725.0 154.9L728.2 156.2L731.4 156.9L739.4 156.6L741.0 156.2L742.6 155.3L745.0 152.7L749.8 144.8L750.8 143.9L752.0 143.8L753.2 144.7L754.6 147.0L759.4 157.9L761.0 160.4L762.6 162.0L765.0 163.4L768.2 164.2L773.0 164.6L777.8 164.3L781.0 163.7L783.4 163.0L785.0 162.0L786.6 160.6L789.0 156.8L793.8 146.1L794.8 144.6L796.0 143.7L797.2 143.8L798.6 145.2L803.4 153.2L805.8 155.3L809.0 156.2L816.2 156.6L818.6 156.3L821.0 155.5L824.2 153.9L835.4 145.3L842.6 141.3L844.2 139.6L847.4 134.5L848.2 134.0L849.0 134.2L849.8 135.2L853.0 141.9L855.4 144.9L857.8 146.4L862.6 148.7L865.8 149.8L868.2 150.2L873.8 150.0L875.4 149.6L877.0 148.7L879.4 146.1L883.4 139.8L884.8 138.6L886.0 138.4L887.2 139.3L888.2 140.6L893.8 152.0L895.4 154.2L897.8 156.4L901.8 158.4L909.0 161.0L914.6 162.5L920.2 163.5L928.2 164.0L934.6 163.2L942.6 160.9L949.8 157.7L952.2 156.0L954.6 153.1L961.0 140.2L961.8 139.0L963.0 138.2L964.2 138.3L965.0 138.9L969.8 146.0L971.4 147.9L973.0 149.1L974.6 149.8L977.0 150.1L981.0 149.3L985.0 147.4L987.4 145.3L989.0 142.7L991.4 137.5L992.2 136.2L993.0 135.6L993.8 135.9L994.6 136.8L997.8 142.8L1000.2 145.4L1012.2 155.4L1015.4 157.1L1018.6 157.7"/><path d="M677.0 161.6L678.6 160.4L679.3 160.4L679.9 160.7L682.6 164.5L685.0 166.0L687.4 168.3L688.2 168.5L689.0 168.2L690.6 167.0L693.0 165.8L694.6 163.7L697.0 158.6L699.4 154.8L702.6 145.9L703.4 144.6L704.2 144.1L705.0 144.4L706.6 145.8L709.4 149.8L711.4 151.5L725.0 159.3L728.2 160.7L731.4 161.4L739.4 161.3L742.6 160.3L745.0 158.0L749.8 151.0L750.8 150.3L752.0 150.2L753.2 151.1L754.6 153.3L759.4 163.4L761.0 165.7L762.6 167.3L765.0 168.6L768.2 169.4L773.0 169.8L777.8 169.5L781.0 168.9L783.4 168.1L785.0 167.3L786.6 165.8L789.0 162.4L793.8 152.4L794.8 151.0L796.0 150.1L797.2 150.2L798.6 151.4L803.4 158.4L805.8 160.3L809.0 161.1L817.8 161.0L820.2 160.3L823.4 158.7L836.2 148.8L842.8 145.4L844.6 143.8L847.4 140.4L848.2 140.0L849.0 140.1L849.8 140.7L853.8 147.4L856.2 149.7L862.6 153.2L865.8 154.3L868.2 154.7L873.8 154.6L877.0 153.4L879.4 151.1L883.4 145.5L884.8 144.4L886.0 144.3L887.2 145.2L888.2 146.5L893.8 157.1L895.4 159.2L897.8 161.3L901.8 163.3L909.0 166.0L914.6 167.5L920.2 168.5L928.2 169.0L934.6 168.2L942.6 165.9L949.8 162.6L952.2 160.9L954.6 158.1L961.0 146.0L961.8 144.9L963.0 144.1L964.2 144.1L965.0 144.6L969.8 151.0L972.2 153.3L974.6 154.3L977.8 154.6L981.8 153.4L985.8 151.1L988.2 148.5L991.4 142.9L992.2 142.0L993.0 141.7L993.8 142.0L994.6 142.8L998.8 148.5L1010.6 158.8L1014.6 161.5L1017.0 162.4L1018.6 162.6"/><path d="M677.0 167.6L678.6 167.0L679.4 167.2L681.7 169.3L684.2 170.8L686.6 173.2L687.4 173.4L692.2 171.8L693.8 169.8L696.2 164.8L698.6 161.1L702.6 151.5L703.4 150.7L704.2 150.6L705.8 150.9L706.6 151.4L709.0 154.2L710.6 155.5L723.4 163.0L727.4 164.9L731.4 166.0L739.4 166.1L742.6 165.3L745.0 163.4L749.8 157.4L750.8 156.8L752.0 156.8L753.2 157.7L754.6 159.7L759.4 168.9L761.0 171.1L762.6 172.5L765.0 173.8L769.0 174.7L773.0 175.0L777.8 174.7L783.4 173.3L786.6 171.2L789.0 168.0L793.8 158.9L794.8 157.5L796.0 156.7L797.2 156.7L798.6 157.7L803.4 163.7L805.8 165.4L809.0 165.9L817.8 165.7L820.2 164.9L823.4 163.2L836.2 152.9L838.6 151.5L843.4 149.3L848.2 145.9L849.8 146.4L853.8 151.7L857.0 154.6L863.4 157.9L868.2 159.2L873.8 159.2L877.0 158.2L879.4 156.2L883.4 151.4L884.8 150.5L886.0 150.5L887.2 151.2L888.2 152.5L893.8 162.2L895.4 164.2L897.8 166.2L901.8 168.2L909.0 171.0L914.6 172.5L920.2 173.5L928.2 173.9L934.6 173.2L941.8 171.2L949.0 168.0L952.2 165.8L954.6 163.2L961.0 152.0L963.0 150.2L964.2 150.2L965.8 151.2L969.8 156.0L972.2 158.0L974.6 158.9L977.8 159.1L981.0 158.2L985.0 156.1L987.4 153.9L991.4 148.5L993.0 147.8L994.6 148.6L998.2 152.4L1003.4 156.6L1012.2 164.8L1015.4 166.7L1018.6 167.5"/><path d="M677.0 173.5L678.6 173.4L681.0 174.7L682.6 175.1L685.8 178.0L686.6 178.3L691.4 177.6L693.0 175.8L695.4 171.2L697.8 167.5L701.8 158.3L703.4 157.0L705.0 156.4L706.6 156.9L710.0 159.7L724.2 168.0L728.2 169.8L731.4 170.7L739.4 170.9L742.6 170.3L745.0 168.8L749.8 164.0L750.8 163.6L752.0 163.6L753.2 164.5L754.6 166.3L759.4 174.6L761.0 176.5L762.6 177.9L765.0 179.1L769.0 180.0L773.0 180.3L777.8 179.9L783.4 178.6L786.6 176.6L789.0 173.7L793.8 165.5L794.8 164.3L796.0 163.5L797.2 163.4L798.6 164.2L803.4 169.1L805.8 170.4L809.0 170.8L817.8 170.4L821.0 169.2L824.2 167.2L833.8 158.9L837.0 156.5L840.2 154.9L848.2 151.7L849.0 151.7L850.6 152.6L854.6 157.0L858.6 159.9L864.2 162.8L868.2 163.8L873.0 163.8L876.2 163.3L878.6 162.0L883.4 157.4L884.8 156.7L886.0 156.8L887.2 157.5L888.2 158.6L893.8 167.4L895.4 169.2L897.8 171.1L901.8 173.2L908.2 175.7L913.8 177.3L919.4 178.3L927.4 178.8L933.8 178.3L940.2 176.7L947.4 173.8L951.4 171.4L953.8 169.3L956.2 166.1L961.0 158.2L963.0 156.5L964.2 156.4L965.8 157.2L969.8 161.2L972.2 162.8L974.6 163.5L977.8 163.7L981.0 162.7L984.2 161.0L986.6 159.2L990.6 154.8L992.2 153.8L993.0 153.7L994.6 154.2L1001.8 159.6L1009.8 167.4L1013.0 170.2L1016.2 171.9L1018.6 172.4"/><path d="M677.0 179.2L681.8 180.3L685.0 182.9L685.8 183.2L688.2 183.0L690.6 183.3L692.2 181.9L697.0 173.9L700.2 166.4L701.8 164.1L704.2 162.2L705.8 161.9L710.6 164.6L712.2 165.1L713.0 165.0L713.8 164.5L714.6 163.3L717.0 157.3L717.8 156.6L718.6 157.6L721.0 166.3L722.6 170.5L724.2 172.5L726.6 173.8L729.0 174.6L730.6 174.1L732.2 171.3L733.8 167.1L734.6 165.8L735.4 165.8L736.2 167.1L738.6 173.3L740.2 175.2L741.8 175.5L743.4 175.2L745.8 173.8L749.0 171.2L750.6 170.5L751.4 170.5L752.6 171.0L753.8 172.1L759.4 180.3L761.0 182.0L763.4 183.7L766.6 184.8L770.6 185.4L774.6 185.5L779.4 184.9L783.4 183.8L786.6 182.0L789.0 179.4L793.8 172.3L794.8 171.3L796.2 170.4L797.2 170.4L798.6 170.9L802.6 174.1L805.0 175.3L807.4 175.7L811.4 175.4L813.0 174.8L813.8 174.0L814.6 172.7L817.0 166.4L817.8 165.2L818.6 165.3L821.8 171.4L822.6 171.9L824.2 171.6L827.4 169.0L829.8 166.2L831.4 162.5L833.8 153.0L834.6 150.7L835.4 150.1L836.2 151.1L838.6 156.9L839.4 158.0L840.2 158.4L841.8 158.4L847.4 157.2L851.4 157.7L852.2 157.3L853.0 156.4L855.4 152.5L856.2 152.8L857.0 154.3L860.2 163.9L861.8 165.9L865.0 167.5L866.6 167.7L867.4 167.3L868.2 166.3L870.6 160.4L871.4 158.8L872.2 158.5L873.0 159.5L875.4 165.5L876.2 166.7L877.0 167.2L878.6 167.0L884.2 163.2L886.0 163.2L888.2 164.9L894.6 173.5L896.2 174.9L897.8 175.7L899.4 175.6L900.2 175.0L903.4 170.3L904.2 169.6L905.0 169.5L905.8 170.3L906.6 171.6L909.0 177.3L910.6 180.0L913.0 181.8L916.2 182.6L923.4 183.2L930.6 183.3L936.2 182.6L941.0 181.4L943.4 179.9L945.0 177.8L948.2 170.2L949.8 167.5L950.6 167.2L951.4 167.5L953.8 170.3L954.6 170.8L955.4 170.9L957.0 169.9L961.0 164.5L963.0 162.9L965.0 162.9L969.0 165.6L969.8 165.9L970.6 165.7L971.4 164.9L973.8 159.5L974.6 158.3L975.4 158.4L976.2 159.8L978.6 165.7L979.4 166.7L980.2 167.0L981.0 166.9L982.6 165.3L983.4 163.6L985.8 155.8L986.6 153.9L987.4 153.2L988.2 153.8L989.8 156.7L991.4 158.6L995.4 159.9L999.4 162.2L1003.4 165.5L1009.8 172.1L1013.0 175.0L1016.2 176.8L1018.6 177.3"/><path d="M677.0 184.4L681.7 185.5L685.0 188.0L687.4 188.1L689.8 188.9L690.6 188.6L692.2 186.6L696.2 180.4L700.2 171.6L703.4 168.0L705.0 167.1L711.4 169.4L713.0 169.5L713.8 169.0L714.6 167.8L717.0 161.9L717.8 161.2L718.6 162.1L721.0 170.9L722.6 175.2L724.2 177.1L726.6 178.6L729.0 179.4L730.6 178.8L732.2 176.1L733.8 171.9L734.6 170.6L735.4 170.6L736.2 171.9L738.6 178.2L740.2 180.2L741.8 180.6L743.4 180.5L745.0 180.0L749.0 177.9L751.4 177.6L753.8 179.1L760.2 186.8L763.4 189.0L766.6 190.1L770.6 190.7L774.6 190.8L779.4 190.2L783.4 189.1L786.6 187.4L789.0 185.2L793.8 179.3L796.2 177.6L797.2 177.4L798.6 177.7L803.4 180.1L805.8 180.7L810.6 180.4L813.0 179.7L814.6 177.5L817.0 171.2L817.8 170.0L818.6 170.1L821.8 176.1L822.6 176.6L824.2 176.2L827.4 173.5L829.8 170.6L831.4 166.8L833.8 157.3L834.6 155.0L835.4 154.4L836.2 155.3L838.6 161.1L839.4 162.2L840.2 162.6L845.8 162.2L851.4 162.8L853.0 161.2L854.6 158.0L855.4 157.0L856.2 157.2L857.0 158.8L860.2 168.3L861.8 170.4L865.0 172.1L866.6 172.2L867.4 171.9L868.2 170.9L870.6 165.0L871.4 163.4L872.2 163.1L873.0 164.1L875.4 170.2L876.2 171.5L877.0 172.1L878.6 172.2L884.2 169.7L886.0 169.8L888.2 171.3L894.6 178.7L896.2 179.9L897.8 180.6L899.4 180.5L900.2 180.0L903.4 175.4L904.2 174.6L905.0 174.6L905.8 175.3L906.6 176.7L909.0 182.3L910.6 184.9L912.2 186.2L914.6 186.9L933.0 187.4L937.8 187.0L941.8 185.9L943.4 184.9L945.0 182.8L948.2 175.2L949.8 172.5L950.6 172.2L951.4 172.5L953.8 175.4L955.4 176.3L957.0 175.5L961.0 170.9L963.0 169.5L965.0 169.3L969.8 171.1L970.6 170.8L971.4 169.9L973.8 164.2L974.6 163.0L975.4 163.1L976.2 164.4L978.6 170.3L979.4 171.3L980.2 171.6L981.0 171.4L982.6 169.8L983.4 168.1L985.8 160.3L986.6 158.5L987.4 157.9L988.2 158.6L989.8 161.8L991.4 164.0L992.2 164.4L996.4 165.1L999.4 166.6L1003.4 169.9L1009.8 176.9L1013.0 179.8L1016.2 181.7L1018.6 182.3"/><path d="M677.0 189.5L680.5 190.1L684.2 192.7L686.6 193.2L689.0 194.2L689.8 194.1L691.4 192.7L694.6 188.3L699.4 178.1L703.4 172.8L704.2 172.3L705.0 172.2L712.2 174.1L713.0 174.0L713.8 173.5L714.6 172.3L717.0 166.4L717.8 165.8L718.6 166.7L721.0 175.5L722.6 179.9L724.2 181.8L726.6 183.3L729.0 184.2L730.6 183.7L732.2 180.9L733.8 176.7L734.6 175.4L735.4 175.4L736.2 176.8L738.6 183.1L739.4 184.4L741.0 185.5L743.4 185.8L749.0 184.7L751.4 184.8L753.8 186.2L760.2 192.5L764.2 194.7L767.4 195.6L771.4 196.1L775.4 196.1L779.4 195.5L783.4 194.4L786.6 192.9L789.0 191.1L793.8 186.3L796.2 184.8L798.6 184.6L803.4 185.7L805.8 185.8L811.4 185.2L813.0 184.6L814.6 182.4L817.0 176.0L817.8 174.8L818.6 174.9L821.8 180.8L822.6 181.3L824.2 180.9L827.4 178.1L829.8 175.1L831.4 171.3L833.8 161.6L834.6 159.3L835.4 158.6L836.2 159.6L838.6 165.4L839.4 166.4L840.2 166.8L845.2 166.6L849.8 167.7L851.4 167.6L853.0 165.8L854.6 162.5L855.4 161.5L856.2 161.6L857.0 163.2L860.2 172.8L861.8 174.9L865.0 176.7L866.6 176.8L867.4 176.5L868.2 175.5L870.6 169.6L871.4 168.1L872.2 167.7L873.0 168.8L875.4 175.0L877.0 177.1L878.6 177.4L884.2 176.2L886.0 176.5L888.2 177.9L894.6 183.9L897.0 185.4L898.6 185.7L900.2 185.0L903.4 180.4L904.2 179.7L905.0 179.6L905.8 180.3L906.6 181.7L909.8 188.6L911.4 190.3L913.0 191.0L925.0 190.5L937.8 191.2L941.8 190.7L943.4 189.8L945.0 187.8L948.2 180.2L949.8 177.5L950.6 177.2L951.4 177.6L953.8 180.6L955.4 181.6L957.0 181.1L961.0 177.5L963.4 176.0L965.0 175.8L969.8 176.4L970.6 175.9L971.4 174.9L973.8 169.0L974.6 167.7L975.4 167.8L976.2 169.1L978.6 174.9L979.4 175.9L980.2 176.2L981.0 176.0L982.6 174.3L983.4 172.6L985.8 164.9L986.6 163.0L987.4 162.5L988.2 163.3L989.8 166.7L991.4 169.0L993.0 169.5L996.4 169.7L999.4 171.0L1003.4 174.4L1009.8 181.6L1013.0 184.7L1016.2 186.7L1018.6 187.3"/><path d="M677.0 194.6L679.9 195.1L683.4 197.3L688.2 199.4L689.8 199.2L691.4 197.8L693.8 194.8L698.6 184.5L702.6 178.1L703.4 177.3L705.0 176.9L708.2 177.3L711.4 178.4L713.0 178.5L713.8 178.0L714.6 176.9L717.0 171.0L717.8 170.4L718.6 171.4L721.0 180.2L722.6 184.6L724.2 186.6L726.6 188.1L729.0 189.0L730.6 188.5L732.2 185.8L733.8 181.6L734.6 180.3L735.4 180.3L736.2 181.6L738.6 188.0L739.4 189.4L741.0 190.6L743.4 191.1L749.0 191.6L751.4 192.2L753.8 193.5L760.2 198.2L762.6 199.4L765.8 200.5L772.2 201.5L775.4 201.4L779.4 200.9L783.4 199.8L786.6 198.4L793.8 193.5L796.6 192.0L798.6 191.6L806.6 190.9L811.4 190.1L813.0 189.5L814.6 187.3L817.0 180.9L817.8 179.7L818.6 179.8L821.8 185.6L822.6 186.1L824.2 185.6L827.4 182.7L829.8 179.6L831.4 175.7L833.8 166.0L834.6 163.7L835.4 163.0L836.2 163.9L838.6 169.6L839.4 170.6L840.2 171.0L845.0 170.9L849.8 172.0L851.4 172.0L853.0 170.2L854.6 166.9L855.4 165.8L856.2 166.1L857.0 167.6L860.2 177.3L861.8 179.5L865.0 181.3L866.6 181.4L867.4 181.1L868.2 180.2L870.6 174.3L871.4 172.7L872.2 172.4L873.0 173.5L875.4 179.8L877.0 182.0L878.6 182.6L883.4 182.7L886.0 183.3L888.2 184.5L893.8 188.6L897.0 190.5L898.6 190.8L900.2 190.0L903.4 185.5L904.2 184.8L905.0 184.8L905.8 185.6L906.6 187.1L909.8 195.0L912.2 198.3L914.6 200.0L917.8 201.6L923.4 203.4L927.4 203.6L931.4 202.9L936.2 200.8L941.8 197.3L943.4 195.8L945.0 193.3L948.2 185.3L949.8 182.5L950.6 182.2L951.4 182.6L954.6 186.6L956.2 187.1L957.8 186.4L961.0 184.1L963.4 182.8L969.8 181.8L971.4 179.9L973.8 173.7L974.6 172.4L975.4 172.4L976.2 173.8L978.6 179.6L979.4 180.5L980.2 180.8L981.0 180.6L982.6 178.9L984.2 174.8L985.8 169.4L986.6 167.5L987.4 167.0L988.2 167.8L989.8 171.2L991.4 173.4L993.0 173.9L996.4 174.0L999.4 175.4L1003.4 178.9L1009.8 186.4L1013.0 189.6L1016.2 191.7L1018.6 192.3"/><path d="M677.0 199.7L679.9 200.3L687.4 204.4L689.0 204.5L690.6 203.8L692.2 202.3L693.8 199.8L699.4 187.8L702.6 182.6L703.4 181.9L705.0 181.4L707.4 181.6L712.2 183.1L713.0 183.0L713.8 182.6L714.6 181.4L717.0 175.7L717.8 175.0L718.6 176.0L721.0 184.9L722.6 189.3L724.2 191.4L726.6 193.0L729.0 193.9L730.6 193.4L732.2 190.7L733.8 186.5L734.6 185.2L735.4 185.2L736.2 186.6L738.6 193.0L739.4 194.4L741.0 195.7L749.0 198.5L760.2 203.9L765.8 205.9L772.2 206.9L775.4 206.8L779.4 206.2L786.6 204.0L796.2 199.6L801.0 197.7L806.6 196.0L811.4 195.1L813.0 194.4L814.6 192.2L817.0 185.8L817.8 184.6L818.6 184.6L821.8 190.4L822.6 190.9L824.2 190.3L827.4 187.3L829.8 184.1L831.4 180.2L833.8 170.3L834.6 168.0L835.4 167.3L836.2 168.2L838.6 173.9L839.4 174.9L840.2 175.3L845.0 175.1L849.8 176.3L851.4 176.3L853.0 174.5L854.6 171.2L855.4 170.2L856.2 170.5L857.0 172.0L860.2 181.8L861.8 184.0L865.0 185.9L866.6 186.1L867.4 185.7L868.2 184.8L870.6 178.9L871.4 177.4L872.2 177.1L873.0 178.1L875.4 184.6L877.0 187.0L878.6 187.9L886.6 190.4L897.0 195.5L898.6 195.8L900.2 195.0L903.4 190.6L904.2 189.9L905.0 189.9L906.6 192.2L909.8 200.0L911.4 202.4L913.0 203.8L915.4 205.1L919.4 206.6L922.6 207.3L927.4 207.7L931.4 207.1L936.2 205.4L941.8 202.2L943.4 200.8L945.0 198.4L948.2 190.4L949.8 187.6L950.6 187.3L951.4 187.7L954.6 191.9L956.2 192.7L957.8 192.4L963.6 189.6L969.0 187.6L970.6 186.3L971.4 185.0L973.8 178.5L974.6 177.2L975.4 177.1L976.2 178.4L978.6 184.2L979.4 185.1L980.2 185.4L981.0 185.2L982.6 183.4L984.2 179.3L985.8 173.9L986.6 172.0L987.4 171.4L988.2 172.2L989.8 175.5L991.4 177.8L992.2 178.2L996.4 178.4L999.4 179.8L1003.4 183.4L1009.8 191.2L1013.0 194.5L1016.2 196.7L1018.6 197.3"/><path d="M677.0 204.8L679.9 205.5L685.0 208.5L687.4 209.6L689.0 209.8L690.6 209.2L692.2 207.5L693.8 204.9L699.4 192.4L701.0 189.4L702.6 187.2L704.2 186.0L705.8 185.9L713.0 187.6L713.8 187.1L714.6 186.0L717.0 180.3L717.8 179.7L718.6 180.7L721.0 189.6L722.6 194.1L724.2 196.2L726.6 197.8L729.0 198.8L730.6 198.3L732.2 195.6L733.8 191.4L734.6 190.1L735.4 190.2L736.2 191.5L738.6 198.0L739.4 199.3L741.0 200.7L748.2 203.5L760.2 209.3L765.8 211.2L772.2 212.2L775.4 212.2L779.4 211.6L786.6 209.3L802.6 202.4L806.6 201.1L811.4 200.0L813.0 199.4L814.6 197.2L817.0 190.7L817.8 189.5L818.6 189.6L821.8 195.3L822.6 195.7L824.2 195.1L827.4 191.9L829.8 188.7L831.4 184.7L833.8 174.8L834.6 172.4L835.4 171.7L836.2 172.5L838.6 178.2L839.4 179.1L840.2 179.5L845.0 179.3L849.8 180.6L851.4 180.6L853.0 178.9L854.6 175.6L855.4 174.7L856.2 174.9L857.0 176.5L860.2 186.4L861.8 188.6L865.0 190.5L866.6 190.7L867.4 190.4L868.2 189.5L870.6 183.6L871.4 182.1L872.2 181.8L873.0 182.8L875.4 189.3L877.0 191.7L878.6 192.6L887.2 195.8L897.0 200.5L898.6 200.8L900.2 200.1L903.4 195.7L904.2 195.0L905.0 195.0L906.6 197.3L909.8 205.1L911.4 207.5L913.0 208.8L915.4 210.0L919.4 211.3L922.6 212.0L927.4 212.3L932.2 211.6L937.0 209.9L941.8 207.3L943.4 205.9L945.0 203.5L948.2 195.5L949.8 192.6L950.6 192.3L951.4 192.8L954.6 196.9L956.2 197.7L957.8 197.4L963.6 194.6L969.0 192.4L970.6 191.1L971.4 189.7L973.8 183.2L974.6 181.9L975.4 181.8L976.2 183.1L978.6 188.9L979.4 189.8L980.2 190.0L981.0 189.8L982.6 188.0L984.2 183.9L985.8 178.4L986.6 176.5L987.4 175.9L988.2 176.6L989.8 180.0L991.4 182.2L992.2 182.5L996.4 182.7L999.4 184.2L1003.4 188.0L1009.8 196.0L1013.0 199.5L1016.2 201.7L1018.6 202.3"/><path d="M677.0 210.0L679.9 210.7L685.0 213.8L687.4 214.9L689.0 215.1L690.6 214.5L692.2 212.7L693.8 210.0L699.4 197.1L701.0 194.0L702.6 191.7L704.2 190.5L705.8 190.4L713.0 192.2L713.8 191.7L714.6 190.6L717.0 184.9L717.8 184.4L718.6 185.4L721.0 194.4L722.6 198.9L724.2 201.0L727.4 203.1L729.0 203.7L730.6 203.3L732.2 200.6L733.8 196.4L734.6 195.1L735.4 195.1L736.2 196.5L738.6 203.0L739.4 204.3L741.0 205.7L748.2 208.6L760.2 214.6L765.8 216.6L772.2 217.7L775.4 217.6L779.4 216.9L786.6 214.6L802.6 207.4L806.6 206.1L811.4 205.0L813.0 204.3L814.6 202.1L817.0 195.7L817.8 194.5L818.6 194.5L821.8 200.1L822.6 200.5L824.2 199.9L827.4 196.6L829.8 193.3L831.4 189.2L833.8 179.2L834.6 176.8L835.4 176.1L836.2 176.9L838.6 182.5L839.4 183.4L840.2 183.8L845.0 183.6L849.8 184.9L851.4 185.0L853.0 183.3L854.6 180.0L855.4 179.1L856.2 179.3L857.0 181.0L860.2 190.9L861.8 193.2L865.0 195.1L866.6 195.4L867.4 195.1L868.2 194.2L870.6 188.3L871.4 186.7L872.2 186.4L873.0 187.5L875.4 194.0L877.0 196.5L878.6 197.4L887.2 200.6L897.0 205.5L898.6 205.9L900.2 205.2L903.4 200.8L904.2 200.1L905.0 200.2L906.6 202.5L909.8 210.3L911.4 212.6L913.0 213.9L914.6 214.7L921.8 216.9L926.6 217.3L931.4 216.9L937.0 215.0L941.8 212.5L943.4 211.1L945.0 208.6L948.2 200.6L949.8 197.7L950.6 197.4L951.4 197.8L954.6 201.9L956.2 202.6L957.8 202.3L963.6 199.4L969.0 197.2L970.6 195.8L971.4 194.4L973.8 187.9L974.6 186.5L975.4 186.5L976.2 187.8L978.6 193.5L979.4 194.4L980.2 194.7L981.0 194.4L982.6 192.6L984.2 188.4L985.8 182.9L986.6 181.0L987.4 180.4L988.2 181.1L989.8 184.4L991.4 186.6L992.2 186.9L996.4 187.1L999.4 188.6L1003.4 192.5L1009.8 200.9L1013.0 204.4L1016.2 206.7L1018.6 207.4"/><path d="M677.0 215.2L679.9 215.9L685.0 219.1L687.4 220.2L689.0 220.4L690.6 219.8L692.2 218.0L693.8 215.2L701.0 198.6L703.4 195.5L704.2 195.0L705.8 194.9L709.0 195.5L712.2 197.0L715.4 199.1L725.0 206.6L729.8 209.1L732.2 209.7L738.6 210.3L743.4 211.7L748.2 213.7L760.2 219.9L765.8 222.0L771.4 223.0L777.8 222.7L781.8 221.7L785.8 220.3L799.4 213.9L805.0 211.6L810.6 210.2L817.0 209.6L819.4 208.7L821.8 207.0L824.2 204.8L833.0 194.8L837.0 190.8L840.2 188.7L841.8 188.1L844.0 187.8L847.4 188.3L850.6 189.8L861.0 197.5L865.0 199.9L868.2 200.9L873.0 201.2L877.0 201.8L883.4 203.8L890.6 207.2L910.6 218.2L917.0 220.8L922.6 222.2L926.6 222.5L929.8 222.3L933.0 221.7L937.0 220.3L943.4 216.9L957.0 208.0L963.0 204.5L969.8 201.9L973.0 201.2L977.0 201.0L979.4 200.3L982.6 198.4L989.8 193.0L992.2 191.8L994.6 191.3L997.6 191.9L1000.2 193.7L1003.4 197.1L1009.8 205.7L1013.0 209.4L1016.2 211.8L1018.6 212.5"/><path d="M677.0 220.3L679.9 221.1L685.0 224.4L687.4 225.6L689.0 225.8L690.6 225.2L692.2 223.3L693.8 220.4L701.0 203.2L703.4 200.0L704.2 199.5L705.8 199.4L709.0 200.1L712.2 201.6L715.4 203.8L725.0 211.5L729.8 214.1L732.2 214.7L738.6 215.3L743.4 216.7L748.2 218.9L760.2 225.2L765.8 227.4L771.4 228.5L777.8 228.1L781.8 227.1L785.8 225.6L799.4 219.0L805.0 216.7L810.6 215.2L817.0 214.6L819.4 213.6L821.8 211.9L824.2 209.7L833.0 199.3L837.0 195.2L840.2 193.0L841.8 192.4L844.0 192.1L847.4 192.6L850.6 194.1L861.0 202.1L865.0 204.5L868.2 205.6L873.0 205.9L877.0 206.5L883.4 208.6L890.6 212.1L904.2 220.1L910.6 223.5L917.0 226.1L922.6 227.5L926.6 227.8L929.8 227.6L933.0 227.0L937.0 225.5L943.4 222.1L957.0 212.9L963.0 209.3L969.8 206.6L973.0 205.9L977.0 205.7L979.4 205.0L982.6 203.0L989.8 197.5L992.2 196.2L994.6 195.7L996.2 195.8L997.6 196.3L1000.2 198.2L1003.4 201.7L1009.8 210.6L1013.0 214.4L1016.2 216.9L1018.6 217.6"/><path d="M677.0 225.5L679.9 226.3L685.0 229.8L687.4 230.9L689.0 231.2L690.6 230.5L692.2 228.6L693.8 225.6L701.0 207.9L703.4 204.6L704.2 204.1L705.8 203.9L709.0 204.6L712.2 206.2L715.4 208.5L725.0 216.4L729.8 219.1L732.2 219.8L738.6 220.4L743.4 221.8L748.2 224.0L760.2 230.6L765.8 232.9L771.4 234.0L774.6 234.0L777.8 233.6L781.8 232.5L785.8 231.0L799.4 224.2L805.0 221.8L810.6 220.3L817.0 219.6L819.4 218.6L821.8 216.9L824.2 214.5L833.0 203.8L837.0 199.6L840.2 197.4L841.8 196.7L844.0 196.4L847.4 196.9L850.6 198.5L853.8 200.8L861.0 206.7L865.0 209.2L868.2 210.3L873.0 210.6L877.0 211.3L883.4 213.4L890.6 217.0L904.2 225.3L910.6 228.8L917.0 231.5L922.6 232.8L926.6 233.2L929.8 233.0L933.0 232.3L937.0 230.9L944.2 226.9L957.0 217.9L963.0 214.2L966.6 212.5L969.8 211.4L973.0 210.7L977.0 210.4L979.4 209.7L982.6 207.7L989.8 201.9L992.2 200.7L994.6 200.1L996.2 200.3L997.6 200.8L1000.2 202.6L1003.4 206.3L1009.8 215.5L1013.0 219.4L1016.2 222.0L1018.6 222.7"/><path d="M677.0 230.8L679.9 231.6L685.0 235.1L687.4 236.3L689.0 236.6L690.6 235.9L692.2 233.9L693.8 230.8L701.0 212.6L703.4 209.1L704.2 208.6L705.8 208.5L709.0 209.2L712.2 210.8L715.4 213.1L725.0 221.3L729.8 224.1L732.2 224.8L738.6 225.4L743.4 226.9L748.2 229.2L760.2 236.0L765.8 238.3L771.4 239.4L774.6 239.4L777.8 239.0L781.8 238.0L785.8 236.4L799.4 229.4L805.0 226.9L810.6 225.3L817.0 224.7L819.4 223.6L821.8 221.8L824.2 219.4L833.0 208.3L837.0 204.0L840.2 201.7L841.8 201.0L844.0 200.7L847.4 201.3L850.6 202.9L853.8 205.2L861.0 211.3L865.0 213.9L868.2 215.1L873.0 215.4L877.0 216.1L883.4 218.3L890.6 222.0L904.2 230.5L910.6 234.1L917.0 236.8L922.6 238.2L926.6 238.6L930.6 238.3L933.8 237.5L937.8 235.9L944.2 232.1L957.0 222.9L963.0 219.0L966.6 217.3L969.8 216.1L973.0 215.4L977.0 215.2L979.4 214.4L982.6 212.4L989.8 206.4L992.2 205.1L994.6 204.6L996.2 204.7L997.6 205.2L1000.2 207.2L1003.4 210.9L1009.8 220.4L1013.0 224.4L1016.2 227.1L1018.6 227.8"/><path d="M677.0 236.0L679.9 236.8L685.0 240.5L687.4 241.7L689.0 242.0L690.6 241.3L692.2 239.2L693.8 236.0L701.0 217.2L703.4 213.7L704.2 213.2L705.8 213.0L709.0 213.8L712.2 215.5L715.4 217.9L725.0 226.3L729.8 229.1L732.2 229.8L738.6 230.5L743.4 232.1L748.2 234.4L760.2 241.4L765.8 243.8L771.4 244.9L774.6 244.9L777.8 244.5L781.8 243.4L785.8 241.8L799.4 234.6L805.0 232.0L810.6 230.4L817.0 229.7L819.4 228.6L821.8 226.8L824.2 224.3L833.0 212.9L837.0 208.4L840.2 206.0L841.8 205.4L844.0 205.0L847.4 205.6L850.6 207.3L853.8 209.7L861.0 216.0L865.0 218.7L868.2 219.8L876.2 220.7L882.6 222.8L890.6 226.9L905.0 236.2L910.6 239.4L917.0 242.2L922.6 243.7L926.6 244.0L930.6 243.7L933.8 242.9L937.8 241.3L944.2 237.4L957.0 227.9L963.0 223.9L966.6 222.1L969.8 220.9L973.0 220.2L977.0 219.9L979.4 219.2L982.6 217.0L989.8 210.9L992.2 209.6L994.6 209.0L996.2 209.1L997.6 209.7L1000.2 211.7L1003.4 215.6L1009.8 225.3L1013.0 229.5L1016.2 232.2L1018.6 233.0"/></g><path d="M677.4 193.3L677.9 194.5L679.5 206.4L680.1 209.6L680.6 210.8L681.1 210.3L681.6 208.8L683.8 199.3L684.3 197.8L684.8 197.3L685.3 197.8L685.8 199.1L688.3 210.6L688.8 211.9L689.3 212.4L689.8 211.9L690.3 210.6L692.9 197.2L693.9 193.8L694.4 193.3L694.9 193.8L696.0 197.2L697.7 204.1L698.2 205.5L698.8 206.0L699.3 205.5L700.3 202.0L702.9 187.0L703.9 183.5L704.4 183.0L704.9 183.5L706.0 187.4L707.5 195.2L708.1 196.8L708.6 197.3L709.1 196.9L710.2 193.9L713.3 179.3L713.8 178.2L714.3 177.8L714.8 178.3L715.4 179.7L718.1 193.3L719.2 196.8L719.7 197.3L720.2 197.0L721.3 194.6L724.4 182.7L725.0 181.7L725.5 181.4L726.0 181.7L726.6 182.7L727.6 186.4L730.8 201.5L731.9 204.1L732.4 204.4L732.9 204.2L734.0 202.6L737.7 191.9L738.8 190.3L739.3 190.1L740.3 190.5L741.8 192.7L743.3 196.4L747.4 207.9L748.9 210.6L749.9 211.5L751.4 211.4L753.5 209.9L755.0 208.0L759.7 200.9L761.2 199.2L762.3 198.4L763.3 198.0L766.3 197.8L771.4 196.9L773.9 196.8L780.9 197.9L783.4 198.0L784.9 198.7L787.5 201.4L793.6 210.3L795.7 212.0L797.2 212.4L797.7 212.3L798.7 211.6L800.3 209.1L805.9 194.5L807.5 191.6L809.0 190.2L809.5 190.1L810.0 190.3L811.0 192.0L814.1 201.9L815.2 204.3L815.7 205.0L816.2 205.2L816.7 204.9L817.3 204.2L818.3 201.3L822.0 185.3L823.0 182.4L823.6 181.7L824.1 181.4L824.6 181.6L825.1 182.2L826.2 184.4L829.8 195.6L830.8 197.1L831.3 197.3L831.8 197.1L832.3 196.3L833.3 193.6L836.9 179.9L837.9 178.0L838.4 177.8L838.9 178.1L839.9 180.3L843.0 193.4L844.0 196.6L844.5 197.4L845.0 197.7L845.5 197.5L846.6 195.6L849.3 186.9L850.3 184.3L850.9 183.5L851.4 183.3L851.9 183.6L852.4 184.4L853.5 187.5L856.5 201.5L857.6 204.6L858.1 205.4L858.6 205.7L859.6 205.0L860.6 203.1L863.6 195.2L864.6 193.9L865.1 193.7L865.6 193.9L866.1 194.7L867.2 197.3L870.8 210.9L871.8 212.8L872.3 213.0L872.8 212.8L873.3 212.2L874.4 210.0L878.0 198.7L879.0 197.1L879.5 196.9L880.5 197.5L881.5 199.1L885.0 208.8L886.0 210.9L887.0 212.1L887.5 212.2L888.5 211.8L889.6 210.5L891.1 207.2L894.7 196.8L896.2 193.2L897.8 190.9L898.8 190.5L900.3 191.0L901.8 192.5L907.3 201.4L908.8 203.2L910.3 204.0L911.8 204.0L913.3 203.4L918.4 199.8L920.5 198.8L922.0 198.5L928.4 198.5L929.9 198.7L931.5 199.3L938.7 204.0L941.3 204.6L942.3 204.3L943.9 202.5L948.1 194.3L949.6 191.8L951.2 190.6L952.2 190.6L953.3 191.7L954.3 193.7L959.0 207.7L960.0 210.1L961.1 211.7L962.1 212.2L962.6 212.0L963.7 210.6L967.3 200.0L968.4 197.9L969.4 197.2L969.9 197.5L971.0 199.5L974.2 210.7L975.3 212.7L975.8 213.0L976.3 212.7L977.4 210.6L980.6 197.9L981.6 194.8L982.2 194.0L982.7 193.7L983.2 194.2L983.8 195.5L985.4 202.0L986.5 205.2L987.0 205.7L987.5 205.4L988.1 204.4L989.1 200.7L992.3 185.4L993.4 182.8L993.9 182.5L994.4 183.3L996.9 196.9L997.4 197.7L997.9 197.3L998.9 194.2L1001.5 181.2L1002.5 178.1L1003.0 177.7L1003.5 178.4L1004.0 180.5L1006.1 194.1L1006.6 196.2L1007.1 196.9L1007.6 196.6L1008.6 194.4L1011.7 183.6L1012.2 182.8L1012.7 182.5L1013.2 183.3L1013.7 185.7L1015.7 200.9L1016.2 203.3L1016.7 204.1L1017.3 202.5L1018.5 194.5L1019.1 192.9" stroke="#ffb032" stroke-width="2" fill="none" stroke-linejoin="round"/></svg>
<div class="t" style="left:26.1px;top:288.73px;font-size:10px;font-weight:bold;color:#62c8f0;">Amp</div>
<div class="t" style="left:164.3px;top:288.73px;font-size:10px;font-weight:bold;color:#62c8f0;">None</div>
<svg class="a" style="left:200.5px;top:292px" width="7" height="5" viewBox="200.5 292 7 5"><path d="M201.5 293H206.5L204.0 296Z" fill="#62c8f0"/></svg>
<svg class="a" style="left:22px;top:283px" width="192" height="275" viewBox="22 283 192 275"><path d="M30.5 344V335H39.5M194.5 335H203.5V344M30.5 465V474H39.5M194.5 474H203.5V465" stroke="#62c8f0" stroke-width="1.1" fill="none"/><path d="M35.4 470.5L39 340L39.01 340.95L39.03 341.90L39.07 342.85L39.13 343.80L39.21 344.75L39.32 345.70L39.45 346.65L39.61 347.60L39.79 348.55L40.00 349.50L40.24 350.45L40.51 351.40L40.80 352.35L41.12 353.30L41.47 354.25L41.86 355.20L42.27 356.15L42.71 357.10L43.19 358.05L43.70 359.00L44.24 359.95L44.81 360.90L45.41 361.85L46.05 362.80L46.72 363.75L47.43 364.70L48.17 365.65L48.94 366.60L49.75 367.55L50.59 368.50L51.47 369.45L52.38 370.40L53.33 371.35L54.32 372.30L55.34 373.25L56.40 374.20L57.49 375.15L58.62 376.10L59.79 377.05L61.00 378.00L144 378L144.00 380.30L144.02 382.60L144.05 384.90L144.10 387.20L144.17 389.50L144.25 391.80L144.36 394.10L144.50 396.40L144.65 398.70L144.83 401.00L145.04 403.30L145.27 405.60L145.54 407.90L145.83 410.20L146.14 412.50L146.49 414.80L146.87 417.10L147.28 419.40L147.71 421.70L148.19 424.00L148.69 426.30L149.22 428.60L149.79 430.90L150.40 433.20L151.03 435.50L151.71 437.80L152.41 440.10L153.16 442.40L153.94 444.70L154.75 447.00L155.60 449.30L156.49 451.60L157.42 453.90L158.39 456.20L159.39 458.50L160.43 460.80L161.52 463.10L162.64 465.40L163.80 467.70L165.00 470.00" stroke="#62c8f0" stroke-width="1.5" fill="none"/><path d="M37.3 402.79999999999995L39.9 405.4L37.3 408.0L34.699999999999996 405.4Z" fill="none" stroke="#d08080" stroke-width="1"/><path d="M50.5 365.79999999999995L53.1 368.4L50.5 371.0L47.9 368.4Z" fill="none" stroke="#d08080" stroke-width="1"/><path d="M154.5 443.7L157.1 446.3L154.5 448.90000000000003L151.9 446.3Z" fill="none" stroke="#d08080" stroke-width="1"/><rect x="36.0" y="337.0" width="6" height="6" fill="none" stroke="#ffb032" stroke-width="1.1"/><rect x="58.0" y="375.0" width="6" height="6" fill="none" stroke="#ffb032" stroke-width="1.1"/><rect x="162.0" y="467.0" width="6" height="6" fill="none" stroke="#ffb032" stroke-width="1.1"/></svg>
<div class="t" style="left:91.5px;top:509.83px;font-size:10px;font-weight:bold;color:#e8e8e8;">Time</div>
<div class="t" style="left:119.1px;top:509.83px;font-size:10px;color:#8e8e8e;">Slope</div>
<div class="a" style="left:22px;top:523px;width:192px;height:1px;background:#474747;"></div>
<div class="t" style="left:29.2px;top:528.13px;font-size:10px;color:#8e8e8e;">A</div>
<div class="t" style="left:74.0px;top:528.13px;font-size:10px;color:#8e8e8e;">D</div>
<div class="t" style="left:118.7px;top:528.13px;font-size:10px;color:#8e8e8e;">S</div>
<div class="t" style="left:163.5px;top:528.13px;font-size:10px;color:#8e8e8e;">R</div>
<div class="t" style="left:31.1px;top:541.03px;font-size:10px;font-weight:bold;color:#62c8f0;">1.00 ms</div>
<div class="t" style="left:75.9px;top:541.03px;font-size:10px;font-weight:bold;color:#62c8f0;">600 ms</div>
<div class="t" style="left:120.7px;top:541.03px;font-size:10px;font-weight:bold;color:#62c8f0;">-6.0 dB</div>
<div class="t" style="left:166.2px;top:541.03px;font-size:10px;font-weight:bold;color:#62c8f0;">600 ms</div>
<div class="a" style="left:88px;top:522.5px;width:30px;height:1.6px;background:#e8e8e8;"></div>
<div class="t" style="left:220.3px;top:288.73px;font-size:10px;font-weight:bold;color:#62c8f0;">Env 2</div>
<div class="t" style="left:352.3px;top:288.73px;font-size:10px;font-weight:bold;color:#62c8f0;">None</div>
<svg class="a" style="left:388.3px;top:292px" width="7" height="5" viewBox="388.3 292 7 5"><path d="M389.3 293H394.3L391.8 296Z" fill="#62c8f0"/></svg>
<svg class="a" style="left:216px;top:283px" width="186" height="275" viewBox="216 283 186 275"><path d="M223.5 344V335H232.5M381.5 335H390.5V344M223.5 465V474H232.5M381.5 474H390.5V465" stroke="#62c8f0" stroke-width="1.1" fill="none"/><path d="M227.7 469.7L232 340L232.02 342.75L232.07 345.51L232.15 348.26L232.26 351.02L232.40 353.77L232.57 356.53L232.77 359.28L232.99 362.04L233.23 364.80L233.51 367.55L233.81 370.31L234.13 373.06L234.48 375.81L234.86 378.57L235.26 381.32L235.68 384.08L236.13 386.83L236.61 389.59L237.10 392.34L237.63 395.10L238.17 397.86L238.74 400.61L239.34 403.37L239.96 406.12L240.60 408.88L241.26 411.63L241.95 414.38L242.66 417.14L243.40 419.89L244.16 422.65L244.94 425.40L245.74 428.16L246.57 430.91L247.42 433.67L248.29 436.42L249.19 439.18L250.11 441.94L251.05 444.69L252.01 447.44L253.00 450.20L332.8 450.2L332.80 450.69L332.80 451.19L332.81 451.69L332.83 452.18L332.85 452.68L332.88 453.17L332.92 453.66L332.97 454.16L333.03 454.65L333.11 455.15L333.19 455.64L333.29 456.14L333.40 456.63L333.53 457.13L333.67 457.62L333.83 458.12L334.00 458.62L334.20 459.11L334.40 459.61L334.63 460.10L334.87 460.59L335.14 461.09L335.42 461.58L335.73 462.08L336.05 462.57L336.40 463.07L336.76 463.56L337.15 464.06L337.56 464.56L338.00 465.05L338.45 465.55L338.94 466.04L339.44 466.53L339.97 467.03L340.53 467.52L341.11 468.02L341.72 468.51L342.35 469.01L343.01 469.50L343.70 470.00" stroke="#62c8f0" stroke-width="1.5" fill="none"/><path d="M230.4 402.9L233.0 405.5L230.4 408.1L227.8 405.5Z" fill="none" stroke="#d08080" stroke-width="1"/><path d="M243.7 418.4L246.29999999999998 421L243.7 423.6L241.1 421Z" fill="none" stroke="#d08080" stroke-width="1"/><path d="M338.7 463.2L341.3 465.8L338.7 468.40000000000003L336.09999999999997 465.8Z" fill="none" stroke="#d08080" stroke-width="1"/><rect x="224.7" y="466.7" width="6" height="6" fill="none" stroke="#ffb032" stroke-width="1.1"/><rect x="229.0" y="337.0" width="6" height="6" fill="none" stroke="#ffb032" stroke-width="1.1"/><rect x="250.0" y="447.2" width="6" height="6" fill="none" stroke="#ffb032" stroke-width="1.1"/><rect x="340.7" y="467.0" width="6" height="6" fill="none" stroke="#ffb032" stroke-width="1.1"/></svg>
<div class="t" style="left:267.8px;top:509.83px;font-size:10px;font-weight:bold;color:#e8e8e8;">Time</div>
<div class="t" style="left:295.0px;top:509.83px;font-size:10px;color:#8e8e8e;">Slope</div>
<div class="t" style="left:326.2px;top:509.83px;font-size:10px;color:#8e8e8e;">Value</div>
<div class="a" style="left:216px;top:523px;width:186px;height:1px;background:#474747;"></div>
<div class="t" style="left:220.3px;top:528.13px;font-size:10px;color:#8e8e8e;">A</div>
<div class="t" style="left:265.5px;top:528.13px;font-size:10px;color:#8e8e8e;">D</div>
<div class="t" style="left:310.2px;top:528.13px;font-size:10px;color:#8e8e8e;">S</div>
<div class="t" style="left:355.4px;top:528.13px;font-size:10px;color:#8e8e8e;">R</div>
<div class="t" style="left:222.3px;top:541.03px;font-size:10px;font-weight:bold;color:#62c8f0;">1.00 ms</div>
<div class="t" style="left:267.0px;top:541.03px;font-size:10px;font-weight:bold;color:#62c8f0;">630 ms</div>
<div class="t" style="left:312.2px;top:541.03px;font-size:10px;font-weight:bold;color:#62c8f0;">16 %</div>
<div class="t" style="left:357.3px;top:541.03px;font-size:10px;font-weight:bold;color:#62c8f0;">74.3 ms</div>
<div class="a" style="left:264px;top:522.5px;width:30px;height:1.6px;background:#e8e8e8;"></div>
<div class="t" style="left:408.2px;top:288.73px;font-size:10px;font-weight:bold;color:#62c8f0;">Env 3</div>
<div class="t" style="left:540.0px;top:288.73px;font-size:10px;font-weight:bold;color:#62c8f0;">None</div>
<svg class="a" style="left:576.5px;top:292px" width="7" height="5" viewBox="576.5 292 7 5"><path d="M577.5 293H582.5L580.0 296Z" fill="#62c8f0"/></svg>
<svg class="a" style="left:404px;top:283px" width="186" height="275" viewBox="404 283 186 275"><path d="M411.5 344V335H420.5M569.7 335H578.7V344M411.5 465V474H420.5M569.7 474H578.7V465" stroke="#62c8f0" stroke-width="1.1" fill="none"/><path d="M415.5 470L419.6 340.2L419.61 341.81L419.65 343.42L419.72 345.03L419.81 346.64L419.93 348.25L420.07 349.86L420.24 351.47L420.44 353.08L420.66 354.69L420.91 356.30L421.19 357.91L421.49 359.52L421.82 361.13L422.18 362.74L422.56 364.35L422.97 365.96L423.40 367.57L423.87 369.18L424.36 370.79L424.87 372.40L425.41 374.01L425.98 375.62L426.58 377.23L427.20 378.84L427.85 380.45L428.53 382.06L429.23 383.67L429.96 385.28L430.72 386.89L431.50 388.50L432.31 390.11L433.14 391.72L434.01 393.33L434.90 394.94L435.81 396.55L436.76 398.16L437.73 399.77L438.73 401.38L439.75 402.99L440.80 404.60L520.4 404.6L520.41 406.24L520.43 407.87L520.48 409.50L520.55 411.14L520.64 412.78L520.75 414.41L520.89 416.05L521.05 417.68L521.24 419.31L521.45 420.95L521.69 422.59L521.95 424.22L522.24 425.86L522.56 427.49L522.90 429.12L523.27 430.76L523.67 432.40L524.10 434.03L524.55 435.67L525.03 437.30L525.54 438.94L526.08 440.57L526.64 442.20L527.24 443.84L527.86 445.48L528.52 447.11L529.20 448.75L529.91 450.38L530.65 452.01L531.42 453.65L532.23 455.29L533.06 456.92L533.92 458.56L534.81 460.19L535.73 461.82L536.68 463.46L537.67 465.10L538.68 466.73L539.72 468.37L540.80 470.00" stroke="#62c8f0" stroke-width="1.5" fill="none"/><path d="M418 402.9L420.6 405.5L418 408.1L415.4 405.5Z" fill="none" stroke="#d08080" stroke-width="1"/><path d="M431.4 385.7L434.0 388.3L431.4 390.90000000000003L428.79999999999995 388.3Z" fill="none" stroke="#d08080" stroke-width="1"/><path d="M531.4 451.0L534.0 453.6L531.4 456.20000000000005L528.8 453.6Z" fill="none" stroke="#d08080" stroke-width="1"/><rect x="412.5" y="467.0" width="6" height="6" fill="none" stroke="#ffb032" stroke-width="1.1"/><rect x="416.6" y="337.2" width="6" height="6" fill="none" stroke="#ffb032" stroke-width="1.1"/><rect x="437.8" y="401.6" width="6" height="6" fill="none" stroke="#ffb032" stroke-width="1.1"/><rect x="537.8" y="467.0" width="6" height="6" fill="none" stroke="#ffb032" stroke-width="1.1"/></svg>
<div class="t" style="left:455.9px;top:509.83px;font-size:10px;font-weight:bold;color:#e8e8e8;">Time</div>
<div class="t" style="left:483.6px;top:509.83px;font-size:10px;color:#8e8e8e;">Slope</div>
<div class="t" style="left:514.2px;top:509.83px;font-size:10px;color:#8e8e8e;">Value</div>
<div class="a" style="left:404px;top:523px;width:186px;height:1px;background:#474747;"></div>
<div class="t" style="left:408.2px;top:528.13px;font-size:10px;color:#8e8e8e;">A</div>
<div class="t" style="left:453.0px;top:528.13px;font-size:10px;color:#8e8e8e;">D</div>
<div class="t" style="left:497.9px;top:528.13px;font-size:10px;color:#8e8e8e;">S</div>
<div class="t" style="left:542.8px;top:528.13px;font-size:10px;color:#8e8e8e;">R</div>
<div class="t" style="left:410.2px;top:541.03px;font-size:10px;font-weight:bold;color:#62c8f0;">1.00 ms</div>
<div class="t" style="left:455.1px;top:541.03px;font-size:10px;font-weight:bold;color:#62c8f0;">600 ms</div>
<div class="t" style="left:500.0px;top:541.03px;font-size:10px;font-weight:bold;color:#62c8f0;">50 %</div>
<div class="t" style="left:544.8px;top:541.03px;font-size:10px;font-weight:bold;color:#62c8f0;">600 ms</div>
<div class="a" style="left:453px;top:522.5px;width:29px;height:1.6px;background:#e8e8e8;"></div>
<div class="t" style="left:596.7px;top:288.73px;font-size:10px;font-weight:bold;color:#ffb032;">LFO 1</div>
<div class="t" style="left:719.4px;top:288.73px;font-size:10px;color:#8e8e8e;">A</div>
<div class="t" style="left:731.8px;top:288.73px;font-size:10px;font-weight:bold;color:#ffb032;">0.00 ms</div>
<div class="t" style="left:781.9px;top:288.73px;font-size:10px;color:#8e8e8e;">Hz</div>
<div class="a" style="left:797px;top:288px;width:17px;height:11px;background:repeating-linear-gradient(135deg,#2c2824 0px,#2c2824 2px,#3a3129 2px,#3a3129 3px);"></div>
<svg class="a" style="left:797px;top:287px" width="17" height="13" viewBox="797 287 17 13"><path d="M807.5 296.5V290.5L810 292.5" stroke="#ffb032" stroke-width="1" fill="none"/><circle cx="806.5" cy="296.5" r="1.3" fill="#ffb032"/></svg>
<div class="a" style="left:818px;top:288px;width:12px;height:12px;background:transparent;border:1px solid #ffb032"></div>
<div class="t" style="left:821.2px;top:290.83px;font-size:8px;font-weight:bold;color:#ffb032;">R</div>
<svg class="a" style="left:592px;top:283px" width="250" height="275" viewBox="592 283 250 275"><path d="M602.00 404.00L602.50 400.31L603.00 396.63L603.50 392.97L604.00 389.35L604.50 385.79L605.00 382.29L605.50 378.86L606.00 375.52L606.50 372.28L607.00 369.15L607.50 366.14L608.00 363.26L608.50 360.52L609.00 357.94L609.50 355.51L610.00 353.25L610.50 351.17L611.00 349.27L611.50 347.57L612.00 346.06L612.50 344.74L613.00 343.64L613.50 342.75L614.00 342.06L614.50 341.60L615.00 341.35L615.50 341.31L616.00 341.50L616.50 341.90L617.00 342.52L617.50 343.35L618.00 344.39L618.50 345.64L619.00 347.09L619.50 348.74L620.00 350.58L620.50 352.61L621.00 354.82L621.50 357.19L622.00 359.73L622.50 362.42L623.00 365.26L623.50 368.23L624.00 371.33L624.50 374.54L625.00 377.85L625.50 381.25L626.00 384.73L626.50 388.28L627.00 391.88L627.50 395.53L628.00 399.20L628.50 402.89L629.00 406.59L629.50 410.27L630.00 413.94L630.50 417.57L631.00 421.15L631.50 424.67L632.00 428.12L632.50 431.49L633.00 434.76L633.50 437.93L634.00 440.97L634.50 443.89L635.00 446.67L635.50 449.30L636.00 451.78L636.50 454.09L637.00 456.22L637.50 458.18L638.00 459.94L638.50 461.51L639.00 462.88L639.50 464.05L640.00 465.01L640.50 465.75L641.00 466.29L641.50 466.60L642.00 466.70L642.50 466.58L643.00 466.24L643.50 465.69L644.00 464.92L644.50 463.94L645.00 462.76L645.50 461.36L646.00 459.77L646.50 457.99L647.00 456.02L647.50 453.86L648.00 451.54L648.50 449.05L649.00 446.40L649.50 443.61L650.00 440.67L650.50 437.62L651.00 434.44L651.50 431.16L652.00 427.78L652.50 424.32L653.00 420.79L653.50 417.20L654.00 413.57L654.50 409.90L655.00 406.22L655.50 402.52L656.00 398.83L656.50 395.16L657.00 391.52L657.50 387.92L658.00 384.38L658.50 380.90L659.00 377.51L659.50 374.21L660.00 371.01L660.50 367.93L661.00 364.97L661.50 362.15L662.00 359.47L662.50 356.95L663.00 354.59L663.50 352.40L664.00 350.39L664.50 348.57L665.00 346.94L665.50 345.51L666.00 344.28L666.50 343.26L667.00 342.45L667.50 341.85L668.00 341.47L668.50 341.31L669.00 341.36L669.50 341.63L670.00 342.12L670.50 342.83L671.00 343.74L671.50 344.87L672.00 346.20L672.50 347.73L673.00 349.46L673.50 351.37L674.00 353.47L674.50 355.75L675.00 358.19L675.50 360.79L676.00 363.54L676.50 366.43L677.00 369.45L677.50 372.60L678.00 375.85L678.50 379.20L679.00 382.63L679.50 386.14L680.00 389.71L680.50 393.33L681.00 396.99L681.50 400.68L682.00 404.37L682.50 408.06L683.00 411.74L683.50 415.39L684.00 419.01L684.50 422.57L685.00 426.06L685.50 429.48L686.00 432.81L686.50 436.04L687.00 439.16L687.50 442.16L688.00 445.02L688.50 447.74L689.00 450.31L689.50 452.72L690.00 454.96L690.50 457.03L691.00 458.91L691.50 460.59L692.00 462.09L692.50 463.37L693.00 464.46L693.50 465.33L694.00 465.99L694.50 466.44L695.00 466.67L695.50 466.68L696.00 466.47L696.50 466.05L697.00 465.41L697.50 464.56L698.00 463.49L698.50 462.22L699.00 460.75L699.50 459.08L700.00 457.22L700.50 455.18L701.00 452.95L701.50 450.56L702.00 448.01L702.50 445.30L703.00 442.45L703.50 439.47L704.00 436.36L704.50 433.14L705.00 429.82L705.50 426.41L706.00 422.92L706.50 419.36L707.00 415.76L707.50 412.11L708.00 408.43L708.50 404.74L709.00 401.04L709.50 397.36L710.00 393.70L710.50 390.07L711.00 386.50L711.50 382.98L712.00 379.54L712.50 376.18L713.00 372.92L713.50 369.76L714.00 366.73L714.50 363.82L715.00 361.06L715.50 358.44L716.00 355.98L716.50 353.69L717.00 351.57L717.50 349.64L718.00 347.89L718.50 346.34L719.00 344.99L719.50 343.84L720.00 342.91L720.50 342.18L721.00 341.67L721.50 341.38L722.00 341.30L722.50 341.44L723.00 341.80L723.50 342.38L724.00 343.17L724.50 344.17L725.00 345.37L725.50 346.79L726.00 348.40L726.50 350.20L727.00 352.19L727.50 354.36L728.00 356.70L728.50 359.21L729.00 361.87L729.50 364.68L730.00 367.63L730.50 370.70L731.00 373.88L731.50 377.18L732.00 380.56L732.50 384.03L733.00 387.56L733.50 391.16L734.00 394.79L734.50 398.46L735.00 402.15L735.50 405.85L736.00 409.54L736.50 413.21L737.00 416.84L737.50 420.44L738.00 423.97L738.50 427.44L739.00 430.82L739.50 434.12L740.00 437.30L740.50 440.37L741.00 443.32L741.50 446.13L742.00 448.79L742.50 451.30L743.00 453.64L743.50 455.81L744.00 457.80L744.50 459.60L745.00 461.21L745.50 462.63L746.00 463.83L746.50 464.83L747.00 465.62L747.50 466.20L748.00 466.56L748.50 466.70L749.00 466.62L749.50 466.33L750.00 465.82L750.50 465.09L751.00 464.16L751.50 463.01L752.00 461.66L752.50 460.11L753.00 458.36L753.50 456.43L754.00 454.31L754.50 452.02L755.00 449.56L755.50 446.94L756.00 444.18L756.50 441.27L757.00 438.24L757.50 435.08L758.00 431.82L758.50 428.46L759.00 425.02L759.50 421.50L760.00 417.93L760.50 414.30L761.00 410.64L761.50 406.96L762.00 403.26L762.50 399.57L763.00 395.89L763.50 392.24L764.00 388.64L764.50 385.08L765.00 381.59L765.50 378.18L766.00 374.86L766.50 371.64L767.00 368.53L767.50 365.55L768.00 362.70L768.50 359.99L769.00 357.44L769.50 355.05L770.00 352.82L770.50 350.78L771.00 348.92L771.50 347.25L772.00 345.78L772.50 344.51L773.00 343.44L773.50 342.59L774.00 341.95L774.50 341.53L775.00 341.32L775.50 341.33L776.00 341.56L776.50 342.01L777.00 342.67L777.50 343.54L778.00 344.63L778.50 345.91L779.00 347.41L779.50 349.09L780.00 350.97L780.50 353.04L781.00 355.28L781.50 357.69L782.00 360.26L782.50 362.98L783.00 365.84L783.50 368.84L784.00 371.96L784.50 375.19L785.00 378.52L785.50 381.94L786.00 385.43L786.50 388.99L787.00 392.61L787.50 396.26L788.00 399.94L788.50 403.63L789.00 407.32L789.50 411.01L790.00 414.67L790.50 418.29L791.00 421.86L791.50 425.37L792.00 428.80L792.50 432.15L793.00 435.40L793.50 438.55L794.00 441.57L794.50 444.46L795.00 447.21L795.50 449.81L796.00 452.25L796.50 454.53L797.00 456.63L797.50 458.54L798.00 460.27L798.50 461.80L799.00 463.13L799.50 464.26L800.00 465.17L800.50 465.88L801.00 466.37L801.50 466.64L802.00 466.69L802.50 466.53L803.00 466.15L803.50 465.55L804.00 464.74L804.50 463.72L805.00 462.49L805.50 461.06L806.00 459.43L806.50 457.61L807.00 455.60L807.50 453.41L808.00 451.05L808.50 448.53L809.00 445.85L809.50 443.03L810.00 440.07L810.50 436.99L811.00 433.79L811.50 430.49L812.00 427.10L812.50 423.62L813.00 420.08L813.50 416.48L814.00 412.84L814.50 409.17L815.00 405.48L815.50 401.78L816.00 398.10L816.50 394.43L817.00 390.80L817.50 387.21L818.00 383.68L818.50 380.22L819.00 376.84L819.50 373.56L820.00 370.38L820.50 367.33L821.00 364.39L821.50 361.60L822.00 358.95L822.50 356.46L823.00 354.14L823.50 351.98L824.00 350.01L824.50 348.23L825.00 346.64L825.50 345.24L826.00 344.06L826.50 343.08L827.00 342.31L827.50 341.76L828.00 341.42L828.50 341.30" stroke="#ffb032" stroke-width="1.5" fill="none"/></svg>
<svg class="a" style="left:592px;top:505px" width="250" height="20" viewBox="592 505 250 20"><path d="M658.9 519.1C660.4 510.1 663.9 510.1 666.4 515.6S672.4 521.1 673.9 512.1" stroke="#ffb032" stroke-width="1.3" fill="none"/><path d="M683.9 519.1L691.4 512.1L698.9 519.1" stroke="#a8a8a8" stroke-width="1" fill="none"/><path d="M709.4 519.1V512.1L723.9 519.1" stroke="#a8a8a8" stroke-width="1" fill="none"/><path d="M733.9 519.1V512.1H741.4V519.1H748.9V512.1" stroke="#a8a8a8" stroke-width="1" fill="none"/><path d="M758.9 518.6H762.4V512.1H765.4V518.6H768.4V515.6H770.9V512.6H773.9" stroke="#a8a8a8" stroke-width="1" fill="none"/></svg>
<div class="a" style="left:592px;top:523px;width:250px;height:1px;background:#474747;"></div>
<div class="t" style="left:626.4px;top:527.53px;font-size:10px;color:#8e8e8e;">Rate</div>
<div class="t" style="left:672.5px;top:527.53px;font-size:10px;color:#8e8e8e;">Amount</div>
<div class="t" style="left:718.2px;top:527.53px;font-size:10px;color:#8e8e8e;">Shape</div>
<div class="t" style="left:764.3px;top:527.53px;font-size:10px;color:#8e8e8e;">Offset</div>
<div class="t" style="left:628.5px;top:540.93px;font-size:10px;font-weight:bold;color:#ffb032;">1/3</div>
<div class="t" style="left:674.2px;top:540.93px;font-size:10px;font-weight:bold;color:#ffb032;">91 %</div>
<div class="t" style="left:721.1px;top:540.93px;font-size:10px;font-weight:bold;color:#ffb032;">-11 %</div>
<div class="t" style="left:766.4px;top:540.93px;font-size:10px;font-weight:bold;color:#ffb032;">0.0°</div>
<div class="t" style="left:848.7px;top:288.73px;font-size:10px;font-weight:bold;color:#ffb032;">LFO 2</div>
<div class="t" style="left:971.4px;top:288.73px;font-size:10px;color:#8e8e8e;">A</div>
<div class="t" style="left:983.8px;top:288.73px;font-size:10px;font-weight:bold;color:#ffb032;">0.00 ms</div>
<div class="t" style="left:1033.9px;top:288.73px;font-size:10px;color:#8e8e8e;">Hz</div>
<div class="a" style="left:1049px;top:288px;width:17px;height:11px;background:repeating-linear-gradient(135deg,#2c2824 0px,#2c2824 2px,#3a3129 2px,#3a3129 3px);"></div>
<svg class="a" style="left:1049px;top:287px" width="17" height="13" viewBox="1049 287 17 13"><path d="M1059.5 296.5V290.5L1062 292.5" stroke="#ffb032" stroke-width="1" fill="none"/><circle cx="1058.5" cy="296.5" r="1.3" fill="#ffb032"/></svg>
<div class="a" style="left:1070px;top:288px;width:12px;height:12px;background:#ffb032;"></div>
<div class="t" style="left:1073.2px;top:290.83px;font-size:8px;font-weight:bold;color:#2a2a2a;">R</div>
<svg class="a" style="left:844px;top:283px" width="250" height="275" viewBox="844 283 250 275"><path d="M854.10 404.00L854.60 398.46L855.10 392.96L855.60 387.54L856.10 382.22L856.60 377.04L857.11 372.04L857.61 367.25L858.11 362.70L858.61 358.41L859.11 354.43L859.61 350.77L860.11 347.46L860.61 344.52L861.11 341.97L861.61 339.82L862.11 338.10L862.62 336.80L863.12 335.95L863.62 335.54L864.12 335.58L864.62 336.06L865.12 336.99L865.62 338.36L866.12 340.16L866.62 342.37L867.12 344.99L867.62 348.00L868.12 351.37L868.63 355.08L869.13 359.12L869.63 363.45L870.13 368.04L870.63 372.87L871.13 377.90L871.63 383.11L872.13 388.45L872.63 393.89L873.13 399.40L873.63 404.94L874.14 410.47L874.64 415.96L875.14 421.37L875.64 426.67L876.14 431.82L876.64 436.79L877.14 441.54L877.64 446.05L878.14 450.28L878.64 454.21L879.14 457.81L879.65 461.06L880.15 463.94L880.65 466.42L881.15 468.50L881.65 470.15L882.15 471.37L882.65 472.15L883.15 472.49L883.65 472.37L884.15 471.81L884.65 470.81L885.15 469.37L885.66 467.50L886.16 465.21L886.66 462.53L887.16 459.46L887.66 456.03L888.16 452.26L888.66 448.17L889.16 443.80L889.66 439.16L890.16 434.29L890.66 429.23L891.17 424.00L891.67 418.64L892.17 413.18L892.67 407.67L893.17 402.13L893.67 396.60L894.17 391.12L894.67 385.73L895.17 380.45L895.67 375.33L896.17 370.40L896.68 365.68L897.18 361.22L897.68 357.03L898.18 353.16L898.68 349.61L899.18 346.43L899.68 343.62L900.18 341.20L900.68 339.19L901.18 337.61L901.68 336.47L902.19 335.76L902.69 335.50L903.19 335.69L903.69 336.33L904.19 337.41L904.69 338.92L905.19 340.86L905.69 343.21L906.19 345.96L906.69 349.09L907.19 352.58L907.69 356.41L908.20 360.55L908.70 364.97L909.20 369.65L909.70 374.55L910.20 379.64L910.70 384.90L911.20 390.28L911.70 395.74L912.20 401.27L912.70 406.81L913.20 412.33L913.71 417.80L914.21 423.17L914.71 428.43L915.21 433.52L915.71 438.42L916.21 443.09L916.71 447.51L917.21 451.64L917.71 455.46L918.21 458.95L918.71 462.07L919.22 464.82L919.72 467.17L920.22 469.10L920.72 470.61L921.22 471.68L921.72 472.31L922.22 472.50L922.72 472.23L923.22 471.52L923.72 470.37L924.22 468.78L924.73 466.77L925.23 464.35L925.73 461.53L926.23 458.34L926.73 454.79L927.23 450.91L927.73 446.72L928.23 442.26L928.73 437.54L929.23 432.60L929.73 427.48L930.23 422.20L930.74 416.81L931.24 411.33L931.74 405.80L932.24 400.26L932.74 394.74L933.24 389.29L933.74 383.93L934.24 378.70L934.74 373.64L935.24 368.78L935.74 364.14L936.25 359.77L936.75 355.69L937.25 351.92L937.75 348.50L938.25 345.43L938.75 342.75L939.25 340.48L939.75 338.61L940.25 337.18L940.75 336.18L941.25 335.62L941.76 335.52L942.26 335.86L942.76 336.64L943.26 337.87L943.76 339.53L944.26 341.61L944.76 344.10L945.26 346.98L945.76 350.23L946.26 353.84L946.76 357.77L947.26 362.01L947.77 366.52L948.27 371.28L948.77 376.25L949.27 381.40L949.77 386.70L950.27 392.11L950.77 397.61L951.27 403.14L951.77 408.68L952.27 414.18L952.77 419.62L953.28 424.96L953.78 430.17L954.28 435.20L954.78 440.02L955.28 444.61L955.78 448.94L956.28 452.97L956.78 456.68L957.28 460.05L957.78 463.05L958.28 465.66L958.79 467.87L959.29 469.66L959.79 471.02L960.29 471.95L960.79 472.43L961.29 472.46L961.79 472.04L962.29 471.18L962.79 469.88L963.29 468.15L963.79 466.00L964.30 463.44L964.80 460.50L965.30 457.18L965.80 453.52L966.30 449.53L966.80 445.25L967.30 440.69L967.80 435.90L968.30 430.89L968.80 425.71L969.30 420.39L969.80 414.96L970.31 409.46L970.81 403.93L971.31 398.39L971.81 392.89L972.31 387.47L972.81 382.15L973.31 376.97L973.81 371.97L974.31 367.19L974.81 362.64L975.31 358.36L975.82 354.38L976.32 350.73L976.82 347.42L977.32 344.49L977.82 341.94L978.32 339.80L978.82 338.08L979.32 336.79L979.82 335.94L980.32 335.54L980.82 335.58L981.33 336.07L981.83 337.01L982.33 338.38L982.83 340.18L983.33 342.41L983.83 345.03L984.33 348.04L984.83 351.41L985.33 355.13L985.83 359.17L986.33 363.51L986.84 368.10L987.34 372.94L987.84 377.97L988.34 383.18L988.84 388.52L989.34 393.96L989.84 399.47L990.34 405.01L990.84 410.54L991.34 416.03L991.84 421.44L992.34 426.74L992.85 431.89L993.35 436.85L993.85 441.60L994.35 446.10L994.85 450.33L995.35 454.26L995.85 457.86L996.35 461.10L996.85 463.97L997.35 466.45L997.85 468.52L998.36 470.17L998.86 471.38L999.36 472.16L999.86 472.49L1000.36 472.37L1000.86 471.80L1001.36 470.79L1001.86 469.34L1002.36 467.47L1002.86 465.18L1003.36 462.49L1003.87 459.42L1004.37 455.98L1004.87 452.21L1005.37 448.12L1005.87 443.74L1006.37 439.10L1006.87 434.23L1007.37 429.16L1007.87 423.93L1008.37 418.57L1008.87 413.11L1009.37 407.59L1009.88 402.05L1010.38 396.53L1010.88 391.05L1011.38 385.66L1011.88 380.38L1012.38 375.26L1012.88 370.33L1013.38 365.62L1013.88 361.16L1014.38 356.98L1014.88 353.11L1015.39 349.57L1015.89 346.39L1016.39 343.58L1016.89 341.17L1017.39 339.17L1017.89 337.59L1018.39 336.45L1018.89 335.75L1019.39 335.50L1019.89 335.70L1020.39 336.34L1020.90 337.42L1021.40 338.94L1021.90 340.89L1022.40 343.25L1022.90 346.00L1023.40 349.14L1023.90 352.63L1024.40 356.46L1024.90 360.61L1025.40 365.03L1025.90 369.71L1026.41 374.62L1026.91 379.71L1027.41 384.97L1027.91 390.35L1028.41 395.82L1028.91 401.34L1029.41 406.88L1029.91 412.40L1030.41 417.87L1030.91 423.24L1031.41 428.49L1031.91 433.58L1032.42 438.48L1032.92 443.15L1033.42 447.57L1033.92 451.70L1034.42 455.51L1034.92 458.99L1035.42 462.11L1035.92 464.85L1036.42 467.20L1036.92 469.13L1037.42 470.63L1037.93 471.70L1038.43 472.32L1038.93 472.50L1039.43 472.23L1039.93 471.51L1040.43 470.35L1040.93 468.76L1041.43 466.74L1041.93 464.31L1042.43 461.49L1042.93 458.30L1043.44 454.74L1043.94 450.86L1044.44 446.67L1044.94 442.20L1045.44 437.48L1045.94 432.54L1046.44 427.41L1046.94 422.13L1047.44 416.73L1047.94 411.25L1048.44 405.72L1048.95 400.18L1049.45 394.67L1049.95 389.22L1050.45 383.86L1050.95 378.63L1051.45 373.57L1051.95 368.71L1052.45 364.08L1052.95 359.72L1053.45 355.64L1053.95 351.88L1054.45 348.45L1054.96 345.40L1055.46 342.72L1055.96 340.45L1056.46 338.59L1056.96 337.16L1057.46 336.17L1057.96 335.62L1058.46 335.52L1058.96 335.86L1059.46 336.66L1059.96 337.89L1060.47 339.55L1060.97 341.64L1061.47 344.13L1061.97 347.02L1062.47 350.28L1062.97 353.89L1063.47 357.83L1063.97 362.07L1064.47 366.58L1064.97 371.34L1065.47 376.32L1065.98 381.47L1066.48 386.77L1066.98 392.19L1067.48 397.68L1067.98 403.21L1068.48 408.75L1068.98 414.26L1069.48 419.70L1069.98 425.03L1070.48 430.23L1070.98 435.26L1071.48 440.08L1071.99 444.67L1072.49 448.99L1072.99 453.02L1073.49 456.73L1073.99 460.09L1074.49 463.08L1074.99 465.69L1075.49 467.90L1075.99 469.68L1076.49 471.04L1076.99 471.96L1077.50 472.43L1078.00 472.46L1078.50 472.03L1079.00 471.17L1079.50 469.86L1080.00 468.12" stroke="#ffb032" stroke-width="1.5" fill="none"/></svg>
<svg class="a" style="left:844px;top:505px" width="250" height="20" viewBox="844 505 250 20"><path d="M910.9 519.1C912.4 510.1 915.9 510.1 918.4 515.6S924.4 521.1 925.9 512.1" stroke="#ffb032" stroke-width="1.3" fill="none"/><path d="M935.9 519.1L943.4 512.1L950.9 519.1" stroke="#a8a8a8" stroke-width="1" fill="none"/><path d="M961.4 519.1V512.1L975.9 519.1" stroke="#a8a8a8" stroke-width="1" fill="none"/><path d="M985.9 519.1V512.1H993.4V519.1H1000.9V512.1" stroke="#a8a8a8" stroke-width="1" fill="none"/><path d="M1010.9 518.6H1014.4V512.1H1017.4V518.6H1020.4V515.6H1022.9V512.6H1025.9" stroke="#a8a8a8" stroke-width="1" fill="none"/></svg>
<div class="a" style="left:844px;top:523px;width:250px;height:1px;background:#474747;"></div>
<div class="t" style="left:878.6px;top:527.53px;font-size:10px;color:#8e8e8e;">Rate</div>
<div class="t" style="left:924.5px;top:527.53px;font-size:10px;color:#8e8e8e;">Amount</div>
<div class="t" style="left:970.8px;top:527.53px;font-size:10px;color:#8e8e8e;">Shape</div>
<div class="t" style="left:1016.7px;top:527.53px;font-size:10px;color:#8e8e8e;">Offset</div>
<div class="t" style="left:879.8px;top:540.93px;font-size:10px;font-weight:bold;color:#ffb032;">4.51 Hz</div>
<div class="t" style="left:926.5px;top:540.93px;font-size:10px;font-weight:bold;color:#ffb032;">100 %</div>
<div class="t" style="left:972.7px;top:540.93px;font-size:10px;font-weight:bold;color:#ffb032;">-9.4 %</div>
<div class="t" style="left:1018.3px;top:540.93px;font-size:10px;font-weight:bold;color:#ffb032;">0.0°</div>
<div class="a" style="left:0px;top:571px;width:1103px;height:200px;background:#5d5d5d;"></div>
<div class="a" style="left:0px;top:767px;width:1103px;height:4px;background:#696969;"></div>
<div class="a" style="left:918px;top:767px;width:153px;height:4px;background:#5d5d5d;"></div>
<svg class="a" style="left:0px;top:645px" width="8" height="45" viewBox="0 645 8 45"><rect x="1.5" y="649" width="2.2" height="2.2" rx="0.8" fill="#454545"/><rect x="1.5" y="653" width="2.2" height="2.2" rx="0.8" fill="#454545"/><rect x="1.5" y="657" width="2.2" height="2.2" rx="0.8" fill="#454545"/><rect x="1.5" y="661" width="2.2" height="2.2" rx="0.8" fill="#454545"/><rect x="1.5" y="665" width="2.2" height="2.2" rx="0.8" fill="#454545"/><rect x="1.5" y="669" width="2.2" height="2.2" rx="0.8" fill="#454545"/><rect x="1.5" y="673" width="2.2" height="2.2" rx="0.8" fill="#454545"/><rect x="1.5" y="677" width="2.2" height="2.2" rx="0.8" fill="#454545"/><rect x="1.5" y="681" width="2.2" height="2.2" rx="0.8" fill="#454545"/><rect x="1.5" y="685" width="2.2" height="2.2" rx="0.8" fill="#454545"/></svg>
<div class="a" style="left:10px;top:575px;width:847px;height:188px;background:#a3a3a3;border-radius:6px 6px 4px 4px"></div>
<div class="a" style="left:10px;top:575px;width:847px;height:17px;background:#adbcc6;border-radius:6px 6px 0 0"></div>
<div class="a" style="left:12px;top:592px;width:232px;height:168px;background:#8c8c8c;border-radius:0 3px 0 3px"></div>
<div class="a" style="left:12px;top:592px;width:232px;height:95px;background:#282828;border-radius:0 3px 0 0"></div>
<div class="p" style="left:246px;top:592px;width:544px;height:168px;border-radius:4px"></div>
<div class="a" style="left:793px;top:593px;width:62px;height:167px;background:#8a8a8a;border-radius:4px"></div>
<div class="a" style="left:1096px;top:565px;width:7px;height:206px;background:#737373;"></div>
<div class="a" style="left:864px;top:571px;width:234px;height:196px;background:#5e5e5e;border-radius:4px"></div>
<div class="a" style="left:868px;top:575px;width:226px;height:188px;background:#8a8a8a;"></div>
<div class="t" style="left:922.0px;top:662.19px;font-size:11px;color:#1e1e1e;">Drop Audio Effects Here</div>
<svg class="a" style="left:10px;top:575px" width="100" height="17" viewBox="10 575 100 17"><circle cx="19.4" cy="583.3" r="5.4" fill="#ffb12f" stroke="#5a4a30" stroke-width="0.7"/><circle cx="35.6" cy="583.3" r="5.6" fill="#bdbdbd" stroke="#505050" stroke-width="0.9"/><path d="M35.6 579.2L39.3 586H31.9Z" fill="#111"/></svg>
<div class="t" style="left:46.2px;top:578.88px;font-size:10.3px;font-weight:bold;color:#1a1a1a;">Wavetable</div>
<svg class="a" style="left:820px;top:575px" width="37" height="17" viewBox="820 575 37 17"><circle cx="831.4" cy="583.4" r="5.8" fill="#b9b9b9" stroke="#4a4a4a" stroke-width="0.9"/><path d="M827.5 583.5q1-3 4.5-3.2M835.3 583.3q-1 3-4.5 3.2" stroke="#111" stroke-width="1.4" fill="none"/><path d="M829.5 579.3l3 1.2-2.6 1.6zM833.3 587.5l-3-1.2 2.6-1.6z" fill="#111"/><circle cx="847.5" cy="583.4" r="5.8" fill="#b9b9b9" stroke="#4a4a4a" stroke-width="0.9"/><path d="M844.2 580H850.2L851 580.9V586.8H844.2Z" fill="#111"/><rect x="846" y="580.6" width="3" height="1.8" fill="#ccc"/></svg>
<div class="a" style="left:17px;top:598px;width:9px;height:9px;background:#ffb032;"></div>
<svg class="a" style="left:33px;top:597px" width="24" height="11" viewBox="33 597 24 11"><path d="M34 599.6H43Q47.5 599.6 47.5 603V606.2" stroke="#ffb032" stroke-width="1.2" fill="none"/><path d="M50 601.2H55L52.5 604.2Z" fill="#ffb032"/></svg>
<div class="a" style="left:63px;top:597px;width:14px;height:11px;background:#5ccaf2;"></div>
<div class="t" style="left:64.6px;top:597.93px;font-size:10px;color:#111;">12</div>
<div class="t" style="left:84.0px;top:598.13px;font-size:10px;font-weight:bold;color:#ffb032;">OSR</div>
<svg class="a" style="left:111px;top:600.5px" width="7" height="5" viewBox="111 600.5 7 5"><path d="M112 601.5H117L114.5 604.5Z" fill="#ffb032"/></svg>
<div class="a" style="left:136px;top:598px;width:9px;height:9px;background:#ffb032;"></div>
<svg class="a" style="left:152px;top:597px" width="24" height="11" viewBox="152 597 24 11"><path d="M153 599.6H162Q166.5 599.6 166.5 603V606.2" stroke="#ffb032" stroke-width="1.2" fill="none"/><path d="M169 601.2H174L171.5 604.2Z" fill="#ffb032"/></svg>
<div class="a" style="left:182px;top:597px;width:14px;height:11px;background:#5ccaf2;"></div>
<div class="t" style="left:183.6px;top:597.93px;font-size:10px;color:#111;">12</div>
<div class="t" style="left:203.0px;top:598.13px;font-size:10px;font-weight:bold;color:#ffb032;">OSR</div>
<svg class="a" style="left:230px;top:600.5px" width="7" height="5" viewBox="230 600.5 7 5"><path d="M231 601.5H236L233.5 604.5Z" fill="#ffb032"/></svg>
<div class="a" style="left:128px;top:598px;width:1px;height:9px;background:#4a4a4a;"></div>
<svg class="a" style="left:12px;top:620px" width="232" height="52" viewBox="12 620 232 52"><path d="M12 640C30 638 45 635 55 630.5Q58.5 628.8 62 632L100.6 671.5" stroke="#5ccaf2" stroke-width="1.6" fill="none"/><circle cx="63.3" cy="646.5" r="5.3" fill="#282828" stroke="#ffb032" stroke-width="1.3"/><circle cx="237.3" cy="664.5" r="6.4" fill="#ffb032"/></svg>
<div class="t" style="left:60.8px;top:643.15px;font-size:8.8px;font-weight:bold;color:#ffb032;">1</div>
<div class="t" style="left:234.7px;top:661.53px;font-size:8px;font-weight:bold;color:#282828;">2</div>
<div class="a" style="left:12px;top:671px;width:232px;height:1px;background:#565656;"></div>
<svg class="a" style="left:14px;top:672px" width="30" height="14" viewBox="14 672 30 14"><path d="M18.5 679.3H21.5M26.5 679.3H28.5M33.5 679.3H36" stroke="#c0c0c0" stroke-width="1"/><rect x="21.8" y="677.3" width="4.2" height="4" fill="none" stroke="#c0c0c0" stroke-width="0.9"/><rect x="28.9" y="677.3" width="4.2" height="4" fill="none" stroke="#c0c0c0" stroke-width="0.9"/></svg>
<div class="t" style="left:42.1px;top:673.91px;font-size:10.5px;color:#8593a6;">Serial</div>
<svg class="a" style="left:78px;top:677.5px" width="7.5" height="5" viewBox="78 677.5 7.5 5"><path d="M79 678.5H84.5L81.75 681.5Z" fill="#8a8a8a"/></svg>
<svg class="a" style="left:12px;top:687px" width="232" height="73" viewBox="12 687 232 73"><path d="M29.40 722.80A8.4 8.4 0 0 1 21.08 713.23" stroke="#5ccaf2" stroke-width="2.0" fill="none"/><path d="M21.08 713.23A8.4 8.4 0 0 1 37.80 714.40" stroke="#2a2a2a" stroke-width="2.0" fill="none"/><path d="M20.19 713.11L28.61 714.29" stroke="#2a2a2a" stroke-width="2.0" stroke-linecap="butt"/><path d="M80.91 736.29A17.1 17.1 0 0 1 73.21 721.40" stroke="#5ccaf2" stroke-width="2.3" fill="none"/><path d="M73.21 721.40A17.1 17.1 0 1 1 99.96 736.11" stroke="#2a2a2a" stroke-width="2.3" fill="none"/><path d="M72.41 721.38L87.30 721.90" stroke="#2a2a2a" stroke-width="2.3" stroke-linecap="butt"/><path d="M155.31 736.59A17.1 17.1 0 1 1 174.36 736.41" stroke="#5ccaf2" stroke-width="2.3" fill="none"/><path d="M174.81 737.07L166.73 725.27" stroke="#2a2a2a" stroke-width="2.3" stroke-linecap="butt"/><path d="M203.20 722.60A8.4 8.4 0 1 1 211.60 714.20" stroke="#2a2a2a" stroke-width="2.0" fill="none"/><path d="M203.20 723.60L203.20 714.20" stroke="#2a2a2a" stroke-width="2.0" stroke-linecap="butt"/></svg>
<div class="a" style="left:127px;top:690px;width:1px;height:67px;background:#6c6c6c;"></div>
<div class="t" style="left:20.5px;top:692.03px;font-size:10px;color:#121212;">Res</div>
<div class="t" style="left:33.2px;top:717.93px;font-size:10px;color:#121212;">46 %</div>
<div class="t" style="left:21.6px;top:730.03px;font-size:10px;color:#121212;">Drive</div>
<div class="t" style="left:65.7px;top:691.61px;font-size:10.5px;color:#121212;">Frequency</div>
<div class="t" style="left:73.4px;top:742.73px;font-size:10px;color:#121212;">83.6 Hz</div>
<div class="t" style="left:139.2px;top:691.61px;font-size:10.5px;color:#121212;">Frequency</div>
<div class="t" style="left:194.4px;top:692.03px;font-size:10px;color:#121212;">Res</div>
<div class="t" style="left:144.5px;top:742.93px;font-size:10px;color:#121212;">20.5 kHz</div>
<div class="t" style="left:207.5px;top:718.03px;font-size:10px;color:#121212;">0.0 %</div>
<div class="t" style="left:195.9px;top:730.13px;font-size:10px;color:#121212;">Drive</div>
<div class="a" style="left:19px;top:743px;width:43px;height:13px;background:#454545;"></div>
<div class="a" style="left:20px;top:744px;width:41px;height:11px;background:#d2d2d2;"></div>
<div class="a" style="left:20px;top:744px;width:15px;height:11px;background:#62cdf5;"></div>
<div class="t" style="left:23.5px;top:745.13px;font-size:10px;color:#121212;">9.00 dB</div>
<div class="a" style="left:193px;top:743px;width:43px;height:13px;background:#454545;"></div>
<div class="a" style="left:194px;top:744px;width:41px;height:11px;background:#d2d2d2;"></div>
<div class="a" style="left:194px;top:744px;width:9px;height:11px;background:#62cdf5;"></div>
<div class="t" style="left:197.5px;top:745.13px;font-size:10px;color:#121212;">5.44 dB</div>
<div class="t" style="left:254.8px;top:597.86px;font-size:10.8px;color:#8e8e8e;">Target</div>
<div class="t" style="left:329px;width:39px;text-align:center;top:596.63px;font-weight:bold;color:#62c8f0">Amp</div>
<div class="a" style="left:329px;top:610px;width:39px;height:1.5px;background:#3f8fb3;"></div>
<div class="t" style="left:369px;width:39px;text-align:center;top:596.63px;font-weight:bold;color:#62c8f0">Env 2</div>
<div class="a" style="left:369px;top:610px;width:39px;height:1.5px;background:#3f8fb3;"></div>
<div class="t" style="left:409px;width:39px;text-align:center;top:596.63px;font-weight:bold;color:#62c8f0">Env 3</div>
<div class="a" style="left:409px;top:610px;width:39px;height:1.5px;background:#3f8fb3;"></div>
<div class="t" style="left:449px;width:39px;text-align:center;top:596.63px;font-weight:bold;color:#ffb032">LFO 1</div>
<div class="a" style="left:449px;top:610px;width:19px;height:1.5px;background:#b98035;"></div>
<div class="a" style="left:469px;top:610px;width:19px;height:1.5px;background:#b98035;"></div>
<div class="t" style="left:489px;width:39px;text-align:center;top:596.63px;font-weight:bold;color:#ffb032">LFO 2</div>
<div class="a" style="left:489px;top:610px;width:19px;height:1.5px;background:#b98035;"></div>
<div class="a" style="left:509px;top:610px;width:19px;height:1.5px;background:#b98035;"></div>
<div class="t" style="left:529px;width:39px;text-align:center;top:596.63px;font-weight:bold;color:#3cf03c">Vel</div>
<div class="a" style="left:529px;top:610px;width:19px;height:1.5px;background:#2c9e2c;"></div>
<div class="a" style="left:549px;top:610px;width:19px;height:1.5px;background:#2c9e2c;"></div>
<div class="t" style="left:569px;width:39px;text-align:center;top:596.63px;font-weight:bold;color:#3cf03c">Note</div>
<div class="a" style="left:569px;top:610px;width:19px;height:1.5px;background:#2c9e2c;"></div>
<div class="a" style="left:589px;top:610px;width:19px;height:1.5px;background:#2c9e2c;"></div>
<div class="t" style="left:609px;width:39px;text-align:center;top:596.63px;font-weight:bold;color:#3cf03c">PB</div>
<div class="a" style="left:609px;top:610px;width:19px;height:1.5px;background:#2c9e2c;"></div>
<div class="a" style="left:629px;top:610px;width:19px;height:1.5px;background:#2c9e2c;"></div>
<div class="t" style="left:649px;width:39px;text-align:center;top:596.63px;font-weight:bold;color:#3cf03c">AT</div>
<div class="a" style="left:649px;top:610px;width:19px;height:1.5px;background:#2c9e2c;"></div>
<div class="a" style="left:669px;top:610px;width:19px;height:1.5px;background:#2c9e2c;"></div>
<div class="t" style="left:689px;width:39px;text-align:center;top:596.63px;font-weight:bold;color:#3cf03c">Mod</div>
<div class="a" style="left:689px;top:610px;width:19px;height:1.5px;background:#2c9e2c;"></div>
<div class="a" style="left:709px;top:610px;width:19px;height:1.5px;background:#2c9e2c;"></div>
<div class="t" style="left:729px;width:39px;text-align:center;top:596.63px;font-weight:bold;color:#3cf03c">Rand</div>
<div class="a" style="left:729px;top:610px;width:19px;height:1.5px;background:#2c9e2c;"></div>
<div class="a" style="left:749px;top:610px;width:19px;height:1.5px;background:#2c9e2c;"></div>
<div class="a" style="left:246px;top:613px;width:544px;height:127px;overflow:hidden">
<div class="a" style="left:4px;top:0px;width:78px;height:18px;background:repeating-linear-gradient(135deg,#2b2b2b 0px,#2b2b2b 1px,#303030 1px,#303030 2px)"></div>
<div class="a" style="left:4px;top:0px;width:47px;height:18px;background:#3b3b3b"></div>
<div class="t" style="left:8.2px;top:3.93px;color:#8a8a8a">Amp</div>
<div class="a" style="left:83px;top:0px;width:39px;height:18px;background:#3b3b3b"></div>
<div class="a" style="left:123px;top:0px;width:39px;height:18px;background:#3b3b3b"></div>
<div class="a" style="left:163px;top:0px;width:39px;height:18px;background:#3b3b3b"></div>
<div class="a" style="left:203px;top:0px;width:39px;height:18px;background:#3b3b3b"></div>
<div class="a" style="left:243px;top:0px;width:39px;height:18px;background:#3b3b3b"></div>
<div class="a" style="left:283px;top:0px;width:39px;height:18px;background:#262626"></div>
<div class="t" style="left:283px;width:39px;text-align:center;top:3.73px;font-weight:bold;color:#3cf03c">50</div>
<div class="a" style="left:283px;top:16px;width:39px;height:1px;background:#1f6e1f"></div>
<div class="a" style="left:303px;top:15.5px;width:19px;height:2.5px;background:#3cf03c"></div>
<div class="a" style="left:323px;top:0px;width:39px;height:18px;background:#3b3b3b"></div>
<div class="a" style="left:363px;top:0px;width:39px;height:18px;background:#3b3b3b"></div>
<div class="a" style="left:403px;top:0px;width:39px;height:18px;background:#3b3b3b"></div>
<div class="a" style="left:443px;top:0px;width:39px;height:18px;background:#3b3b3b"></div>
<div class="a" style="left:483px;top:0px;width:39px;height:18px;background:#3b3b3b"></div>
<div class="a" style="left:4px;top:19px;width:78px;height:18px;background:repeating-linear-gradient(135deg,#2b2b2b 0px,#2b2b2b 1px,#303030 1px,#303030 2px)"></div>
<div class="a" style="left:4px;top:19px;width:39px;height:18px;background:#3b3b3b"></div>
<div class="t" style="left:8.2px;top:22.93px;color:#8a8a8a">Pitch</div>
<div class="a" style="left:83px;top:19px;width:39px;height:18px;background:#3b3b3b"></div>
<div class="a" style="left:123px;top:19px;width:39px;height:18px;background:#3b3b3b"></div>
<div class="a" style="left:163px;top:19px;width:39px;height:18px;background:#3b3b3b"></div>
<div class="a" style="left:203px;top:19px;width:39px;height:18px;background:#3b3b3b"></div>
<div class="a" style="left:243px;top:19px;width:39px;height:18px;background:#3b3b3b"></div>
<div class="a" style="left:283px;top:19px;width:39px;height:18px;background:#3b3b3b"></div>
<div class="a" style="left:323px;top:19px;width:39px;height:18px;background:#3b3b3b"></div>
<div class="a" style="left:363px;top:19px;width:39px;height:18px;background:#262626"></div>
<div class="t" style="left:363px;width:39px;text-align:center;top:22.73px;font-weight:bold;color:#3cf03c">2</div>
<div class="a" style="left:363px;top:35px;width:39px;height:1px;background:#1f6e1f"></div>
<div class="a" style="left:382.5px;top:34.5px;width:1.5px;height:2.5px;background:#3cf03c"></div>
<div class="a" style="left:403px;top:19px;width:39px;height:18px;background:#3b3b3b"></div>
<div class="a" style="left:443px;top:19px;width:39px;height:18px;background:#3b3b3b"></div>
<div class="a" style="left:483px;top:19px;width:39px;height:18px;background:#3b3b3b"></div>
<div class="a" style="left:4px;top:38px;width:78px;height:18px;background:repeating-linear-gradient(135deg,#2b2b2b 0px,#2b2b2b 1px,#303030 1px,#303030 2px)"></div>
<div class="a" style="left:4px;top:38px;width:24px;height:18px;background:#3b3b3b"></div>
<div class="t" style="left:8.2px;top:41.93px;color:#8a8a8a">Osc 1 Pos</div>
<div class="a" style="left:83px;top:38px;width:39px;height:18px;background:#3b3b3b"></div>
<div class="a" style="left:123px;top:38px;width:39px;height:18px;background:#3b3b3b"></div>
<div class="a" style="left:163px;top:38px;width:39px;height:18px;background:#3b3b3b"></div>
<div class="a" style="left:203px;top:38px;width:39px;height:18px;background:#3b3b3b"></div>
<div class="a" style="left:243px;top:38px;width:39px;height:18px;background:#3b3b3b"></div>
<div class="a" style="left:283px;top:38px;width:39px;height:18px;background:#3b3b3b"></div>
<div class="a" style="left:323px;top:38px;width:39px;height:18px;background:#3b3b3b"></div>
<div class="a" style="left:363px;top:38px;width:39px;height:18px;background:#3b3b3b"></div>
<div class="a" style="left:403px;top:38px;width:39px;height:18px;background:#3b3b3b"></div>
<div class="a" style="left:443px;top:38px;width:39px;height:18px;background:#262626"></div>
<div class="t" style="left:443px;width:39px;text-align:center;top:41.73px;font-weight:bold;color:#3cf03c">100</div>
<div class="a" style="left:443px;top:54px;width:39px;height:1px;background:#1f6e1f"></div>
<div class="a" style="left:463px;top:53.5px;width:19px;height:2.5px;background:#3cf03c"></div>
<div class="a" style="left:483px;top:38px;width:39px;height:18px;background:#3b3b3b"></div>
<div class="a" style="left:4px;top:57px;width:78px;height:18px;background:repeating-linear-gradient(135deg,#2b2b2b 0px,#2b2b2b 1px,#303030 1px,#303030 2px)"></div>
<div class="a" style="left:4px;top:57px;width:29px;height:18px;background:#3b3b3b"></div>
<div class="t" style="left:8.2px;top:60.93px;color:#8a8a8a">Osc 1 FM Amt</div>
<div class="a" style="left:83px;top:57px;width:39px;height:18px;background:#3b3b3b"></div>
<div class="a" style="left:123px;top:57px;width:39px;height:18px;background:#3b3b3b"></div>
<div class="a" style="left:163px;top:57px;width:39px;height:18px;background:#3b3b3b"></div>
<div class="a" style="left:203px;top:57px;width:39px;height:18px;background:#3b3b3b"></div>
<div class="a" style="left:243px;top:57px;width:39px;height:18px;background:#262626"></div>
<div class="t" style="left:243px;width:39px;text-align:center;top:60.73px;font-weight:bold;color:#ffb032">-73</div>
<div class="a" style="left:243px;top:73px;width:39px;height:1px;background:#6e5224"></div>
<div class="a" style="left:248px;top:72.5px;width:15px;height:2.5px;background:#ffb032"></div>
<div class="a" style="left:283px;top:57px;width:39px;height:18px;background:#3b3b3b"></div>
<div class="a" style="left:323px;top:57px;width:39px;height:18px;background:#3b3b3b"></div>
<div class="a" style="left:363px;top:57px;width:39px;height:18px;background:#3b3b3b"></div>
<div class="a" style="left:403px;top:57px;width:39px;height:18px;background:#3b3b3b"></div>
<div class="a" style="left:443px;top:57px;width:39px;height:18px;background:#3b3b3b"></div>
<div class="a" style="left:483px;top:57px;width:39px;height:18px;background:#3b3b3b"></div>
<div class="a" style="left:4px;top:76px;width:78px;height:18px;background:repeating-linear-gradient(135deg,#2b2b2b 0px,#2b2b2b 1px,#303030 1px,#303030 2px)"></div>
<div class="a" style="left:4px;top:76px;width:43px;height:18px;background:#3b3b3b"></div>
<div class="t" style="left:8.2px;top:79.93px;color:#8a8a8a">Osc 2 FM Amt</div>
<div class="a" style="left:83px;top:76px;width:39px;height:18px;background:#3b3b3b"></div>
<div class="a" style="left:123px;top:76px;width:39px;height:18px;background:#3b3b3b"></div>
<div class="a" style="left:163px;top:76px;width:39px;height:18px;background:#3b3b3b"></div>
<div class="a" style="left:203px;top:76px;width:39px;height:18px;background:#3b3b3b"></div>
<div class="a" style="left:243px;top:76px;width:39px;height:18px;background:#262626"></div>
<div class="t" style="left:243px;width:39px;text-align:center;top:79.73px;font-weight:bold;color:#ffb032">-9.4</div>
<div class="a" style="left:243px;top:92px;width:39px;height:1px;background:#6e5224"></div>
<div class="a" style="left:261.5px;top:91.5px;width:2.0px;height:2.5px;background:#ffb032"></div>
<div class="a" style="left:283px;top:76px;width:39px;height:18px;background:#3b3b3b"></div>
<div class="a" style="left:323px;top:76px;width:39px;height:18px;background:#3b3b3b"></div>
<div class="a" style="left:363px;top:76px;width:39px;height:18px;background:#3b3b3b"></div>
<div class="a" style="left:403px;top:76px;width:39px;height:18px;background:#3b3b3b"></div>
<div class="a" style="left:443px;top:76px;width:39px;height:18px;background:#3b3b3b"></div>
<div class="a" style="left:483px;top:76px;width:39px;height:18px;background:#3b3b3b"></div>
<div class="a" style="left:4px;top:95px;width:78px;height:18px;background:repeating-linear-gradient(135deg,#2b2b2b 0px,#2b2b2b 1px,#303030 1px,#303030 2px)"></div>
<div class="a" style="left:4px;top:95px;width:16px;height:18px;background:#3b3b3b"></div>
<div class="t" style="left:8.2px;top:98.93px;color:#8a8a8a">Filter 1 Freq</div>
<div class="a" style="left:83px;top:95px;width:39px;height:18px;background:#3b3b3b"></div>
<div class="a" style="left:123px;top:95px;width:39px;height:18px;background:#262626"></div>
<div class="t" style="left:123px;width:39px;text-align:center;top:98.73px;font-weight:bold;color:#62c8f0">78</div>
<div class="a" style="left:123px;top:111px;width:39px;height:1px;background:#2a5a70"></div>
<div class="a" style="left:143px;top:110.5px;width:16px;height:2.5px;background:#62c8f0"></div>
<div class="a" style="left:163px;top:95px;width:39px;height:18px;background:#3b3b3b"></div>
<div class="a" style="left:203px;top:95px;width:39px;height:18px;background:#3b3b3b"></div>
<div class="a" style="left:243px;top:95px;width:39px;height:18px;background:#3b3b3b"></div>
<div class="a" style="left:283px;top:95px;width:39px;height:18px;background:#3b3b3b"></div>
<div class="a" style="left:323px;top:95px;width:39px;height:18px;background:#3b3b3b"></div>
<div class="a" style="left:363px;top:95px;width:39px;height:18px;background:#3b3b3b"></div>
<div class="a" style="left:403px;top:95px;width:39px;height:18px;background:#3b3b3b"></div>
<div class="a" style="left:443px;top:95px;width:39px;height:18px;background:#3b3b3b"></div>
<div class="a" style="left:483px;top:95px;width:39px;height:18px;background:#3b3b3b"></div>
<div class="a" style="left:4px;top:114px;width:78px;height:18px;background:repeating-linear-gradient(135deg,#2b2b2b 0px,#2b2b2b 1px,#303030 1px,#303030 2px)"></div>
<div class="a" style="left:4px;top:114px;width:33px;height:18px;background:#3b3b3b"></div>
<div class="t" style="left:8.2px;top:117.93px;color:#8a8a8a">Env 2 Decay</div>
<div class="a" style="left:83px;top:114px;width:39px;height:18px;background:#3b3b3b"></div>
<div class="a" style="left:123px;top:114px;width:39px;height:18px;background:#3b3b3b"></div>
<div class="a" style="left:163px;top:114px;width:39px;height:18px;background:#3b3b3b"></div>
<div class="a" style="left:203px;top:114px;width:39px;height:18px;background:#262626"></div>
<div class="t" style="left:203px;width:39px;text-align:center;top:117.73px;font-weight:bold;color:#ffb032">-11</div>
<div class="a" style="left:243px;top:114px;width:39px;height:18px;background:#3b3b3b"></div>
<div class="a" style="left:283px;top:114px;width:39px;height:18px;background:#3b3b3b"></div>
<div class="a" style="left:323px;top:114px;width:39px;height:18px;background:#3b3b3b"></div>
<div class="a" style="left:363px;top:114px;width:39px;height:18px;background:#3b3b3b"></div>
<div class="a" style="left:403px;top:114px;width:39px;height:18px;background:#3b3b3b"></div>
<div class="a" style="left:443px;top:114px;width:39px;height:18px;background:#3b3b3b"></div>
<div class="a" style="left:483px;top:114px;width:39px;height:18px;background:#3b3b3b"></div>
</div>
<div class="a" style="left:776px;top:616px;width:7px;height:111px;background:#4c4c4c;border-radius:3.5px"></div>
<div class="t" style="left:254.2px;top:744.53px;font-size:10px;color:#8a8a8a;">Global</div>
<div class="t" style="left:623.6px;top:744.53px;font-size:10px;color:#8a8a8a;">Time</div>
<div class="t" style="left:652.2px;top:744.53px;font-size:10px;font-weight:bold;color:#f0f0f0;">0.0 %</div>
<div class="t" style="left:699.4px;top:744.53px;font-size:10px;color:#8a8a8a;">Amount</div>
<div class="t" style="left:745.0px;top:744.53px;font-size:10px;font-weight:bold;color:#f0f0f0;">100 %</div>
<div class="t" style="left:796.3px;top:596.41px;font-size:10.5px;color:#121212;">Volume</div>
<div class="a" style="left:796px;top:608px;width:56px;height:13px;background:#454545;"></div>
<div class="a" style="left:797px;top:609px;width:54px;height:11px;background:#d2d2d2;"></div>
<div class="a" style="left:797px;top:609px;width:32px;height:11px;background:#62cdf5;"></div>
<div class="t" style="left:808.0px;top:610.13px;font-size:10px;color:#121212;">-9.0 dB</div>
<div class="a" style="left:795px;top:623px;width:58px;height:1px;background:#6e6e6e;"></div>
<div class="a" style="left:796px;top:627px;width:31px;height:13px;background:#454545;"></div>
<div class="a" style="left:797px;top:628px;width:29px;height:11px;background:#ffb12f;"></div>
<div class="t" style="left:801.4px;top:628.91px;font-size:10.5px;color:#121212;">Poly</div>
<div class="a" style="left:831px;top:627px;width:21px;height:13px;background:#454545;"></div>
<div class="a" style="left:832px;top:628px;width:19px;height:11px;background:#d2d2d2;"></div>
<div class="t" style="left:834.0px;top:628.61px;font-size:10.5px;color:#121212;">8</div>
<svg class="a" style="left:840px;top:630px" width="11" height="8" viewBox="840 630 11 8"><path d="M842.2 631.6H849.8L846 636.8Z" fill="#111"/></svg>
<div class="t" style="left:796.3px;top:641.81px;font-size:10.5px;color:#121212;">Glide</div>
<div class="a" style="left:796px;top:653px;width:56px;height:13px;background:#454545;"></div>
<div class="a" style="left:797px;top:654px;width:54px;height:11px;background:#8c8c8c;"></div>
<div class="t" style="left:806.5px;top:654.71px;font-size:10.5px;color:#121212;">0.00 ms</div>
<div class="a" style="left:795px;top:670px;width:58px;height:1px;background:#6e6e6e;"></div>
<div class="t" style="left:796.7px;top:673.41px;font-size:10.5px;color:#121212;">Unison</div>
<div class="a" style="left:796px;top:685px;width:56px;height:13px;background:#454545;"></div>
<div class="a" style="left:797px;top:686px;width:54px;height:11px;background:#d2d2d2;"></div>
<div class="t" style="left:799.0px;top:686.61px;font-size:10.5px;color:#121212;">Classic</div>
<svg class="a" style="left:840px;top:688px" width="11" height="8" viewBox="840 688 11 8"><path d="M843.2 689.6H850.2L846.7 694.8Z" fill="#111"/></svg>
<div class="t" style="left:796.7px;top:699.21px;font-size:10.5px;color:#121212;">Voices</div>
<div class="a" style="left:796px;top:711px;width:56px;height:13px;background:#454545;"></div>
<div class="a" style="left:797px;top:712px;width:54px;height:11px;background:#d2d2d2;"></div>
<div class="a" style="left:797px;top:712px;width:45px;height:11px;background:#62cdf5;"></div>
<div class="t" style="left:820.5px;top:712.71px;font-size:10.5px;color:#121212;">7</div>
<div class="t" style="left:796.7px;top:725.41px;font-size:10.5px;color:#121212;">Amount</div>
<div class="a" style="left:796px;top:737px;width:56px;height:13px;background:#454545;"></div>
<div class="a" style="left:797px;top:738px;width:54px;height:11px;background:#d2d2d2;"></div>
<div class="a" style="left:797px;top:738px;width:9px;height:11px;background:#62cdf5;"></div>
<div class="t" style="left:814.0px;top:738.71px;font-size:10.5px;color:#121212;">17 %</div>
<div class="a" style="left:860px;top:649px;width:2px;height:41px;background:#3a3a3a;"></div>
<div class="a" style="left:863px;top:649px;width:2px;height:41px;background:#3a3a3a;"></div>
<div class="a" style="left:860px;top:652.5px;width:2px;height:1px;background:#bdbdbd;"></div>
<div class="a" style="left:863px;top:652.5px;width:2px;height:1px;background:#bdbdbd;"></div>
</body></html>
